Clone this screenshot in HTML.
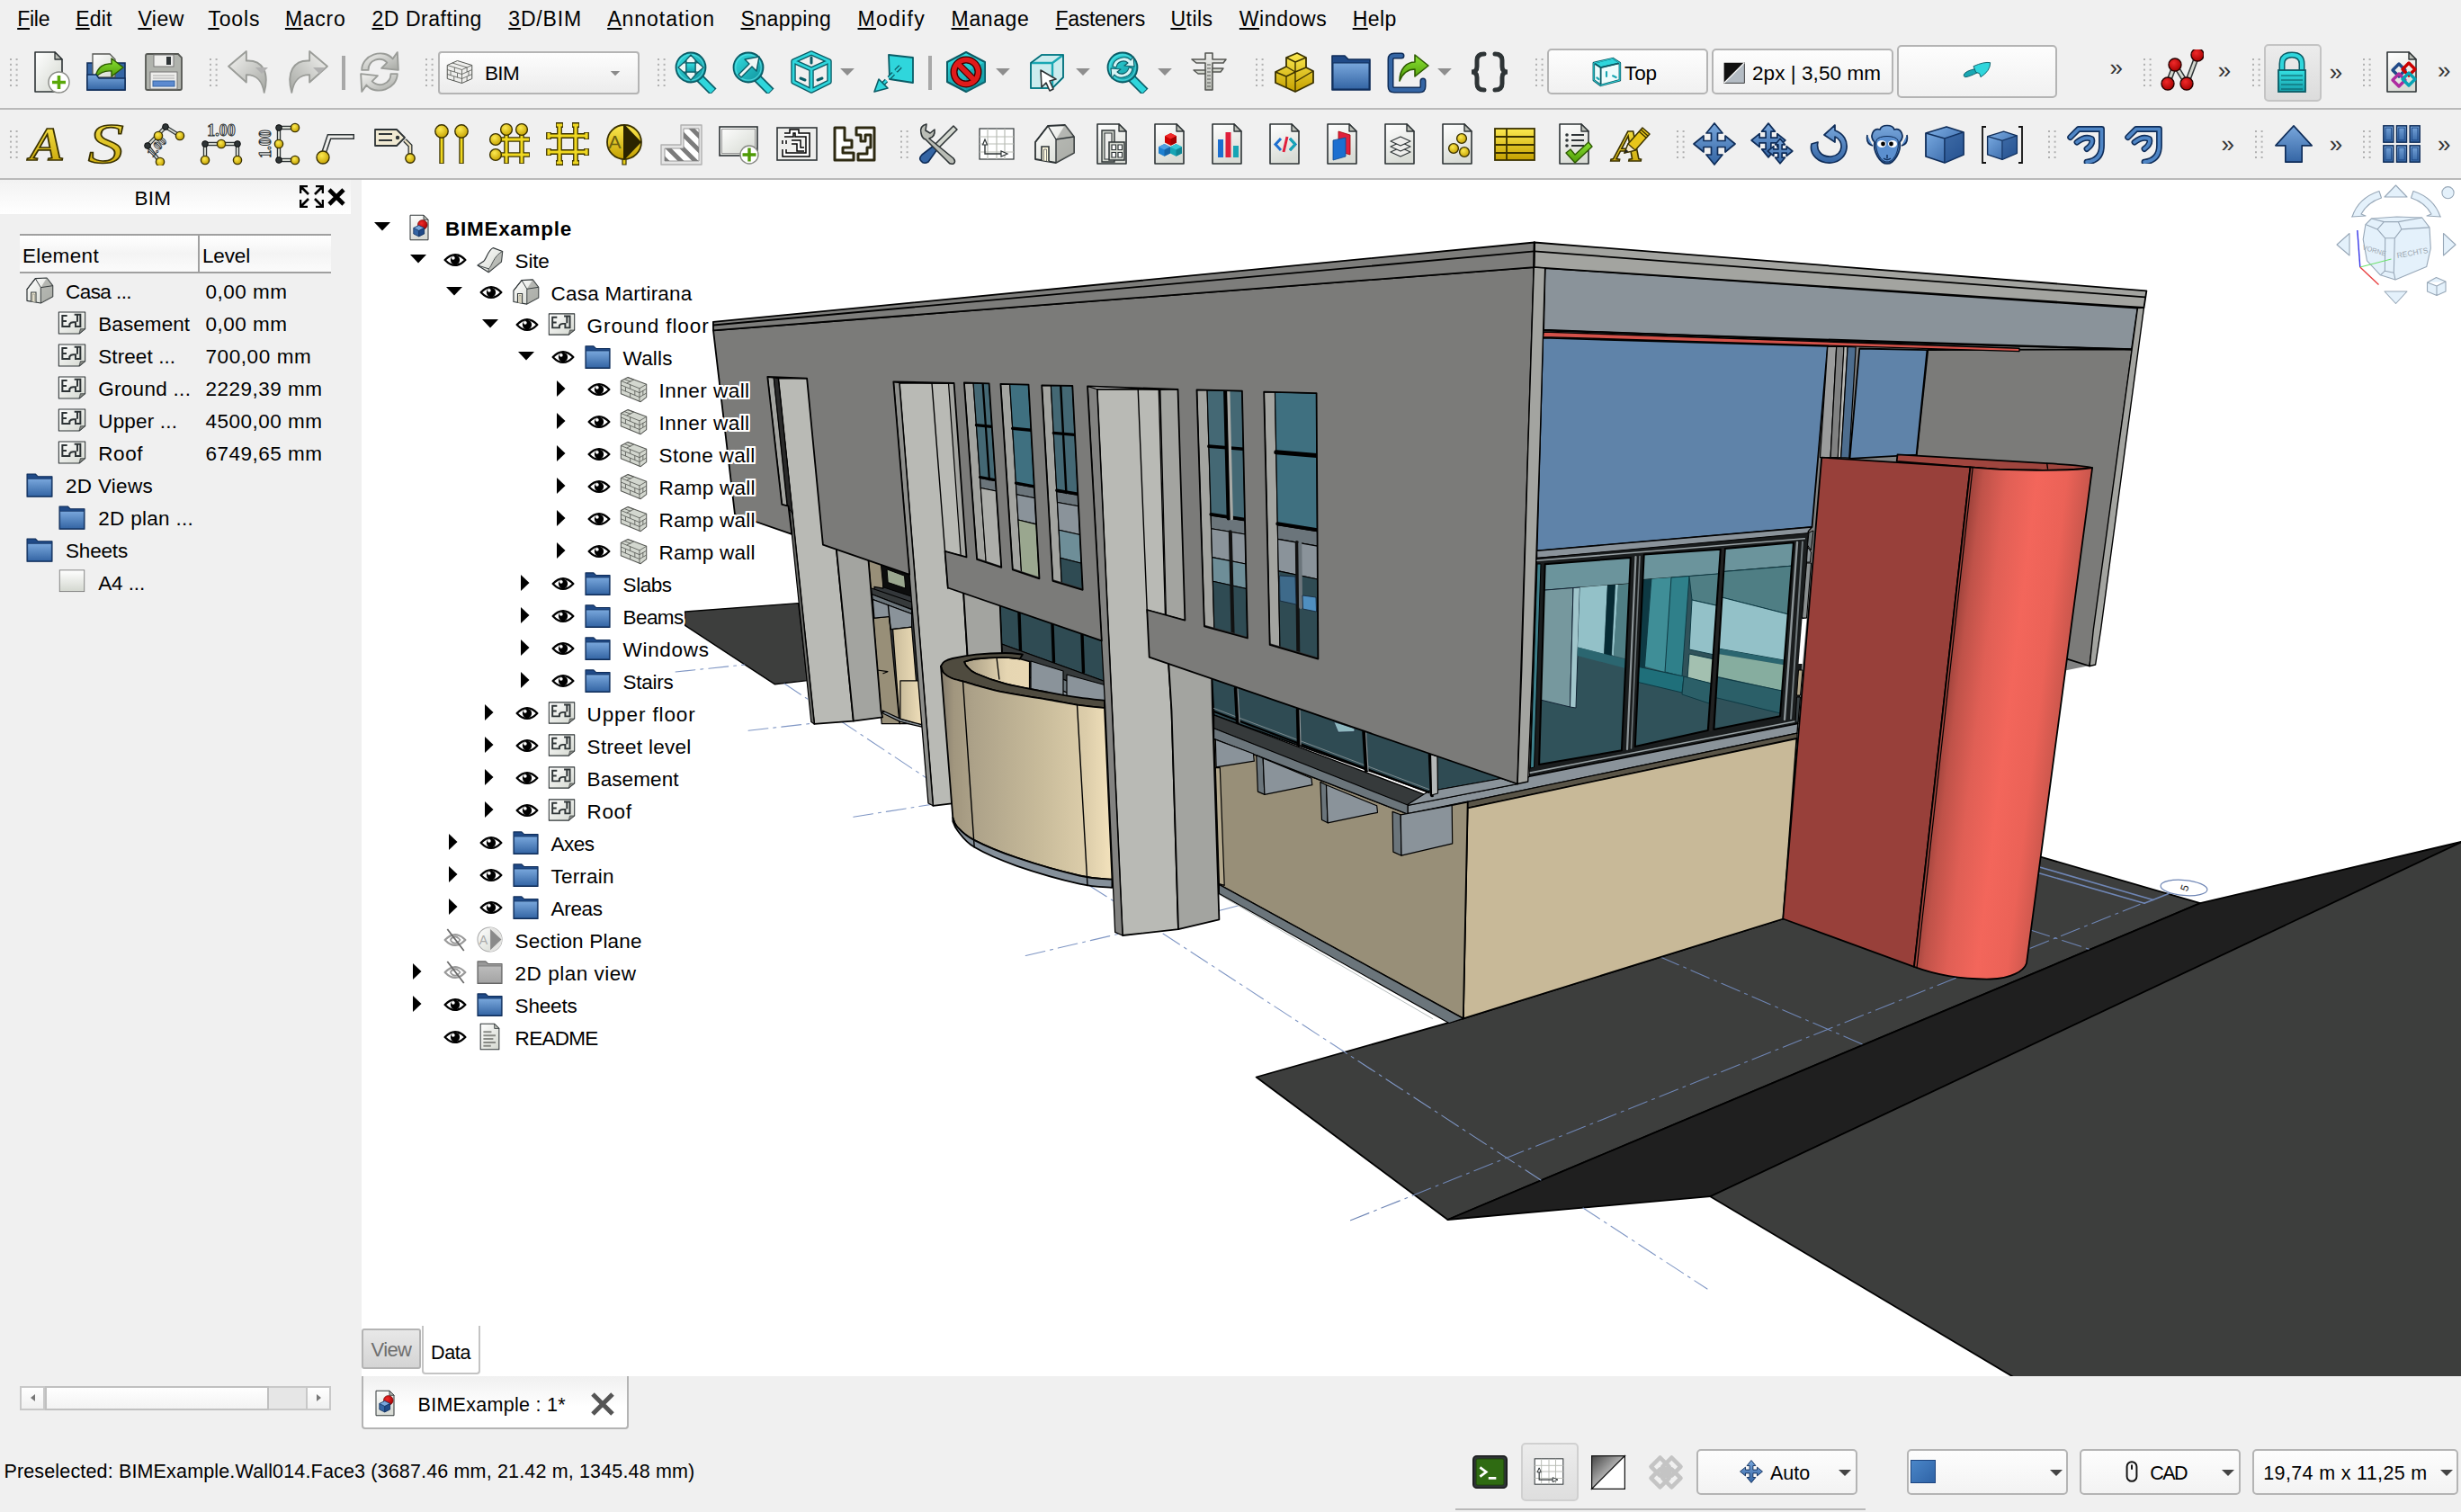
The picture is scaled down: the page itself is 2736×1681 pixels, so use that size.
<!DOCTYPE html><html><head><meta charset="utf-8"><title>FreeCAD BIM</title><style>
html,body{margin:0;padding:0}
body{width:2736px;height:1681px;position:relative;overflow:hidden;background:#f0f0f0;font-family:"Liberation Sans",sans-serif;color:#000}
.abs{position:absolute}
.t{position:absolute;white-space:nowrap;line-height:1}
</style></head><body>
<div class="abs" style="left:402px;top:200px;width:2334px;height:1330px;background:#fff"></div>
<svg width="2334" height="1330" viewBox="402 200 2334 1330" style="position:absolute;left:402px;top:200px;display:block"><defs>
<linearGradient id="gcyl" x1="0" y1="0" x2="1" y2="0"><stop offset="0" stop-color="#9c423b"/><stop offset="0.12" stop-color="#c4544b"/><stop offset="0.35" stop-color="#e56258"/><stop offset="0.55" stop-color="#f3665b"/><stop offset="0.8" stop-color="#e96156"/><stop offset="1" stop-color="#c4544b"/></linearGradient>
<linearGradient id="gcurve" x1="0" y1="0" x2="1" y2="0"><stop offset="0" stop-color="#857c69"/><stop offset="0.1" stop-color="#a69b82"/><stop offset="0.45" stop-color="#c0b496"/><stop offset="0.8" stop-color="#d9cba8"/><stop offset="1" stop-color="#f3e2bc"/></linearGradient>
<linearGradient id="gcurve2" x1="0" y1="0" x2="1" y2="0"><stop offset="0" stop-color="#a69b82"/><stop offset="0.5" stop-color="#e6d6b2"/><stop offset="1" stop-color="#ead9b5"/></linearGradient>
<linearGradient id="gcylu" gradientUnits="userSpaceOnUse" x1="2193" y1="520" x2="2326" y2="520" gradientTransform="matrix(1 0 -0.122 1 63.4 0)"><stop offset="0" stop-color="#9c423b"/><stop offset="0.1" stop-color="#bf5249"/><stop offset="0.3" stop-color="#e05f55"/><stop offset="0.55" stop-color="#f3665b"/><stop offset="0.8" stop-color="#eb6257"/><stop offset="1" stop-color="#c8564c"/></linearGradient>
<linearGradient id="gcurveu" gradientUnits="userSpaceOnUse" x1="1045" y1="0" x2="1236" y2="0"><stop offset="0" stop-color="#80786a"/><stop offset="0.08" stop-color="#a1967e"/><stop offset="0.2" stop-color="#ada289"/><stop offset="0.6" stop-color="#c9bc9b"/><stop offset="0.85" stop-color="#dccdaa"/><stop offset="1" stop-color="#f3e2bc"/></linearGradient>
<linearGradient id="gsmall" x1="0" y1="0" x2="1" y2="0"><stop offset="0" stop-color="#c9bc9b"/><stop offset="1" stop-color="#f0dfba"/></linearGradient>
</defs><polygon points="761.6,680.0 887.6,670.6 897.6,756.6 861.2,760.7 761.6,695.3" fill="#3d3e3d" stroke="#000" stroke-width="1.4" stroke-linejoin="round" />
<polygon points="1396.6,1197.5 1626.8,1132.4 1982.5,1021.5 2268.6,952.6 2446.0,1004.2 1609.5,1356.0" fill="#3d3e3d" stroke="#000" stroke-width="1.8" stroke-linejoin="round" />
<polygon points="1609.5,1356.0 2446.0,1004.2 2736.0,936.0 2740.0,936.0 1901.4,1330.2" fill="#1f1f1f" stroke="#000" stroke-width="1.8" stroke-linejoin="round" />
<polygon points="1901.4,1330.2 2740.0,934.5 2740.0,1534.0 2243.5,1534.0" fill="#3d3e3d" stroke="#000" stroke-width="1.8" stroke-linejoin="round" />
<polyline points="751.0,747.0 828.0,739.0" fill="none" stroke="#7f96c4" stroke-width="1.1" stroke-linecap="round" stroke-linejoin="round" stroke-dasharray="22 6 3 6"/>
<polyline points="872.0,760.0 1030.0,865.0" fill="none" stroke="#7f96c4" stroke-width="1.1" stroke-linecap="round" stroke-linejoin="round" stroke-dasharray="22 6 3 6"/>
<polyline points="832.0,812.3 905.0,804.0" fill="none" stroke="#7f96c4" stroke-width="1.1" stroke-linecap="round" stroke-linejoin="round" stroke-dasharray="22 6 3 6"/>
<polyline points="948.8,908.2 1034.8,894.5" fill="none" stroke="#7f96c4" stroke-width="1.1" stroke-linecap="round" stroke-linejoin="round" stroke-dasharray="22 6 3 6"/>
<polyline points="1140.3,1062.5 1244.4,1038.1" fill="none" stroke="#7f96c4" stroke-width="1.1" stroke-linecap="round" stroke-linejoin="round" stroke-dasharray="22 6 3 6"/>
<polyline points="1211.6,985.0 1238.0,1001.7" fill="none" stroke="#7f96c4" stroke-width="1.1" stroke-linecap="round" stroke-linejoin="round" stroke-dasharray="22 6 3 6"/>
<polyline points="1293.0,1038.0 1713.0,1312.0" fill="none" stroke="#7f96c4" stroke-width="1.1" stroke-linecap="round" stroke-linejoin="round" stroke-dasharray="22 6 3 6"/>
<polyline points="1760.0,1343.0 1898.0,1433.0" fill="none" stroke="#7f96c4" stroke-width="1.1" stroke-linecap="round" stroke-linejoin="round" stroke-dasharray="22 6 3 6"/>
<polyline points="1355.0,1012.5 1392.0,1002.8" fill="none" stroke="#7f96c4" stroke-width="1.1" stroke-linecap="round" stroke-linejoin="round" stroke-dasharray="22 6 3 6"/>
<polyline points="1501.5,1356.8 2379.0,1005.4" fill="none" stroke="#6f86b5" stroke-width="1.1" stroke-linecap="round" stroke-linejoin="round" stroke-dasharray="22 6 3 6"/>
<polyline points="1846.0,1064.0 2073.0,1162.0" fill="none" stroke="#6f86b5" stroke-width="1.1" stroke-linecap="round" stroke-linejoin="round" stroke-dasharray="22 6 3 6"/>
<polyline points="2257.5,1033.9 2325.7,1056.3" fill="none" stroke="#6f86b5" stroke-width="1.1" stroke-linecap="round" stroke-linejoin="round" stroke-dasharray="22 6 3 6"/>
<polyline points="2267.4,964.0 2393.9,1000.5" fill="none" stroke="#6f86b5" stroke-width="1.6" stroke-linecap="round" stroke-linejoin="round" />
<polyline points="2266.9,970.7 2384.0,1004.2" fill="none" stroke="#6f86b5" stroke-width="1.6" stroke-linecap="round" stroke-linejoin="round" />
<polyline points="2384.0,1004.2 2411.0,993.5" fill="none" stroke="#6f86b5" stroke-width="1.6" stroke-linecap="round" stroke-linejoin="round" />
<ellipse cx="2428" cy="987" rx="26" ry="8.5" fill="#fff" stroke="#6f86b5" stroke-width="1.2" transform="rotate(5 2428 987)"/>
<text x="2428" y="992" font-family="Liberation Sans, sans-serif" font-size="12" text-anchor="middle" fill="#222" transform="rotate(-70 2428 987)">5</text>
<polyline points="1354.9,994.2 1592.6,1132.5" fill="none" stroke="#b5bcbc" stroke-width="1" stroke-linecap="round" stroke-linejoin="round" />
<polygon points="1705.0,297.0 2376.0,342.0 2323.0,740.0 2000.0,805.0 1700.0,863.0" fill="#808181" stroke="none" stroke-width="1.8" stroke-linejoin="round" />
<polygon points="2143.3,389.0 2370.5,388.3 2323.1,740.5 2297.2,732.4 2250.0,715.0 2125.0,560.0" fill="#7b7b79" stroke="#000" stroke-width="1.8" stroke-linejoin="round" />
<polygon points="1717.7,298.0 2376.5,342.5 2369.9,388.3 2040.0,379.2 1716.1,366.6" fill="#8a939a" stroke="#000" stroke-width="1.8" stroke-linejoin="round" />
<polygon points="1715.2,375.7 2031.9,384.8 2014.5,586.0 1708.6,612.4" fill="#5f83a9" stroke="#000" stroke-width="1.8" stroke-linejoin="round" />
<polygon points="2031.8,385.4 2041.7,385.4 2035.1,508.6 2023.5,508.6" fill="#9b9c9c" stroke="#000" stroke-width="1.2" stroke-linejoin="round" />
<polygon points="2041.7,385.4 2050.0,385.4 2043.3,508.6 2035.1,508.6" fill="#808181" stroke="#000" stroke-width="1.2" stroke-linejoin="round" />
<polygon points="2050.0,385.4 2054.1,385.4 2046.7,508.6 2043.3,508.6" fill="#b4b5b2" stroke="#000" stroke-width="1" stroke-linejoin="round" />
<polygon points="2054.1,385.4 2063.2,385.8 2055.8,509.1 2046.7,508.6" fill="#4d6d8e" stroke="#000" stroke-width="1.2" stroke-linejoin="round" />
<polygon points="2067.3,387.5 2142.5,389.1 2130.6,505.7 2056.5,509.8" fill="#5f83a9" stroke="#000" stroke-width="1.8" stroke-linejoin="round" />
<polygon points="1716.1,369.1 2245.0,387.3 2245.0,390.6 1715.2,374.6" fill="#d4524a" stroke="#000" stroke-width="1.4" stroke-linejoin="round" />
<polyline points="1716.1,367.6 2369.9,388.3" fill="none" stroke="#000" stroke-width="2" stroke-linecap="round" stroke-linejoin="round" />
<polygon points="1705.8,269.5 2386.4,323.3 2383.5,342.0 1705.3,297.1" fill="#a3a4a0" stroke="#000" stroke-width="1.8" stroke-linejoin="round" />
<polyline points="1705.8,279.4 2385.0,330.4" fill="none" stroke="#000" stroke-width="1.8" stroke-linecap="round" stroke-linejoin="round" />
<polygon points="2383.5,342.0 2335.6,700.0 2329.6,739.0 2323.1,740.5 2327.3,700.0 2376.5,342.5" fill="#a3a4a0" stroke="#000" stroke-width="1.4" stroke-linejoin="round" />
<polygon points="1708.6,612.4 2014.5,586.0 2010.4,590.6 2009.6,595.9 1708.6,620.4" fill="#8a939a" stroke="#000" stroke-width="1.4" stroke-linejoin="round" />
<polygon points="1708.6,620.5 2010.4,592.6 1998.8,804.5 1700.4,863.2" fill="#1a1d1e" stroke="#000" stroke-width="1" stroke-linejoin="round" />
<polyline points="1708.6,623.2 2006.3,598.7" fill="none" stroke="#9aa3a6" stroke-width="1.6" stroke-linecap="round" stroke-linejoin="round" />
<polyline points="1701.2,859.1 1998.0,801.5" fill="none" stroke="#9aa3a6" stroke-width="1.6" stroke-linecap="round" stroke-linejoin="round" />
<clipPath id="p1"><polygon points="1717.7,627.3 1812.8,619.9 1802.9,834.3 1711.1,850.0"/></clipPath>
<clipPath id="p2"><polygon points="1827.7,616.6 1912.8,610.8 1898.8,811.9 1817.8,830.1"/></clipPath>
<clipPath id="p3"><polygon points="1917.8,610.0 1993.9,603.3 1979.0,796.2 1905.4,811.1"/></clipPath>
<polygon points="1717.7,627.3 1812.8,619.9 1802.9,834.3 1711.1,850.0" fill="#30525a" stroke="none" stroke-width="1" stroke-linejoin="round" clip-path="url(#p1)"/>
<polygon points="1700.0,600.0 1830.0,600.0 1830.0,647.5 1700.0,657.5" fill="#6b949c" stroke="#000" stroke-width="1" stroke-linejoin="round" clip-path="url(#p1)"/>
<polygon points="1700.0,657.5 1749.0,653.5 1745.5,786.0 1700.0,775.0" fill="#76989e" stroke="#123" stroke-width="1" stroke-linejoin="round" clip-path="url(#p1)"/>
<polygon points="1749.0,653.5 1756.5,653.0 1752.0,787.0 1745.5,786.0" fill="#a0c5cb" stroke="#123" stroke-width="1" stroke-linejoin="round" clip-path="url(#p1)"/>
<polygon points="1756.5,653.0 1787.0,650.5 1783.0,727.0 1754.0,719.5" fill="#93c1c8" stroke="none" stroke-width="1" stroke-linejoin="round" clip-path="url(#p1)"/>
<polygon points="1787.0,650.5 1796.0,650.0 1791.0,736.0 1783.0,734.0" fill="#062a33" stroke="none" stroke-width="1" stroke-linejoin="round" clip-path="url(#p1)"/>
<polygon points="1796.0,650.0 1799.0,650.0 1794.0,729.0 1792.0,728.0" fill="#93c1c8" stroke="none" stroke-width="1" stroke-linejoin="round" clip-path="url(#p1)"/>
<polygon points="1799.0,650.0 1815.0,648.5 1810.0,733.0 1794.0,729.0" fill="#4f7e84" stroke="none" stroke-width="1" stroke-linejoin="round" clip-path="url(#p1)"/>
<polygon points="1754.0,719.5 1815.0,735.0 1815.0,745.0 1753.5,729.0" fill="#2b6670" stroke="none" stroke-width="1" stroke-linejoin="round" clip-path="url(#p1)"/>
<polygon points="1827.7,616.6 1912.8,610.8 1898.8,811.9 1817.8,830.1" fill="#30525a" stroke="none" stroke-width="1" stroke-linejoin="round" clip-path="url(#p2)"/>
<polygon points="1820.0,600.0 1920.0,600.0 1920.0,637.5 1820.0,645.0" fill="#6b949c" stroke="#000" stroke-width="1" stroke-linejoin="round" clip-path="url(#p2)"/>
<polygon points="1820.0,645.0 1836.5,643.5 1828.0,760.0 1815.0,757.0" fill="#0e3a44" stroke="none" stroke-width="1" stroke-linejoin="round" clip-path="url(#p2)"/>
<polygon points="1836.5,643.5 1858.0,642.0 1851.0,747.0 1829.0,741.0" fill="#3f8e97" stroke="none" stroke-width="1" stroke-linejoin="round" clip-path="url(#p2)"/>
<polygon points="1858.0,642.0 1878.0,640.5 1870.0,752.0 1851.0,747.0" fill="#2f808a" stroke="#0e3a44" stroke-width="1" stroke-linejoin="round" clip-path="url(#p2)"/>
<polygon points="1878.0,640.5 1915.0,637.5 1912.0,674.0 1881.0,667.0" fill="#4f7e84" stroke="#0e3a44" stroke-width="1" stroke-linejoin="round" clip-path="url(#p2)"/>
<polygon points="1881.0,667.0 1912.0,674.0 1906.0,728.0 1878.0,722.0" fill="#93c1c8" stroke="#0e3a44" stroke-width="1" stroke-linejoin="round" clip-path="url(#p2)"/>
<polygon points="1878.0,727.0 1906.0,733.0 1903.0,760.0 1876.0,754.0" fill="#a3c0b0" stroke="#0e3a44" stroke-width="1" stroke-linejoin="round" clip-path="url(#p2)"/>
<polygon points="1815.0,740.0 1872.0,752.0 1870.0,770.0 1815.0,757.0" fill="#1f6f7a" stroke="#0e3a44" stroke-width="1" stroke-linejoin="round" clip-path="url(#p2)"/>
<polygon points="1872.0,752.0 1903.0,760.0 1900.0,782.0 1870.0,772.0" fill="#2b5f68" stroke="#0e3a44" stroke-width="1" stroke-linejoin="round" clip-path="url(#p2)"/>
<polygon points="1917.8,610.0 1993.9,603.3 1979.0,796.2 1905.4,811.1" fill="#30525a" stroke="none" stroke-width="1" stroke-linejoin="round" clip-path="url(#p3)"/>
<polygon points="1910.0,600.0 2000.0,600.0 2000.0,628.5 1910.0,636.0" fill="#6b949c" stroke="#000" stroke-width="1" stroke-linejoin="round" clip-path="url(#p3)"/>
<polygon points="1910.0,636.0 2000.0,628.5 2000.0,686.0 1910.0,663.0" fill="#4f7e84" stroke="#0e3a44" stroke-width="1" stroke-linejoin="round" clip-path="url(#p3)"/>
<polygon points="1910.0,663.0 2000.0,686.0 2000.0,737.0 1910.0,721.0" fill="#93c1c8" stroke="#0e3a44" stroke-width="1" stroke-linejoin="round" clip-path="url(#p3)"/>
<polygon points="1910.0,721.0 2000.0,737.0 2000.0,742.0 1910.0,727.0" fill="#2b6670" stroke="none" stroke-width="1" stroke-linejoin="round" clip-path="url(#p3)"/>
<polygon points="1910.0,727.0 2000.0,742.0 2000.0,772.0 1910.0,752.0" fill="#86ad9f" stroke="none" stroke-width="1" stroke-linejoin="round" clip-path="url(#p3)"/>
<polygon points="1905.0,752.0 2000.0,772.0 2000.0,798.0 1905.0,775.0" fill="#2b5f68" stroke="#0e3a44" stroke-width="1" stroke-linejoin="round" clip-path="url(#p3)"/>
<polygon points="1717.7,627.3 1812.8,619.9 1802.9,834.3 1711.1,850.0" fill="none" stroke="#000" stroke-width="2" stroke-linejoin="round" />
<polygon points="1827.7,616.6 1912.8,610.8 1898.8,811.9 1817.8,830.1" fill="none" stroke="#000" stroke-width="2" stroke-linejoin="round" />
<polygon points="1917.8,610.0 1993.9,603.3 1979.0,796.2 1905.4,811.1" fill="none" stroke="#000" stroke-width="2" stroke-linejoin="round" />
<polygon points="1709.0,627.0 1713.0,627.0 1705.5,853.0 1701.5,854.0" fill="#3d7f8a" stroke="#000" stroke-width="1" stroke-linejoin="round" />
<polyline points="1818.5,619.0 1809.0,833.0" fill="none" stroke="#8d9598" stroke-width="2.2" stroke-linecap="round" stroke-linejoin="round" />
<polyline points="1823.0,618.5 1813.5,832.0" fill="none" stroke="#70787b" stroke-width="1.6" stroke-linecap="round" stroke-linejoin="round" />
<polyline points="1915.5,610.5 1902.0,811.5" fill="none" stroke="#222" stroke-width="3" stroke-linecap="round" stroke-linejoin="round" />
<polyline points="1998.0,603.0 1984.0,800.0" fill="none" stroke="#8d9598" stroke-width="2.4" stroke-linecap="round" stroke-linejoin="round" />
<polyline points="2004.0,602.5 1991.0,799.0" fill="none" stroke="#70787b" stroke-width="2" stroke-linecap="round" stroke-linejoin="round" />
<polygon points="1600.0,885.0 1640.0,880.0 1640.0,905.0 1600.0,910.0" fill="#988f78" stroke="none" stroke-width="1.8" stroke-linejoin="round" />
<polygon points="1565.0,895.0 1687.1,871.5 1700.4,863.2 1998.8,804.5 1998.0,815.2 1640.0,889.6 1565.0,905.1" fill="#8a939a" stroke="#000" stroke-width="1.4" stroke-linejoin="round" />
<polygon points="1631.7,891.3 1998.0,815.2 1998.0,821.0 1631.7,898.3" fill="#5a5548" stroke="#000" stroke-width="1.2" stroke-linejoin="round" />
<polygon points="1631.7,898.3 1997.4,821.0 1982.5,1021.5 1626.8,1132.4" fill="#c8b998" stroke="#000" stroke-width="1.8" stroke-linejoin="round" />
<polygon points="2011.0,592.0 2016.0,590.0 2013.5,612.0 2009.5,606.0" fill="#6f7779" stroke="#000" stroke-width="1" stroke-linejoin="round" />
<polygon points="2009.5,608.0 2013.5,614.0 2012.5,625.0 2008.5,625.0" fill="#8d9599" stroke="#000" stroke-width="1" stroke-linejoin="round" />
<polygon points="2008.5,626.0 2013.5,626.0 2008.5,687.0 2003.5,687.0" fill="#8a8f90" stroke="#000" stroke-width="1" stroke-linejoin="round" />
<polygon points="2003.5,688.0 2008.5,688.0 2004.0,738.0 1999.5,738.0" fill="#ffffff" stroke="none" stroke-width="1.8" stroke-linejoin="round" />
<polygon points="1999.5,745.0 2004.0,745.0 2001.5,773.0 1997.5,773.0" fill="#b0a488" stroke="#000" stroke-width="1" stroke-linejoin="round" />
<polygon points="1997.5,775.0 2001.5,775.0 1999.0,803.0 1996.0,803.0" fill="#3a4245" stroke="#000" stroke-width="1" stroke-linejoin="round" />
<path d="M2109.5,505.3 L2275.7,515.2 C2300,516.5 2320,518 2326.1,520.2 C2300,524 2230,523.5 2190.5,519.4 L2108.7,512.8 Z" fill="#9f453e" stroke="#000" stroke-width="1.8" stroke-linejoin="round" />
<polyline points="2275.7,515.2 2276.5,521.0" fill="none" stroke="#000" stroke-width="1.4" stroke-linecap="round" stroke-linejoin="round" />
<polygon points="2025.2,508.6 2190.5,519.4 2128.0,1074.9 1982.2,1021.5" fill="#98403a" stroke="#000" stroke-width="1.8" stroke-linejoin="round" />
<path d="M2190.5,519.4 L2128,1074.9 C2150,1083 2180,1089 2213,1088.5 C2235,1088 2250,1080 2253,1071 L2326.1,520.2 C2300,524 2230,523.5 2190.5,519.4 Z" fill="url(#gcylu)" stroke="#000" stroke-width="1.8" stroke-linejoin="round" />
<polyline points="2193.2,519.8 2131.0,1076.0" fill="none" stroke="#000" stroke-width="1.2" stroke-linecap="round" stroke-linejoin="round" />
<polygon points="1349.6,821.4 1565.0,905.0 1631.7,891.5 1626.8,1132.4 1355.4,983.5" fill="#988f78" stroke="#000" stroke-width="1.8" stroke-linejoin="round" />
<polygon points="1351.3,853.7 1356.3,853.7 1361.2,984.3 1355.4,982.6" fill="#b3a88c" stroke="#000" stroke-width="1.2" stroke-linejoin="round" />
<polygon points="1355.4,983.5 1626.8,1132.4 1611.0,1137.5 1355.4,993.4" fill="#6b757b" stroke="#000" stroke-width="1.2" stroke-linejoin="round" />
<polygon points="1347.2,753.0 1687.1,869.5 1669.0,866.0 1587.8,880.4 1349.6,795.0" fill="#2f4b53" stroke="#000" stroke-width="1.8" stroke-linejoin="round" />
<polygon points="1349.6,795.0 1588.6,885.1 1563.0,895.8 1349.6,809.8" fill="#363a3b" stroke="#000" stroke-width="1.2" stroke-linejoin="round" />
<polygon points="1587.8,880.0 1669.0,865.5 1687.1,871.5 1563.0,895.8" fill="#8a939a" stroke="#000" stroke-width="1.2" stroke-linejoin="round" />
<polygon points="1349.6,809.8 1565.0,895.0 1565.0,905.0 1349.6,821.4" fill="#6b757b" stroke="#000" stroke-width="1.2" stroke-linejoin="round" />
<polyline points="1349.6,791.0 1588.6,881.0" fill="none" stroke="#000" stroke-width="2.4" stroke-linecap="round" stroke-linejoin="round" />
<polyline points="1349.6,787.5 1588.6,877.5" fill="none" stroke="#7d8a8e" stroke-width="1" stroke-linecap="round" stroke-linejoin="round" />
<polyline points="1374.0,765.5 1376.0,803.0" fill="none" stroke="#000" stroke-width="4.5" stroke-linecap="round" stroke-linejoin="round" />
<polyline points="1376.0,765.5 1378.0,803.0" fill="none" stroke="#8d9598" stroke-width="1.2" stroke-linecap="round" stroke-linejoin="round" />
<polyline points="1443.0,789.0 1444.0,828.0" fill="none" stroke="#000" stroke-width="4.5" stroke-linecap="round" stroke-linejoin="round" />
<polyline points="1445.0,789.0 1446.0,828.0" fill="none" stroke="#8d9598" stroke-width="1.2" stroke-linecap="round" stroke-linejoin="round" />
<polyline points="1516.5,813.5 1519.0,856.5" fill="none" stroke="#000" stroke-width="4.5" stroke-linecap="round" stroke-linejoin="round" />
<polyline points="1518.5,813.5 1521.0,856.5" fill="none" stroke="#8d9598" stroke-width="1.2" stroke-linecap="round" stroke-linejoin="round" />
<polyline points="1590.0,838.5 1592.0,884.0" fill="none" stroke="#000" stroke-width="4.5" stroke-linecap="round" stroke-linejoin="round" />
<polyline points="1592.0,838.5 1594.0,884.0" fill="none" stroke="#8d9598" stroke-width="1.2" stroke-linecap="round" stroke-linejoin="round" />
<polygon points="1590.5,838.5 1598.0,841.0 1598.5,882.0 1591.5,884.0" fill="#b4b8b8" stroke="#000" stroke-width="1.2" stroke-linejoin="round" />
<polygon points="1482.8,802.4 1505.9,809.8 1505.9,813.5 1487.7,814.1" fill="#8fb9c0" stroke="#234" stroke-width="0.8" stroke-linejoin="round" />
<polygon points="1351.3,822.2 1393.5,838.0 1394.3,846.2 1352.1,852.8" fill="#8a939a" stroke="#000" stroke-width="1.2" stroke-linejoin="round" />
<polygon points="1396.8,839.6 1404.2,842.9 1405.9,883.4 1398.4,880.1" fill="#6b757b" stroke="#000" stroke-width="1.2" stroke-linejoin="round" />
<polygon points="1404.2,842.9 1458.0,865.2 1458.8,872.7 1405.9,883.4" fill="#8a939a" stroke="#000" stroke-width="1.2" stroke-linejoin="round" />
<polygon points="1467.9,869.4 1474.5,872.7 1476.1,914.8 1469.5,911.5" fill="#6b757b" stroke="#000" stroke-width="1.2" stroke-linejoin="round" />
<polygon points="1474.5,872.7 1530.7,895.8 1531.5,903.3 1476.1,914.8" fill="#8a939a" stroke="#000" stroke-width="1.2" stroke-linejoin="round" />
<polygon points="1548.1,902.4 1557.2,905.8 1558.0,951.2 1548.9,947.1" fill="#6b757b" stroke="#000" stroke-width="1.2" stroke-linejoin="round" />
<polygon points="1557.2,905.8 1614.2,895.5 1614.7,937.8 1558.0,951.2" fill="#8a939a" stroke="#000" stroke-width="1.2" stroke-linejoin="round" />
<polygon points="965.4,621.0 1015.0,638.4 1024.9,804.6 980.2,804.6" fill="#33373a" stroke="none" stroke-width="1.8" stroke-linejoin="round" />
<polygon points="965.4,621.9 981.9,627.6 981.9,654.1 972.0,652.4 972.0,687.2 988.5,685.5 1000.1,804.6 980.2,804.6" fill="#988f78" stroke="#000" stroke-width="1.2" stroke-linejoin="round" />
<polygon points="979.4,627.6 1010.8,636.7 1013.6,663.2 981.9,652.8" fill="#0c0d0d" stroke="#000" stroke-width="1" stroke-linejoin="round" />
<polygon points="986.0,632.9 1005.5,640.2 1006.7,654.1 987.2,647.5" fill="#9aa78f" stroke="#000" stroke-width="1" stroke-linejoin="round" />
<polygon points="968.3,653.8 1013.6,669.3 1013.6,677.6 969.3,660.7" fill="#363a3b" stroke="#000" stroke-width="1.2" stroke-linejoin="round" />
<polygon points="969.3,660.7 1013.6,677.6 1013.6,682.5 970.3,666.5" fill="#6b757b" stroke="#000" stroke-width="1.2" stroke-linejoin="round" />
<polygon points="970.3,666.5 1013.6,682.5 1013.6,697.1 990.2,699.6 988.5,685.5 972.0,687.2" fill="#8a939a" stroke="#000" stroke-width="1.2" stroke-linejoin="round" />
<polyline points="987.4,673.1 990.2,699.6" fill="none" stroke="#000" stroke-width="1.4" stroke-linecap="round" stroke-linejoin="round" />
<polygon points="992.6,699.6 1013.6,697.1 1022.4,804.6 1000.4,804.6" fill="url(#gsmall)" stroke="#000" stroke-width="1.2" stroke-linejoin="round" />
<polyline points="975.3,745.0 986.9,746.7 981.9,748.7" fill="none" stroke="#000" stroke-width="1.2" stroke-linecap="round" stroke-linejoin="round" />
<polygon points="981.1,790.0 1000.9,799.1 1024.9,805.7 1024.9,808.2 1000.9,802.4 981.9,793.3" fill="#8a939a" stroke="#000" stroke-width="1.2" stroke-linejoin="round" />
<polygon points="1000.9,756.9 1024.9,756.9 1024.9,805.7 1000.9,799.1" fill="url(#gsmall)" stroke="#000" stroke-width="1.2" stroke-linejoin="round" />
<polygon points="1111.7,671.5 1235.0,713.5 1235.0,760.0 1113.5,716.0" fill="#2f4b53" stroke="#000" stroke-width="1.2" stroke-linejoin="round" />
<polyline points="1133.0,681.2 1134.5,723.2" fill="none" stroke="#000" stroke-width="3.4" stroke-linecap="round" stroke-linejoin="round" />
<polyline points="1170.0,694.0 1171.5,736.0" fill="none" stroke="#000" stroke-width="3.4" stroke-linecap="round" stroke-linejoin="round" />
<polyline points="1203.0,705.3 1204.5,747.3" fill="none" stroke="#000" stroke-width="3.4" stroke-linecap="round" stroke-linejoin="round" />
<polygon points="1113.5,716.0 1235.0,760.0 1235.0,776.0 1114.5,729.0" fill="#363a3b" stroke="#000" stroke-width="1.2" stroke-linejoin="round" />
<polygon points="1114.5,729.0 1235.0,776.0 1235.0,790.0 1115.0,741.0" fill="#6b757b" stroke="#000" stroke-width="1.2" stroke-linejoin="round" />
<polygon points="1115.0,741.0 1235.0,790.0 1235.0,900.0 1150.0,880.0 1116.0,800.0" fill="#8a939a" stroke="#000" stroke-width="1.2" stroke-linejoin="round" />
<polygon points="865.2,420.7 912.0,420.7 929.8,609.5 948.8,801.6 905.3,804.9" fill="#b9bab5" stroke="#000" stroke-width="1.8" stroke-linejoin="round" />
<polygon points="929.8,609.5 965.4,621.8 979.4,790.0 981.1,797.4 948.8,801.6" fill="#a3a4a0" stroke="#000" stroke-width="1.8" stroke-linejoin="round" />
<polygon points="862.5,420.5 865.2,420.7 905.3,804.9 901.8,802.5" fill="#6a6b68" stroke="#000" stroke-width="1.2" stroke-linejoin="round" />
<polygon points="999.9,425.7 1062.0,426.0 1071.2,660.5 1080.0,800.0 1058.0,893.3 1037.3,895.8" fill="#b9bab5" stroke="#000" stroke-width="1.8" stroke-linejoin="round" />
<polygon points="1071.2,658.5 1111.7,672.0 1117.0,800.0 1080.0,800.0" fill="#a3a4a0" stroke="#000" stroke-width="1.8" stroke-linejoin="round" />
<polygon points="993.3,424.3 999.9,425.7 1037.3,895.8 1032.0,893.0" fill="#8e8f8c" stroke="#000" stroke-width="1.3" stroke-linejoin="round" />
<polygon points="1146.0,735.0 1182.0,746.0 1182.0,775.0 1160.0,772.0 1146.0,768.0" fill="#8a939a" stroke="#000" stroke-width="1.2" stroke-linejoin="round" />
<polygon points="1186.0,750.0 1230.0,762.0 1230.0,785.0 1186.0,778.0" fill="#8a939a" stroke="#000" stroke-width="1.2" stroke-linejoin="round" />
<path d="M1072.0,735.8 C1074.2,735.2 1078.0,733.3 1085.0,732.5 C1092.0,731.7 1106.2,730.9 1114.3,730.9 C1122.4,730.9 1130.5,732.2 1133.8,732.5 L1144.8,735.5 L1144.8,767.0 L1166.3,769.9 C1158.2,768.3 1131.1,763.6 1117.6,760.1 C1104.0,756.6 1092.1,752.0 1085.0,748.8 C1077.9,745.6 1077.2,743.2 1075.0,741.0 C1072.8,738.8 1072.5,736.7 1072.0,735.8 Z" fill="url(#gcurve2)" stroke="#000" stroke-width="1.8" stroke-linejoin="round" />
<polyline points="1107.9,730.2 1110.9,755.0" fill="none" stroke="#000" stroke-width="1.3" stroke-linecap="round" stroke-linejoin="round" />
<path d="M1046.0,740.6 C1046.7,739.8 1047.8,736.9 1050.0,735.5 C1052.2,734.1 1053.2,733.3 1059.0,732.0 C1064.8,730.7 1075.2,728.6 1085.0,727.6 C1094.8,726.6 1108.9,726.0 1117.6,726.0 C1126.3,726.0 1133.8,727.3 1137.0,727.6 L1133.8,732.5 C1130.5,732.2 1122.4,730.9 1114.3,730.9 C1106.2,730.9 1092.0,731.7 1085.0,732.5 C1078.0,733.3 1074.2,735.2 1072.0,735.8 C1072.5,736.7 1072.8,738.8 1075.0,741.0 C1077.2,743.2 1077.9,745.6 1085.0,748.8 C1092.1,752.0 1104.0,756.6 1117.6,760.1 C1131.1,763.6 1152.8,767.4 1166.3,769.9 C1179.8,772.4 1188.6,773.9 1198.9,775.4 C1209.2,776.9 1223.2,778.2 1228.0,778.7 L1228.0,787.1 C1223.2,786.6 1209.2,785.4 1198.9,783.9 C1188.6,782.4 1179.8,780.3 1166.3,778.0 C1152.8,775.7 1131.1,772.6 1117.6,769.9 C1104.0,767.2 1092.6,763.8 1085.0,761.8 C1077.4,759.8 1076.5,759.2 1072.0,757.9 C1067.5,756.6 1061.8,755.6 1058.0,754.0 C1054.2,752.4 1051.0,750.2 1049.0,748.0 C1047.0,745.8 1046.5,741.8 1046.0,740.6 Z" fill="#4f4b3f" stroke="#000" stroke-width="1.8" stroke-linejoin="round" />
<path d="M1046.0,740.6 C1046.5,741.8 1047.0,745.8 1049.0,748.0 C1051.0,750.2 1054.2,752.4 1058.0,754.0 C1061.8,755.6 1067.5,756.6 1072.0,757.9 C1076.5,759.2 1077.4,759.8 1085.0,761.8 C1092.6,763.8 1104.0,767.2 1117.6,769.9 C1131.1,772.6 1152.8,775.7 1166.3,778.0 C1179.8,780.3 1188.6,782.4 1198.9,783.9 C1209.2,785.4 1223.2,786.6 1228.0,787.1 L1236.4,977.7 C1230.3,977.0 1217.6,977.5 1200.0,973.5 C1182.4,969.5 1150.2,960.3 1130.7,953.7 C1111.2,947.1 1093.9,939.7 1082.8,933.9 C1071.7,928.1 1067.9,923.1 1064.0,919.0 C1060.1,914.9 1060.1,910.7 1059.3,909.0 Z" fill="url(#gcurveu)" stroke="#000" stroke-width="1.8" stroke-linejoin="round" />
<path d="M1059.3,909.0 C1060.1,910.7 1060.1,914.9 1064.0,919.0 C1067.9,923.1 1071.7,928.1 1082.8,933.9 C1093.9,939.7 1111.2,947.1 1130.7,953.7 C1150.2,960.3 1182.4,969.5 1200.0,973.5 C1217.6,977.5 1230.3,977.0 1236.4,977.7 L1236.4,986.8 C1230.3,986.1 1217.6,986.6 1200.0,982.6 C1182.4,978.6 1150.1,969.5 1130.7,962.8 C1111.3,956.0 1094.6,948.6 1083.6,942.1 C1072.6,935.6 1068.6,928.4 1064.6,923.5 C1060.5,918.6 1060.2,914.8 1059.3,913.0 Z" fill="#85909a" stroke="#000" stroke-width="1.8" stroke-linejoin="round" />
<polyline points="1070.5,757.5 1083.2,942.0" fill="none" stroke="#000" stroke-width="1.4" stroke-linecap="round" stroke-linejoin="round" />
<polyline points="1197.5,783.6 1209.0,984.6" fill="none" stroke="#000" stroke-width="1.4" stroke-linecap="round" stroke-linejoin="round" />
<polygon points="1219.7,432.6 1290.0,433.0 1299.2,740.1 1302.5,790.0 1310.0,1033.1 1248.0,1040.0" fill="#b9bab5" stroke="#000" stroke-width="1.8" stroke-linejoin="round" />
<polygon points="1299.2,737.0 1347.2,753.5 1348.0,790.0 1355.4,1022.3 1310.0,1033.1 1302.5,790.0" fill="#a3a4a0" stroke="#000" stroke-width="1.8" stroke-linejoin="round" />
<polygon points="1209.0,429.5 1219.7,432.6 1248.0,1040.0 1239.7,1036.4 1228.9,790.0" fill="#828280" stroke="#000" stroke-width="1.3" stroke-linejoin="round" />
<polygon points="853.3,419.0 860.2,419.9 875.1,562.4 869.3,560.8" fill="#a3a4a0" stroke="#000" stroke-width="1.2" stroke-linejoin="round" />
<polygon points="860.2,419.9 865.2,420.7 881.2,571.5 875.6,562.9" fill="#2a2a2a" stroke="#000" stroke-width="1" stroke-linejoin="round" />
<polyline points="1036.0,426.0 1053.8,654.1" fill="none" stroke="#000" stroke-width="1.4" stroke-linecap="round" stroke-linejoin="round" />
<polygon points="1054.5,426.0 1062.0,426.0 1076.0,625.0 1068.3,620.0" fill="#a3a4a0" stroke="#000" stroke-width="1.2" stroke-linejoin="round" />
<polygon points="1050.5,612.8 1074.5,619.4 1074.5,623.0 1050.5,616.0" fill="#555" stroke="#000" stroke-width="1" stroke-linejoin="round" />
<polyline points="1265.2,432.9 1275.2,678.0" fill="none" stroke="#000" stroke-width="1.4" stroke-linecap="round" stroke-linejoin="round" />
<polyline points="1288.3,433.4 1295.5,684.0" fill="none" stroke="#000" stroke-width="1.4" stroke-linecap="round" stroke-linejoin="round" />
<polygon points="1289.9,433.4 1311.0,433.0 1319.0,695.0 1296.5,688.0" fill="#a3a4a0" stroke="#000" stroke-width="1.2" stroke-linejoin="round" />
<polygon points="1275.2,678.0 1317.4,689.6 1317.4,693.0 1275.2,681.5" fill="#555" stroke="#000" stroke-width="1" stroke-linejoin="round" />
<polygon points="1071.9,425.5 1082.1,425.8 1096.2,625.2 1086.1,621.9" fill="#a3a4a0" stroke="#000" stroke-width="1.3" stroke-linejoin="round" />
<polygon points="1082.1,425.8 1099.6,426.3 1106.9,534.7 1089.6,531.5" fill="#446874" stroke="#000" stroke-width="1.1" stroke-linejoin="round" />
<polygon points="1089.6,531.5 1106.9,534.7 1107.6,546.0 1090.3,542.5" fill="#6b757b" stroke="#000" stroke-width="1.1" stroke-linejoin="round" />
<polygon points="1090.3,542.5 1107.6,546.0 1113.3,630.9 1096.2,625.2" fill="#adaeaa" stroke="#000" stroke-width="1.1" stroke-linejoin="round" />
<polyline points="1085.4,472.7 1102.8,474.4" fill="none" stroke="#000" stroke-width="3.2" stroke-linecap="round" stroke-linejoin="round" />
<polyline points="1089.5,530.5 1106.8,533.7" fill="none" stroke="#000" stroke-width="3.2" stroke-linecap="round" stroke-linejoin="round" />
<polyline points="1092.6,426.1 1099.9,533.4" fill="none" stroke="#000" stroke-width="2.2" stroke-linecap="round" stroke-linejoin="round" />
<polyline points="1086.1,621.9 1113.3,630.9" fill="none" stroke="#333" stroke-width="3.2" stroke-linecap="round" stroke-linejoin="round" />
<polygon points="1112.4,426.8 1122.7,427.1 1135.6,636.7 1125.8,633.4" fill="#a3a4a0" stroke="#000" stroke-width="1.3" stroke-linejoin="round" />
<polygon points="1122.7,427.1 1143.5,427.6 1149.9,541.9 1129.5,538.2" fill="#3f7080" stroke="#000" stroke-width="1.1" stroke-linejoin="round" />
<polygon points="1129.5,538.2 1149.9,541.9 1150.5,553.8 1130.2,549.7" fill="#6b757b" stroke="#000" stroke-width="1.1" stroke-linejoin="round" />
<polygon points="1130.2,549.7 1150.5,553.8 1152.1,582.9 1132.0,578.0" fill="#8a939a" stroke="#000" stroke-width="1.1" stroke-linejoin="round" />
<polygon points="1132.0,578.0 1152.1,582.9 1155.5,643.3 1135.6,636.7" fill="#9aa78f" stroke="#000" stroke-width="1.1" stroke-linejoin="round" />
<polyline points="1125.7,476.3 1146.3,478.3" fill="none" stroke="#000" stroke-width="3.4" stroke-linecap="round" stroke-linejoin="round" />
<polyline points="1129.5,537.1 1149.8,540.8" fill="none" stroke="#000" stroke-width="3.4" stroke-linecap="round" stroke-linejoin="round" />
<polyline points="1125.8,633.4 1155.5,643.3" fill="none" stroke="#333" stroke-width="3.2" stroke-linecap="round" stroke-linejoin="round" />
<polygon points="1158.2,428.3 1168.4,428.5 1180.4,648.8 1170.4,645.8" fill="#a3a4a0" stroke="#000" stroke-width="1.3" stroke-linejoin="round" />
<polygon points="1168.4,428.5 1192.3,428.9 1198.4,550.3 1174.8,546.4" fill="#446874" stroke="#000" stroke-width="1.1" stroke-linejoin="round" />
<polygon points="1174.8,546.4 1198.4,550.3 1199.0,562.8 1175.5,558.5" fill="#6b757b" stroke="#000" stroke-width="1.1" stroke-linejoin="round" />
<polygon points="1175.5,558.5 1199.0,562.8 1200.6,594.5 1177.2,589.3" fill="#8a939a" stroke="#000" stroke-width="1.1" stroke-linejoin="round" />
<polygon points="1177.2,589.3 1200.6,594.5 1202.2,626.3 1178.8,620.2" fill="#6e8e98" stroke="#000" stroke-width="1.1" stroke-linejoin="round" />
<polygon points="1178.8,620.2 1202.2,626.3 1203.7,655.8 1180.4,648.8" fill="#2f4b53" stroke="#000" stroke-width="1.1" stroke-linejoin="round" />
<polyline points="1171.3,481.4 1195.0,483.4" fill="none" stroke="#000" stroke-width="3.4" stroke-linecap="round" stroke-linejoin="round" />
<polyline points="1174.8,545.2 1198.3,549.2" fill="none" stroke="#000" stroke-width="3.4" stroke-linecap="round" stroke-linejoin="round" />
<polyline points="1179.2,428.7 1185.4,548.1" fill="none" stroke="#000" stroke-width="2.4" stroke-linecap="round" stroke-linejoin="round" />
<polyline points="1170.4,645.8 1203.7,655.8" fill="none" stroke="#333" stroke-width="3.2" stroke-linecap="round" stroke-linejoin="round" />
<polygon points="1330.5,433.4 1342.1,433.7 1349.9,699.3 1338.9,696.3" fill="#a3a4a0" stroke="#000" stroke-width="1.3" stroke-linejoin="round" />
<polygon points="1342.1,433.7 1380.9,434.6 1384.1,578.9 1346.2,573.1" fill="#446874" stroke="#000" stroke-width="1.1" stroke-linejoin="round" />
<polygon points="1346.2,573.1 1384.1,578.9 1384.4,594.0 1346.6,587.8" fill="#6b757b" stroke="#000" stroke-width="1.1" stroke-linejoin="round" />
<polygon points="1346.6,587.8 1384.4,594.0 1385.1,627.0 1347.6,619.6" fill="#8a939a" stroke="#000" stroke-width="1.1" stroke-linejoin="round" />
<polygon points="1347.6,619.6 1385.1,627.0 1385.7,654.5 1348.4,646.2" fill="#6e8e98" stroke="#000" stroke-width="1.1" stroke-linejoin="round" />
<polygon points="1348.4,646.2 1385.7,654.5 1386.9,709.5 1349.9,699.3" fill="#2f4b53" stroke="#000" stroke-width="1.1" stroke-linejoin="round" />
<polyline points="1343.9,496.1 1382.3,499.2" fill="none" stroke="#000" stroke-width="3.6" stroke-linecap="round" stroke-linejoin="round" />
<polyline points="1346.2,571.8 1384.0,577.5" fill="none" stroke="#000" stroke-width="3.6" stroke-linecap="round" stroke-linejoin="round" />
<polyline points="1362.3,434.2 1365.9,576.2" fill="none" stroke="#000" stroke-width="4.5" stroke-linecap="round" stroke-linejoin="round" />
<polyline points="1365.8,434.2 1369.3,576.7" fill="none" stroke="#a9aaa6" stroke-width="3.2" stroke-linecap="round" stroke-linejoin="round" />
<polyline points="1367.8,591.3 1370.6,705.0" fill="none" stroke="#111" stroke-width="4" stroke-linecap="round" stroke-linejoin="round" />
<polyline points="1338.9,696.3 1386.9,709.5" fill="none" stroke="#333" stroke-width="3.2" stroke-linecap="round" stroke-linejoin="round" />
<polygon points="1405.2,435.6 1417.5,435.9 1423.0,720.2 1411.7,716.9" fill="#a3a4a0" stroke="#000" stroke-width="1.3" stroke-linejoin="round" />
<polygon points="1417.5,435.9 1463.6,437.2 1464.5,590.8 1420.3,583.8" fill="#3f7080" stroke="#000" stroke-width="1.1" stroke-linejoin="round" />
<polygon points="1420.3,583.8 1464.5,590.8 1464.6,607.1 1420.6,599.4" fill="#6b757b" stroke="#000" stroke-width="1.1" stroke-linejoin="round" />
<polygon points="1420.6,599.4 1464.6,607.1 1464.9,644.0 1421.3,634.9" fill="#8a939a" stroke="#000" stroke-width="1.1" stroke-linejoin="round" />
<polygon points="1421.3,634.9 1464.9,644.0 1465.4,732.6 1423.0,720.2" fill="#2f4b53" stroke="#000" stroke-width="1.1" stroke-linejoin="round" />
<polyline points="1418.8,502.7 1464.0,506.6" fill="none" stroke="#000" stroke-width="5" stroke-linecap="round" stroke-linejoin="round" />
<polyline points="1420.3,582.3 1464.5,589.3" fill="none" stroke="#000" stroke-width="4" stroke-linecap="round" stroke-linejoin="round" />
<polyline points="1441.8,603.1 1443.3,726.2" fill="none" stroke="#111" stroke-width="4" stroke-linecap="round" stroke-linejoin="round" />
<polyline points="1445.3,603.7 1446.1,674.9" fill="none" stroke="#6b757b" stroke-width="4" stroke-linecap="round" stroke-linejoin="round" />
<polyline points="1411.7,716.9 1465.4,732.6" fill="none" stroke="#333" stroke-width="3.2" stroke-linecap="round" stroke-linejoin="round" />
<polygon points="1422.5,640.0 1440.0,641.0 1441.0,672.0 1423.0,668.0" fill="#3e6a8a" stroke="#123" stroke-width="0.8" stroke-linejoin="round" />
<polygon points="1448.0,662.0 1463.0,664.0 1463.5,680.0 1448.5,677.0" fill="#4f8fc0" stroke="#123" stroke-width="0.8" stroke-linejoin="round" />
<path d="M793.0,367.3 L1705.3,297.1 L1687.1,871.5 L1277.7,730.6 L1275.2,678.0 L1317.4,689.6 L1309.5,432.9 L1209.0,429.3 L1224.8,712.4 L1053.8,653.5 L1050.5,612.8 L1074.5,619.4 L1060.6,426.0 L993.3,424.3 L1011.2,638.9 L914.9,605.7 L897.1,420.7 L853.3,419.0 L869.3,560.8 L876.5,562.6 L880.3,593.8 L817.0,572.0 Z M1071.9,425.5 L1099.6,426.3 L1113.3,630.9 L1086.1,621.9 Z M1112.4,426.8 L1143.5,427.6 L1155.5,643.3 L1125.8,633.4 Z M1158.2,428.3 L1192.3,428.9 L1203.7,655.8 L1170.4,645.8 Z M1330.5,433.4 L1380.9,434.6 L1386.9,709.5 L1338.9,696.3 Z M1405.2,435.6 L1463.6,437.2 L1465.4,732.6 L1411.7,716.9 Z " fill="#7b7b79" stroke="#000" stroke-width="1.8" stroke-linejoin="round" fill-rule="evenodd"/>
<polygon points="1705.3,297.1 1717.7,298.0 1711.9,500.0 1703.7,745.0 1698.7,869.0 1687.1,871.5 1691.7,745.0 1698.7,500.0" fill="#a3a4a0" stroke="#000" stroke-width="1.4" stroke-linejoin="round" />
<polygon points="792.9,357.9 1705.8,269.5 1705.3,297.1 793.0,367.3" fill="#7d7d7b" stroke="#000" stroke-width="1.8" stroke-linejoin="round" />
<polyline points="793.0,361.5 1705.8,279.4" fill="none" stroke="#000" stroke-width="1.8" stroke-linecap="round" stroke-linejoin="round" />
<polyline points="1705.8,269.5 1705.3,297.1" fill="none" stroke="#000" stroke-width="2" stroke-linecap="round" stroke-linejoin="round" /></svg>
<svg width="0" height="0" style="position:absolute"><defs>
<linearGradient id="gdoc" x1="0" y1="0" x2="1" y2="1"><stop offset="0" stop-color="#ffffff"/><stop offset="1" stop-color="#d3d7cf"/></linearGradient>
<linearGradient id="gblue" x1="0" y1="0" x2="0" y2="1"><stop offset="0" stop-color="#79a7dc"/><stop offset="1" stop-color="#3465a4"/></linearGradient>
<linearGradient id="gblue2" x1="0" y1="0" x2="1" y2="1"><stop offset="0" stop-color="#7fb0e6"/><stop offset="1" stop-color="#2a5a9c"/></linearGradient>
<linearGradient id="gyel" x1="0" y1="0" x2="0" y2="1"><stop offset="0" stop-color="#fce94f"/><stop offset="1" stop-color="#c4a000"/></linearGradient>
<radialGradient id="gyelr" cx="0.4" cy="0.35" r="0.7"><stop offset="0" stop-color="#fce94f"/><stop offset="1" stop-color="#c4a000"/></radialGradient>
<radialGradient id="gredr" cx="0.4" cy="0.35" r="0.7"><stop offset="0" stop-color="#ef2929"/><stop offset="1" stop-color="#a40000"/></radialGradient>
<linearGradient id="gcy" x1="0" y1="0" x2="0" y2="1"><stop offset="0" stop-color="#34e0e2"/><stop offset="1" stop-color="#16a0ab"/></linearGradient>
<linearGradient id="gmag" x1="0" y1="0" x2="1" y2="1"><stop offset="0" stop-color="#34e0e2"/><stop offset="1" stop-color="#0e8f9a"/></linearGradient>
<linearGradient id="gdocv" x1="0" y1="0" x2="0.3" y2="1"><stop offset="0" stop-color="#ffffff"/><stop offset="1" stop-color="#d9dcd6"/></linearGradient>
<linearGradient id="gund" x1="0" y1="0" x2="1" y2="1"><stop offset="0" stop-color="#f4f4f2"/><stop offset="1" stop-color="#a6a8a3"/></linearGradient>
<linearGradient id="ggray" x1="0" y1="0" x2="0" y2="1"><stop offset="0" stop-color="#eeeeec"/><stop offset="1" stop-color="#babdb6"/></linearGradient>
<linearGradient id="ggrn" x1="0" y1="0" x2="0" y2="1"><stop offset="0" stop-color="#8ae234"/><stop offset="1" stop-color="#4e9a06"/></linearGradient>
<linearGradient id="gbtn" x1="0" y1="0" x2="0" y2="1"><stop offset="0" stop-color="#fdfdfd"/><stop offset="1" stop-color="#ececec"/></linearGradient>
</defs></svg>
<svg width="0" height="0" style="position:absolute"><defs>
<linearGradient id="ggf" x1="0" y1="0" x2="0" y2="1"><stop offset="0" stop-color="#bcbcbc"/><stop offset="1" stop-color="#a4a4a4"/></linearGradient>
<linearGradient id="gsheet" x1="0" y1="0" x2="0" y2="1"><stop offset="0" stop-color="#ffffff"/><stop offset="1" stop-color="#d3d7cf"/></linearGradient>
<linearGradient id="gdiag" x1="0" y1="0" x2="1" y2="1"><stop offset="0" stop-color="#444"/><stop offset="0.5" stop-color="#b0b0b0"/></linearGradient>
</defs></svg>
<div class="t " style="left:19.2px;top:10.2px;font-size:23.00px;letter-spacing:-0.241px;"><span style="text-decoration:underline;text-decoration-thickness:2px;text-underline-offset:2px">F</span>ile</div>
<div class="t " style="left:84.2px;top:10.2px;font-size:23.00px;letter-spacing:0.167px;"><span style="text-decoration:underline;text-decoration-thickness:2px;text-underline-offset:2px">E</span>dit</div>
<div class="t " style="left:153.4px;top:10.2px;font-size:23.00px;letter-spacing:0.490px;"><span style="text-decoration:underline;text-decoration-thickness:2px;text-underline-offset:2px">V</span>iew</div>
<div class="t " style="left:231.4px;top:10.2px;font-size:23.00px;letter-spacing:0.841px;"><span style="text-decoration:underline;text-decoration-thickness:2px;text-underline-offset:2px">T</span>ools</div>
<div class="t " style="left:316.9px;top:10.2px;font-size:23.00px;letter-spacing:0.759px;"><span style="text-decoration:underline;text-decoration-thickness:2px;text-underline-offset:2px">M</span>acro</div>
<div class="t " style="left:413.5px;top:10.2px;font-size:23.00px;letter-spacing:0.543px;"><span style="text-decoration:underline;text-decoration-thickness:2px;text-underline-offset:2px">2</span>D Drafting</div>
<div class="t " style="left:565.3px;top:10.2px;font-size:23.00px;letter-spacing:0.819px;"><span style="text-decoration:underline;text-decoration-thickness:2px;text-underline-offset:2px">3</span>D/BIM</div>
<div class="t " style="left:675.2px;top:10.2px;font-size:23.00px;letter-spacing:0.972px;"><span style="text-decoration:underline;text-decoration-thickness:2px;text-underline-offset:2px">A</span>nnotation</div>
<div class="t " style="left:823.5px;top:10.2px;font-size:23.00px;letter-spacing:0.450px;"><span style="text-decoration:underline;text-decoration-thickness:2px;text-underline-offset:2px">S</span>napping</div>
<div class="t " style="left:953.5px;top:10.2px;font-size:23.00px;letter-spacing:1.293px;"><span style="text-decoration:underline;text-decoration-thickness:2px;text-underline-offset:2px">M</span>odify</div>
<div class="t " style="left:1057.6px;top:10.2px;font-size:23.00px;letter-spacing:0.613px;"><span style="text-decoration:underline;text-decoration-thickness:2px;text-underline-offset:2px">M</span>anage</div>
<div class="t " style="left:1173.6px;top:10.2px;font-size:23.00px;letter-spacing:-0.341px;"><span style="text-decoration:underline;text-decoration-thickness:2px;text-underline-offset:2px">F</span>asteners</div>
<div class="t " style="left:1301.4px;top:10.2px;font-size:23.00px;letter-spacing:0.496px;"><span style="text-decoration:underline;text-decoration-thickness:2px;text-underline-offset:2px">U</span>tils</div>
<div class="t " style="left:1377.8px;top:10.2px;font-size:23.00px;letter-spacing:0.599px;"><span style="text-decoration:underline;text-decoration-thickness:2px;text-underline-offset:2px">W</span>indows</div>
<div class="t " style="left:1503.7px;top:10.2px;font-size:23.00px;letter-spacing:0.449px;"><span style="text-decoration:underline;text-decoration-thickness:2px;text-underline-offset:2px">H</span>elp</div>
<div class="abs" style="left:0.0px;top:120.0px;width:2736.0px;height:2.0px;background:#b9b9b9"></div>
<div class="abs" style="left:0.0px;top:198.0px;width:2736.0px;height:2.0px;background:#b9b9b9"></div>
<svg class="abs" style="left:11.3px;top:64.5px" width="9" height="32" viewBox="0 0 9 32"><rect x="0.0" y="0.0" width="2" height="2" fill="#b0b0b0"/><rect x="6.6" y="0.0" width="2" height="2" fill="#b0b0b0"/><rect x="0.0" y="5.8" width="2" height="2" fill="#b0b0b0"/><rect x="6.6" y="5.8" width="2" height="2" fill="#b0b0b0"/><rect x="0.0" y="11.6" width="2" height="2" fill="#b0b0b0"/><rect x="6.6" y="11.6" width="2" height="2" fill="#b0b0b0"/><rect x="0.0" y="17.4" width="2" height="2" fill="#b0b0b0"/><rect x="6.6" y="17.4" width="2" height="2" fill="#b0b0b0"/><rect x="0.0" y="23.2" width="2" height="2" fill="#b0b0b0"/><rect x="6.6" y="23.2" width="2" height="2" fill="#b0b0b0"/><rect x="0.0" y="29.0" width="2" height="2" fill="#b0b0b0"/><rect x="6.6" y="29.0" width="2" height="2" fill="#b0b0b0"/></svg>
<svg class="abs" style="left:32.0px;top:56.0px" width="48" height="48" viewBox="0 0 48 48"><path d="M7,2 H29 L37,10 V46 H7 Z" fill="url(#gdoc)" stroke="#2e3436" stroke-width="1.6" stroke-linejoin="round"/><path d="M29,2 V10 H37 Z" fill="#babdb6" stroke="#2e3436" stroke-width="1.3" stroke-linejoin="round"/><circle cx="33.5" cy="35.5" r="11.5" fill="#fff" stroke="#888a85" stroke-width="1.4"/><path d="M26,35.5 h15 M33.5,28 v15" stroke="#5aa80a" stroke-width="3.6"/></svg>
<svg class="abs" style="left:94.0px;top:56.0px" width="48" height="48" viewBox="0 0 48 48"><path d="M3,14 H45 V44 H3 Z" fill="#3465a4" stroke="#0f2d59" stroke-width="1.6"/><path d="M9,4 H28 L34,10 V30 H9 Z" fill="url(#gdoc)" stroke="#555753" stroke-width="1.3"/><path d="M12,30 C14,18 22,14 30,15 V9 L43,19 L30,29 V23 C22,22 17,25 12,30 Z" fill="url(#ggrn)" stroke="#2d5a00" stroke-width="1.4" stroke-linejoin="round"/><path d="M3,27 H13 L16,31 H45 V44 H3 Z" fill="url(#gblue)" stroke="#0f2d59" stroke-width="1.4"/></svg>
<svg class="abs" style="left:157.7px;top:56.0px" width="48" height="48" viewBox="0 0 48 48"><path d="M4,6 Q4,4 6,4 H40 L44,8 V42 Q44,44 42,44 H6 Q4,44 4,42 Z" fill="#b0b3ad" stroke="#555753" stroke-width="1.8"/><rect x="13" y="5" width="22" height="13" fill="#eeeeec" stroke="#777" stroke-width="1"/><rect x="27" y="7" width="5" height="9" fill="#2e3436"/><rect x="9" y="24" width="30" height="19" fill="#eeeeec" stroke="#777" stroke-width="1"/><rect x="12" y="34" width="24" height="6" fill="#5c8ad0" stroke="#3465a4" stroke-width="1"/><path d="M12,28 H36 M12,31 H36" stroke="#aaa" stroke-width="1"/></svg>
<svg class="abs" style="left:232.7px;top:64.5px" width="9" height="32" viewBox="0 0 9 32"><rect x="0.0" y="0.0" width="2" height="2" fill="#b0b0b0"/><rect x="6.6" y="0.0" width="2" height="2" fill="#b0b0b0"/><rect x="0.0" y="5.8" width="2" height="2" fill="#b0b0b0"/><rect x="6.6" y="5.8" width="2" height="2" fill="#b0b0b0"/><rect x="0.0" y="11.6" width="2" height="2" fill="#b0b0b0"/><rect x="6.6" y="11.6" width="2" height="2" fill="#b0b0b0"/><rect x="0.0" y="17.4" width="2" height="2" fill="#b0b0b0"/><rect x="6.6" y="17.4" width="2" height="2" fill="#b0b0b0"/><rect x="0.0" y="23.2" width="2" height="2" fill="#b0b0b0"/><rect x="6.6" y="23.2" width="2" height="2" fill="#b0b0b0"/><rect x="0.0" y="29.0" width="2" height="2" fill="#b0b0b0"/><rect x="6.6" y="29.0" width="2" height="2" fill="#b0b0b0"/></svg>
<svg class="abs" style="left:252.0px;top:55.0px" width="50" height="50" viewBox="0 0 48 48"><path d="M2,18 L21,2 V12 C38,11 46,24 40,46 C38,34 33,27 21,27 V35 Z" fill="url(#gund)" stroke="#9a9c98" stroke-width="1.8" stroke-linejoin="round"/></svg>
<svg class="abs" style="left:284.0px;top:75.0px" width="14" height="8" viewBox="0 0 14 8"><path d="M0,0 H14 L7,7 Z" fill="#b0b0b0"/></svg>
<svg class="abs" style="left:315.5px;top:55.0px" width="50" height="50" viewBox="0 0 48 48"><g transform="translate(48,0) scale(-1,1)"><path d="M2,18 L21,2 V12 C38,11 46,24 40,46 C38,34 33,27 21,27 V35 Z" fill="url(#gund)" stroke="#9a9c98" stroke-width="1.8" stroke-linejoin="round"/></g></svg>
<svg class="abs" style="left:348.0px;top:75.0px" width="14" height="8" viewBox="0 0 14 8"><path d="M0,0 H14 L7,7 Z" fill="#b0b0b0"/></svg>
<div class="abs" style="left:380.0px;top:62.0px;width:3.5px;height:38.0px;background:#a8a8a8"></div>
<svg class="abs" style="left:396.8px;top:55.0px" width="50" height="50" viewBox="0 0 48 48"><path d="M5,22 C5,6 28,-2 38,10 L43,3 L44,22 L26,20 L32,14 C25,7 12,11 12,22 Z" fill="url(#gund)" stroke="#9a9c98" stroke-width="1.8" stroke-linejoin="round"/><path d="M43,26 C43,42 20,50 10,38 L5,45 L4,26 L22,28 L16,34 C23,41 36,37 36,26 Z" fill="url(#gund)" stroke="#9a9c98" stroke-width="1.8" stroke-linejoin="round"/></svg>
<svg class="abs" style="left:472.7px;top:64.5px" width="9" height="32" viewBox="0 0 9 32"><rect x="0.0" y="0.0" width="2" height="2" fill="#b0b0b0"/><rect x="6.6" y="0.0" width="2" height="2" fill="#b0b0b0"/><rect x="0.0" y="5.8" width="2" height="2" fill="#b0b0b0"/><rect x="6.6" y="5.8" width="2" height="2" fill="#b0b0b0"/><rect x="0.0" y="11.6" width="2" height="2" fill="#b0b0b0"/><rect x="6.6" y="11.6" width="2" height="2" fill="#b0b0b0"/><rect x="0.0" y="17.4" width="2" height="2" fill="#b0b0b0"/><rect x="6.6" y="17.4" width="2" height="2" fill="#b0b0b0"/><rect x="0.0" y="23.2" width="2" height="2" fill="#b0b0b0"/><rect x="6.6" y="23.2" width="2" height="2" fill="#b0b0b0"/><rect x="0.0" y="29.0" width="2" height="2" fill="#b0b0b0"/><rect x="6.6" y="29.0" width="2" height="2" fill="#b0b0b0"/></svg>
<div class="abs" style="left:486.7px;top:56.9px;width:224.6px;height:47.8px;box-sizing:border-box;border:2px solid #b4b4b4;border-radius:4px;background:linear-gradient(#fdfdfd,#ececec)"></div>
<svg class="abs" style="left:496.0px;top:65.0px" width="30" height="30" viewBox="0 0 48 48"><path d="M2,12 L20,4 L46,12 V36 L28,44 L2,36 Z" fill="#eeeeec" stroke="#555753" stroke-width="1.6" stroke-linejoin="round"/><path d="M2,12 L28,20 L46,12 M28,20 V44 M2,20 L28,28 L46,20 M2,28 L28,36 L46,28 M11,8 L37,16 M15,16 V24 M8,22 V30 M20,26 V34 M14,32 V40 M37,16 V24 M37,32 V40 M40,22.5 V30.5" fill="none" stroke="#555753" stroke-width="1.3"/></svg>
<div class="t " style="left:539.0px;top:70.5px;font-size:22.50px;letter-spacing:-0.668px;">BIM</div>
<svg class="abs" style="left:678.0px;top:78.6px" width="12" height="6" viewBox="0 0 14 8"><path d="M0,0 H14 L7,7 Z" fill="#8a8a8a"/></svg>
<svg class="abs" style="left:730.7px;top:64.5px" width="9" height="32" viewBox="0 0 9 32"><rect x="0.0" y="0.0" width="2" height="2" fill="#b0b0b0"/><rect x="6.6" y="0.0" width="2" height="2" fill="#b0b0b0"/><rect x="0.0" y="5.8" width="2" height="2" fill="#b0b0b0"/><rect x="6.6" y="5.8" width="2" height="2" fill="#b0b0b0"/><rect x="0.0" y="11.6" width="2" height="2" fill="#b0b0b0"/><rect x="6.6" y="11.6" width="2" height="2" fill="#b0b0b0"/><rect x="0.0" y="17.4" width="2" height="2" fill="#b0b0b0"/><rect x="6.6" y="17.4" width="2" height="2" fill="#b0b0b0"/><rect x="0.0" y="23.2" width="2" height="2" fill="#b0b0b0"/><rect x="6.6" y="23.2" width="2" height="2" fill="#b0b0b0"/><rect x="0.0" y="29.0" width="2" height="2" fill="#b0b0b0"/><rect x="6.6" y="29.0" width="2" height="2" fill="#b0b0b0"/></svg>
<svg class="abs" style="left:750.0px;top:56.0px" width="48" height="48" viewBox="0 0 48 48"><path d="M28,31 L43,46" stroke="#0b5c66" stroke-width="10" stroke-linecap="butt"/><path d="M28,31 L42.3,45.3" stroke="#2fd6dc" stroke-width="6.6" stroke-linecap="butt"/><circle cx="18" cy="19" r="16.5" fill="url(#gmag)" stroke="#0b5c66" stroke-width="1.8"/><circle cx="18" cy="19" r="14.2" fill="none" stroke="#5fe3e8" stroke-width="1.2" opacity="0.7"/><path d="M18,5 L26,14 H10 Z M18,33 L26,24 H10 Z M4,19 L13,11 V27 Z M32,19 L23,11 V27 Z" fill="#eef6f5" stroke="#0b5c66" stroke-width="1.2" stroke-linejoin="round"/><rect x="13" y="14" width="10" height="10" fill="url(#gcy)" stroke="#0b5c66" stroke-width="1.2"/></svg>
<svg class="abs" style="left:813.7px;top:56.0px" width="48" height="48" viewBox="0 0 48 48"><path d="M28,31 L43,46" stroke="#0b5c66" stroke-width="10" stroke-linecap="butt"/><path d="M28,31 L42.3,45.3" stroke="#2fd6dc" stroke-width="6.6" stroke-linecap="butt"/><circle cx="18" cy="19" r="16.5" fill="url(#gmag)" stroke="#0b5c66" stroke-width="1.8"/><circle cx="18" cy="19" r="14.2" fill="none" stroke="#5fe3e8" stroke-width="1.2" opacity="0.7"/><path d="M7,27 L19,15 L14,10 L30,7 L27,23 L22,18 L10,30 Z" fill="#eef6f5" stroke="#0b5c66" stroke-width="1.4" stroke-linejoin="round"/></svg>
<svg class="abs" style="left:877.9px;top:56.0px" width="48" height="48" viewBox="0 0 48 48"><path d="M24,3 L44,12 V35 L24,45 L4,35 V12 Z" fill="#f0f0f0" stroke="#0b5c66" stroke-width="5.5" stroke-linejoin="round"/><path d="M4,12 L24,21 L44,12 M24,21 V45" fill="none" stroke="#0b5c66" stroke-width="5.5" stroke-linejoin="round"/><path d="M24,3 L44,12 V35 L24,45 L4,35 V12 Z M4,12 L24,21 L44,12 M24,21 V45" fill="none" stroke="#2fd6dc" stroke-width="2.8" stroke-linejoin="round"/><path d="M24,8 V14 M12,31 L17,33 M36,31 L31,33" stroke="#0b5c66" stroke-width="3" stroke-linecap="round"/></svg>
<svg class="abs" style="left:934.0px;top:76.4px" width="16" height="9" viewBox="0 0 14 8"><path d="M0,0 H14 L7,7 Z" fill="#8e8e8e"/></svg>
<svg class="abs" style="left:968.8px;top:56.0px" width="48" height="48" viewBox="0 0 48 48"><path d="M19,5 L46,8 L46,36 L20,32 Z" fill="#2fd6dc" stroke="#0b5c66" stroke-width="1.8" stroke-linejoin="round"/><path d="M32,18 L10,40" stroke="#0b5c66" stroke-width="5" stroke-dasharray="7 4"/><path d="M32,18 L10,40" stroke="#2fd6dc" stroke-width="2.4" stroke-dasharray="7 4"/><path d="M3,46 L8,32 L18,42 Z" fill="#2fd6dc" stroke="#0b5c66" stroke-width="1.6" stroke-linejoin="round"/></svg>
<div class="abs" style="left:1032.2px;top:62.0px;width:3.5px;height:38.0px;background:#a8a8a8"></div>
<svg class="abs" style="left:1049.9px;top:56.0px" width="48" height="48" viewBox="0 0 48 48"><path d="M24,2 L45,13 V35 L24,46 L3,35 V13 Z" fill="url(#gcy)" stroke="#0b5c66" stroke-width="2" stroke-linejoin="round"/><path d="M24,24 L45,13 V35 L24,46 Z" fill="#0e8f9a" opacity="0.45"/><circle cx="24" cy="24" r="13.5" fill="none" stroke="#3a0000" stroke-width="8"/><path d="M14.5,14.5 L33.5,33.5" stroke="#3a0000" stroke-width="8"/><circle cx="24" cy="24" r="13.5" fill="none" stroke="#e01b1b" stroke-width="5.4"/><path d="M14.5,14.5 L33.5,33.5" stroke="#e01b1b" stroke-width="5.4"/></svg>
<svg class="abs" style="left:1106.5px;top:76.4px" width="16" height="9" viewBox="0 0 14 8"><path d="M0,0 H14 L7,7 Z" fill="#8e8e8e"/></svg>
<svg class="abs" style="left:1140.1px;top:56.0px" width="48" height="48" viewBox="0 0 48 48"><path d="M6,14 L18,5 H42 V30 L30,42 H6 Z" fill="#9fe6ea" fill-opacity="0.45" stroke="#19a7b3" stroke-width="2" stroke-linejoin="round"/><path d="M6,14 H30 V42 M30,14 L42,5" fill="none" stroke="#19a7b3" stroke-width="2.4"/><path d="M6,14 L18,5 H42 V30 L30,42 H6 Z" fill="none" stroke="#0b5c66" stroke-width="1.2"/><path d="M17,22 L34,32 L27,34 L31,43 L27,45 L23,36 L18,41 Z" fill="#fff" stroke="#2e3436" stroke-width="1.6" stroke-linejoin="round"/></svg>
<svg class="abs" style="left:1195.9px;top:76.4px" width="16" height="9" viewBox="0 0 14 8"><path d="M0,0 H14 L7,7 Z" fill="#8e8e8e"/></svg>
<svg class="abs" style="left:1229.6px;top:56.0px" width="48" height="48" viewBox="0 0 48 48"><path d="M28,31 L43,46" stroke="#0b5c66" stroke-width="10" stroke-linecap="butt"/><path d="M28,31 L42.3,45.3" stroke="#2fd6dc" stroke-width="6.6" stroke-linecap="butt"/><circle cx="18" cy="19" r="16.5" fill="url(#gmag)" stroke="#0b5c66" stroke-width="1.8"/><circle cx="18" cy="19" r="14.2" fill="none" stroke="#5fe3e8" stroke-width="1.2" opacity="0.7"/><path d="M7,18 C8,8 22,5 27,11 L30,7 L31,18 L20,17 L24,14 C20,10 12,12 11,19 Z M29,20 C28,30 14,33 9,27 L6,31 L5,20 L16,21 L12,24 C16,28 24,26 25,19 Z" fill="#d6f4f5" stroke="#0b5c66" stroke-width="1.1" stroke-linejoin="round"/></svg>
<svg class="abs" style="left:1287.0px;top:76.4px" width="16" height="9" viewBox="0 0 14 8"><path d="M0,0 H14 L7,7 Z" fill="#8e8e8e"/></svg>
<svg class="abs" style="left:1319.7px;top:56.0px" width="48" height="48" viewBox="0 0 48 48"><path d="M5,10 H20 V3 H28 V10 H43 L40,14 H28 V44 H20 V14 H10 Z" fill="url(#ggray)" stroke="#555753" stroke-width="1.6" stroke-linejoin="round"/><path d="M7,22 H20 V26 H12 Z M28,20 H40 L37,24 H28 Z" fill="#d3d7cf" stroke="#555753" stroke-width="1.4" stroke-linejoin="round"/><path d="M22,16 h4 M22,20 h4 M22,24 h4 M22,28 h4 M22,32 h4 M22,36 h4 M22,40 h4" stroke="#555753" stroke-width="1"/></svg>
<svg class="abs" style="left:1395.7px;top:64.5px" width="9" height="32" viewBox="0 0 9 32"><rect x="0.0" y="0.0" width="2" height="2" fill="#b0b0b0"/><rect x="6.6" y="0.0" width="2" height="2" fill="#b0b0b0"/><rect x="0.0" y="5.8" width="2" height="2" fill="#b0b0b0"/><rect x="6.6" y="5.8" width="2" height="2" fill="#b0b0b0"/><rect x="0.0" y="11.6" width="2" height="2" fill="#b0b0b0"/><rect x="6.6" y="11.6" width="2" height="2" fill="#b0b0b0"/><rect x="0.0" y="17.4" width="2" height="2" fill="#b0b0b0"/><rect x="6.6" y="17.4" width="2" height="2" fill="#b0b0b0"/><rect x="0.0" y="23.2" width="2" height="2" fill="#b0b0b0"/><rect x="6.6" y="23.2" width="2" height="2" fill="#b0b0b0"/><rect x="0.0" y="29.0" width="2" height="2" fill="#b0b0b0"/><rect x="6.6" y="29.0" width="2" height="2" fill="#b0b0b0"/></svg>
<svg class="abs" style="left:1414.0px;top:56.0px" width="48" height="48" viewBox="0 0 48 48"><path d="M4,24 L16,18 V8 L28,3 L38,8 V19 L46,23 V36 L26,46 L4,36 Z" fill="url(#gyel)" stroke="#3b3200" stroke-width="1.8" stroke-linejoin="round"/><path d="M4,24 L16,29 L26,24 L38,19 M16,29 V41 M26,24 V13 L16,8 M26,13 L38,8 M26,24 L26,46 M26,35 L46,23 M26,24 L16,18" fill="none" stroke="#3b3200" stroke-width="1.4" stroke-linejoin="round"/></svg>
<svg class="abs" style="left:1477.9px;top:56.0px" width="48" height="48" viewBox="0 0 48 48"><path d="M3,6 H17 L21,10 H45 V44 H3 Z" fill="#204a87" stroke="#0f2d59" stroke-width="1.6" stroke-linejoin="round"/><path d="M4,14 H44 V43 H4 Z" fill="url(#gblue)" stroke="#0f2d59" stroke-width="1"/></svg>
<svg class="abs" style="left:1542.1px;top:56.0px" width="48" height="48" viewBox="0 0 48 48"><path d="M16,6 H8 Q4,6 4,10 V40 Q4,44 8,44 H36 Q40,44 40,40 V34" fill="none" stroke="#0f2d59" stroke-width="7" stroke-linecap="round"/><path d="M16,6 H8 Q4,6 4,10 V40 Q4,44 8,44 H36 Q40,44 40,40 V34" fill="none" stroke="#3465a4" stroke-width="4" stroke-linecap="round"/><path d="M14,34 C14,20 22,13 31,13 V5 L46,17 L31,29 V21 C24,21 18,24 14,34 Z" fill="url(#ggrn)" stroke="#2d5a00" stroke-width="1.6" stroke-linejoin="round"/></svg>
<svg class="abs" style="left:1598.4px;top:76.4px" width="16" height="9" viewBox="0 0 14 8"><path d="M0,0 H14 L7,7 Z" fill="#8e8e8e"/></svg>
<svg class="abs" style="left:1631.9px;top:56.0px" width="48" height="48" viewBox="0 0 48 48"><path d="M18,4 Q10,4 10,11 V18 Q10,24 4,24 Q10,24 10,30 V37 Q10,44 18,44 M30,4 Q38,4 38,11 V18 Q38,24 44,24 Q38,24 38,30 V37 Q38,44 30,44" fill="none" stroke="#2e3436" stroke-width="5" stroke-linecap="round"/></svg>
<svg class="abs" style="left:1707.1px;top:64.5px" width="9" height="32" viewBox="0 0 9 32"><rect x="0.0" y="0.0" width="2" height="2" fill="#b0b0b0"/><rect x="6.6" y="0.0" width="2" height="2" fill="#b0b0b0"/><rect x="0.0" y="5.8" width="2" height="2" fill="#b0b0b0"/><rect x="6.6" y="5.8" width="2" height="2" fill="#b0b0b0"/><rect x="0.0" y="11.6" width="2" height="2" fill="#b0b0b0"/><rect x="6.6" y="11.6" width="2" height="2" fill="#b0b0b0"/><rect x="0.0" y="17.4" width="2" height="2" fill="#b0b0b0"/><rect x="6.6" y="17.4" width="2" height="2" fill="#b0b0b0"/><rect x="0.0" y="23.2" width="2" height="2" fill="#b0b0b0"/><rect x="6.6" y="23.2" width="2" height="2" fill="#b0b0b0"/><rect x="0.0" y="29.0" width="2" height="2" fill="#b0b0b0"/><rect x="6.6" y="29.0" width="2" height="2" fill="#b0b0b0"/></svg>
<div class="abs" style="left:1720.2px;top:54.2px;width:178.8px;height:51.3px;box-sizing:border-box;border:2px solid #b4b4b4;border-radius:5px;background:linear-gradient(#fdfdfd,#f1f1f1)"></div>
<svg class="abs" style="left:1769.0px;top:63.0px" width="34" height="34" viewBox="0 0 48 48"><path d="M4,10 L34,3 L45,10 V37 L15,45 L4,37 Z" fill="#eefcfc" stroke="#0b5c66" stroke-width="3.6" stroke-linejoin="round"/><path d="M4,10 L34,3 L45,10 L15,17 Z" fill="#2fd6dc" stroke="#0b5c66" stroke-width="2" stroke-linejoin="round"/><path d="M15,17 V45 M15,17 L4,10 M15,17 L45,10" stroke="#0b5c66" stroke-width="2.6"/><path d="M4,10 L34,3 L45,10 V37 L15,45 L4,37 Z" fill="none" stroke="#2fd6dc" stroke-width="1.4" stroke-linejoin="round"/><path d="M24,24 V31 M9,33 L12,35.5 M34,30 L39,32.5" stroke="#19a7b3" stroke-width="3" stroke-linecap="round"/></svg>
<div class="t " style="left:1806.0px;top:71.3px;font-size:22.50px;letter-spacing:-0.093px;">Top</div>
<div class="abs" style="left:1902.9px;top:54.2px;width:201.9px;height:51.3px;box-sizing:border-box;border:2px solid #b4b4b4;border-radius:5px;background:linear-gradient(#fdfdfd,#f1f1f1)"></div>
<svg class="abs" style="left:1915.0px;top:68.0px" width="26" height="26" viewBox="0 0 48 48"><path d="M3,3 H45 L3,45 Z" fill="#111"/><path d="M45,3 V45 H3 Z" fill="#b4bcc4" stroke="#111" stroke-width="1.4"/><path d="M45,3 L3,45" stroke="#fff" stroke-width="2.5"/></svg>
<div class="t " style="left:1948.0px;top:71.3px;font-size:22.50px;letter-spacing:0.065px;">2px | 3,50 mm</div>
<div class="abs" style="left:2109.0px;top:50.4px;width:178.4px;height:58.2px;box-sizing:border-box;border:2px solid #b4b4b4;border-radius:5px;background:linear-gradient(#fdfdfd,#f1f1f1)"></div>
<svg class="abs" style="left:2182.0px;top:63.0px" width="32" height="32" viewBox="0 0 48 48"><path d="M2,30 Q4,24 22,20 L26,26 Q10,34 4,34 Q1,33 2,30 Z" fill="#19a7b3" stroke="#0b5c66" stroke-width="1.4"/><path d="M18,16 Q36,8 46,10 Q46,24 30,34 L28,28 L22,26 Z" fill="#2fd6dc" stroke="#0b5c66" stroke-width="1.4" stroke-linejoin="round"/></svg>
<div class="t " style="left:2345.6px;top:62.2px;font-size:26.00px;color:#333;">»</div>
<svg class="abs" style="left:2383.4px;top:64.5px" width="9" height="32" viewBox="0 0 9 32"><rect x="0.0" y="0.0" width="2" height="2" fill="#b0b0b0"/><rect x="6.6" y="0.0" width="2" height="2" fill="#b0b0b0"/><rect x="0.0" y="5.8" width="2" height="2" fill="#b0b0b0"/><rect x="6.6" y="5.8" width="2" height="2" fill="#b0b0b0"/><rect x="0.0" y="11.6" width="2" height="2" fill="#b0b0b0"/><rect x="6.6" y="11.6" width="2" height="2" fill="#b0b0b0"/><rect x="0.0" y="17.4" width="2" height="2" fill="#b0b0b0"/><rect x="6.6" y="17.4" width="2" height="2" fill="#b0b0b0"/><rect x="0.0" y="23.2" width="2" height="2" fill="#b0b0b0"/><rect x="6.6" y="23.2" width="2" height="2" fill="#b0b0b0"/><rect x="0.0" y="29.0" width="2" height="2" fill="#b0b0b0"/><rect x="6.6" y="29.0" width="2" height="2" fill="#b0b0b0"/></svg>
<svg class="abs" style="left:2402.0px;top:55.0px" width="48" height="48" viewBox="0 0 48 48"><path d="M8,38 L16,17 L29,38 L41,6" fill="none" stroke="#2e3436" stroke-width="6" stroke-linejoin="round"/><path d="M8,38 L16,17 L29,38 L41,6" fill="none" stroke="#d3d7cf" stroke-width="3" stroke-linejoin="round"/><circle cx="8" cy="38" r="7" fill="url(#gredr)" stroke="#280000" stroke-width="1.4"/><circle cx="16" cy="17" r="7" fill="url(#gredr)" stroke="#280000" stroke-width="1.4"/><circle cx="29" cy="38" r="7" fill="url(#gredr)" stroke="#280000" stroke-width="1.4"/><circle cx="41" cy="6" r="7" fill="url(#gredr)" stroke="#280000" stroke-width="1.4"/></svg>
<div class="t " style="left:2465.8px;top:65.2px;font-size:26.00px;color:#333;">»</div>
<svg class="abs" style="left:2503.6px;top:64.5px" width="9" height="32" viewBox="0 0 9 32"><rect x="0.0" y="0.0" width="2" height="2" fill="#b0b0b0"/><rect x="6.6" y="0.0" width="2" height="2" fill="#b0b0b0"/><rect x="0.0" y="5.8" width="2" height="2" fill="#b0b0b0"/><rect x="6.6" y="5.8" width="2" height="2" fill="#b0b0b0"/><rect x="0.0" y="11.6" width="2" height="2" fill="#b0b0b0"/><rect x="6.6" y="11.6" width="2" height="2" fill="#b0b0b0"/><rect x="0.0" y="17.4" width="2" height="2" fill="#b0b0b0"/><rect x="6.6" y="17.4" width="2" height="2" fill="#b0b0b0"/><rect x="0.0" y="23.2" width="2" height="2" fill="#b0b0b0"/><rect x="6.6" y="23.2" width="2" height="2" fill="#b0b0b0"/><rect x="0.0" y="29.0" width="2" height="2" fill="#b0b0b0"/><rect x="6.6" y="29.0" width="2" height="2" fill="#b0b0b0"/></svg>
<div class="abs" style="left:2516.7px;top:48.6px;width:64.0px;height:64.4px;box-sizing:border-box;border:2px solid #c4c4c4;border-radius:5px;background:linear-gradient(#ececec,#dcdcdc)"></div>
<svg class="abs" style="left:2524.4px;top:57.0px" width="48" height="48" viewBox="0 0 48 48"><path d="M13,24 V14 Q13,4 24,4 Q35,4 35,14 V24" fill="none" stroke="#0b5c66" stroke-width="7"/><path d="M13,24 V14 Q13,4 24,4 Q35,4 35,14 V24" fill="none" stroke="#2fd6dc" stroke-width="4"/><rect x="9" y="21" width="30" height="24" fill="url(#gcy)" stroke="#0b5c66" stroke-width="1.8"/><path d="M12,27 H36 M12,32 H36 M12,37 H36 M12,42 H36" stroke="#0b5c66" stroke-width="1.6" opacity="0.7"/></svg>
<div class="t " style="left:2589.8px;top:67.2px;font-size:26.00px;color:#333;">»</div>
<svg class="abs" style="left:2627.4px;top:64.5px" width="9" height="32" viewBox="0 0 9 32"><rect x="0.0" y="0.0" width="2" height="2" fill="#b0b0b0"/><rect x="6.6" y="0.0" width="2" height="2" fill="#b0b0b0"/><rect x="0.0" y="5.8" width="2" height="2" fill="#b0b0b0"/><rect x="6.6" y="5.8" width="2" height="2" fill="#b0b0b0"/><rect x="0.0" y="11.6" width="2" height="2" fill="#b0b0b0"/><rect x="6.6" y="11.6" width="2" height="2" fill="#b0b0b0"/><rect x="0.0" y="17.4" width="2" height="2" fill="#b0b0b0"/><rect x="6.6" y="17.4" width="2" height="2" fill="#b0b0b0"/><rect x="0.0" y="23.2" width="2" height="2" fill="#b0b0b0"/><rect x="6.6" y="23.2" width="2" height="2" fill="#b0b0b0"/><rect x="0.0" y="29.0" width="2" height="2" fill="#b0b0b0"/><rect x="6.6" y="29.0" width="2" height="2" fill="#b0b0b0"/></svg>
<svg class="abs" style="left:2646.0px;top:56.0px" width="48" height="48" viewBox="0 0 48 48"><path d="M8,2 H32 L40,10 V46 H8 Z" fill="url(#gdocv)" stroke="#2e3436" stroke-width="1.6" stroke-linejoin="round"/><path d="M32,2 V10 H40 Z" fill="#babdb6" stroke="#2e3436" stroke-width="1.4" stroke-linejoin="round"/><g fill="none" stroke-width="3.4" stroke-linejoin="round"><path d="M14,22 L21,15 L28,22 L21,29 Z" stroke="#204a87"/><path d="M25,21 L32,14 L39,21 L32,28 Z" stroke="#cc0000"/><path d="M14,33 L21,26 L28,33 L21,40 Z" stroke="#ad2ba0"/><path d="M25,32 L32,25 L39,32 L32,39 Z" stroke="#06a3b4"/></g></svg>
<div class="t " style="left:2710.0px;top:65.2px;font-size:26.00px;color:#333;">»</div>
<svg class="abs" style="left:11.3px;top:144.5px" width="9" height="32" viewBox="0 0 9 32"><rect x="0.0" y="0.0" width="2" height="2" fill="#b0b0b0"/><rect x="6.6" y="0.0" width="2" height="2" fill="#b0b0b0"/><rect x="0.0" y="5.8" width="2" height="2" fill="#b0b0b0"/><rect x="6.6" y="5.8" width="2" height="2" fill="#b0b0b0"/><rect x="0.0" y="11.6" width="2" height="2" fill="#b0b0b0"/><rect x="6.6" y="11.6" width="2" height="2" fill="#b0b0b0"/><rect x="0.0" y="17.4" width="2" height="2" fill="#b0b0b0"/><rect x="6.6" y="17.4" width="2" height="2" fill="#b0b0b0"/><rect x="0.0" y="23.2" width="2" height="2" fill="#b0b0b0"/><rect x="6.6" y="23.2" width="2" height="2" fill="#b0b0b0"/><rect x="0.0" y="29.0" width="2" height="2" fill="#b0b0b0"/><rect x="6.6" y="29.0" width="2" height="2" fill="#b0b0b0"/></svg>
<svg class="abs" style="left:28.8px;top:136.0px" width="48" height="48" viewBox="0 0 48 48"><text x="21" y="42" font-family="Liberation Serif,serif" font-style="italic" font-weight="bold" font-size="52" text-anchor="middle" transform="scale(1.12,1)" fill="url(#gyel)" stroke="#3b3200" stroke-width="1.6">A</text></svg>
<svg class="abs" style="left:93.8px;top:136.0px" width="48" height="48" viewBox="0 0 48 48"><text x="19" y="45" font-family="Liberation Serif,serif" font-style="italic" font-size="64" text-anchor="middle" transform="scale(1.25,1)" fill="url(#gyel)" stroke="#3b3200" stroke-width="1.5">S</text></svg>
<svg class="abs" style="left:158.0px;top:136.0px" width="48" height="48" viewBox="0 0 48 48"><path d="M6,26 L26,5 L42,15 M6,26 L20,44 M15,16 L19,20" fill="none" stroke="#2e3436" stroke-width="4.4"/><path d="M6,26 L26,5 L42,15 M6,26 L20,44" fill="none" stroke="#d3d7cf" stroke-width="2"/><text x="6" y="33" font-size="14" font-weight="bold" font-family="Liberation Serif,serif" fill="#eeeeec" stroke="#2e3436" stroke-width="0.9" transform="rotate(-48 16 30)">1.00</text><circle cx="26" cy="5" r="3.4" fill="#2e3436" stroke="#000" stroke-width="0.8"/><circle cx="6" cy="26" r="3.4" fill="#2e3436" stroke="#000" stroke-width="0.8"/><circle cx="18" cy="15" r="4.6" fill="url(#gyelr)" stroke="#3b3200" stroke-width="1.4"/><circle cx="42" cy="15" r="4.6" fill="url(#gyelr)" stroke="#3b3200" stroke-width="1.4"/><circle cx="20" cy="44" r="4.6" fill="url(#gyelr)" stroke="#3b3200" stroke-width="1.4"/></svg>
<svg class="abs" style="left:222.3px;top:136.0px" width="48" height="48" viewBox="0 0 48 48"><text x="24" y="15" font-size="18" font-weight="bold" font-family="Liberation Serif,serif" text-anchor="middle" fill="#eeeeec" stroke="#2e3436" stroke-width="1">1.00</text><path d="M6,24 H42 M6,24 V42 M42,24 V42" fill="none" stroke="#2e3436" stroke-width="4.4"/><path d="M6,24 H42 M6,24 V42 M42,24 V42" fill="none" stroke="#d3d7cf" stroke-width="2"/><circle cx="6" cy="24" r="3.4" fill="#2e3436" stroke="#000" stroke-width="0.8"/><circle cx="42" cy="24" r="3.4" fill="#2e3436" stroke="#000" stroke-width="0.8"/><circle cx="24" cy="24" r="4.6" fill="url(#gyelr)" stroke="#3b3200" stroke-width="1.4"/><circle cx="6" cy="42" r="4.6" fill="url(#gyelr)" stroke="#3b3200" stroke-width="1.4"/><circle cx="42" cy="42" r="4.6" fill="url(#gyelr)" stroke="#3b3200" stroke-width="1.4"/></svg>
<svg class="abs" style="left:285.7px;top:136.0px" width="48" height="48" viewBox="0 0 48 48"><text x="0" y="0" font-size="18" font-weight="bold" font-family="Liberation Serif,serif" text-anchor="middle" fill="#eeeeec" stroke="#2e3436" stroke-width="1" transform="translate(15,24) rotate(-90)">1.00</text><path d="M24,6 V42 M24,6 H42 M24,42 H42" fill="none" stroke="#2e3436" stroke-width="4.4"/><path d="M24,6 V42 M24,6 H42 M24,42 H42" fill="none" stroke="#d3d7cf" stroke-width="2"/><circle cx="24" cy="6" r="3.4" fill="#2e3436" stroke="#000" stroke-width="0.8"/><circle cx="24" cy="42" r="3.4" fill="#2e3436" stroke="#000" stroke-width="0.8"/><circle cx="24" cy="24" r="4.6" fill="url(#gyelr)" stroke="#3b3200" stroke-width="1.4"/><circle cx="42" cy="6" r="4.6" fill="url(#gyelr)" stroke="#3b3200" stroke-width="1.4"/><circle cx="42" cy="42" r="4.6" fill="url(#gyelr)" stroke="#3b3200" stroke-width="1.4"/></svg>
<svg class="abs" style="left:349.9px;top:136.0px" width="48" height="48" viewBox="0 0 48 48"><path d="M8,40 L16,16 H44" fill="none" stroke="#2e3436" stroke-width="6" stroke-linejoin="miter"/><path d="M8,40 L16,16 H42.6" fill="none" stroke="#eeeeec" stroke-width="3"/><circle cx="9" cy="39" r="7" fill="url(#gyelr)" stroke="#3b3200" stroke-width="1.4"/></svg>
<svg class="abs" style="left:413.7px;top:136.0px" width="48" height="48" viewBox="0 0 48 48"><path d="M36,20 L42,26 V38" fill="none" stroke="#2e3436" stroke-width="5"/><path d="M36,20 L42,26 V38" fill="none" stroke="#e9dfc0" stroke-width="2.4"/><path d="M3,8 H27 L36,17 L27,26 H3 Z" fill="#f1ead3" stroke="#2e3436" stroke-width="1.8" stroke-linejoin="round"/><path d="M7,13 H22 M7,20 H22" stroke="#2e3436" stroke-width="2.2"/><circle cx="28" cy="17" r="2.2" fill="#2e3436"/><circle cx="42" cy="40" r="5.2" fill="url(#gyelr)" stroke="#3b3200" stroke-width="1.4"/></svg>
<svg class="abs" style="left:478.3px;top:136.0px" width="48" height="48" viewBox="0 0 48 48"><path d="M13,14 V46 M35,14 V46" stroke="#3b3200" stroke-width="5.4"/><path d="M13,14 V45.2 M35,14 V45.2" stroke="#f0d820" stroke-width="2.8"/><circle cx="13" cy="10" r="7.2" fill="url(#gyelr)" stroke="#3b3200" stroke-width="1.4"/><circle cx="35" cy="10" r="7.2" fill="url(#gyelr)" stroke="#3b3200" stroke-width="1.4"/></svg>
<svg class="abs" style="left:542.5px;top:136.0px" width="48" height="48" viewBox="0 0 48 48"><path d="M20,8 V46 M37,8 V46 M8,19 H46 M8,36 H46" stroke="#3b3200" stroke-width="5.6"/><path d="M20,8 V45.2 M37,8 V45.2 M8,19 H45.2 M8,36 H45.2" stroke="#f0d820" stroke-width="3"/><circle cx="20" cy="8" r="6.4" fill="url(#gyelr)" stroke="#3b3200" stroke-width="1.4"/><circle cx="37" cy="8" r="6.4" fill="url(#gyelr)" stroke="#3b3200" stroke-width="1.4"/><circle cx="8" cy="19" r="6.4" fill="url(#gyelr)" stroke="#3b3200" stroke-width="1.4"/><circle cx="8" cy="36" r="6.4" fill="url(#gyelr)" stroke="#3b3200" stroke-width="1.4"/></svg>
<svg class="abs" style="left:606.7px;top:136.0px" width="48" height="48" viewBox="0 0 48 48"><path d="M15,2 V46 M33,2 V46 M2,15 H46 M2,33 H46 M11,3 H19 M29,3 H37 M11,45 H19 M29,45 H37 M3,11 V19 M3,29 V37 M45,11 V19 M45,29 V37" stroke="#3b3200" stroke-width="5.8"/><path d="M15,3 V45 M33,3 V45 M3,15 H45 M3,33 H45 M11.8,3 H18.2 M29.8,3 H36.2 M11.8,45 H18.2 M29.8,45 H36.2 M3,11.8 V18.2 M3,29.8 V36.2 M45,11.8 V18.2 M45,29.8 V36.2" stroke="#f0d820" stroke-width="3.2"/></svg>
<svg class="abs" style="left:670.0px;top:136.0px" width="48" height="48" viewBox="0 0 48 48"><path d="M22,40 h4 v7 h-4 Z" fill="#e8cf1a" stroke="#3b3200" stroke-width="1.2"/><circle cx="24" cy="22" r="19" fill="url(#gyel)" stroke="#3b3200" stroke-width="1.8"/><path d="M23,3.2 L25,3.2 L43,22 L25,40.8 L23,40.8 Z" fill="#2b2400"/><text x="13.5" y="29" font-size="21" font-family="Liberation Sans,sans-serif" text-anchor="middle" fill="#6b5f10">A</text></svg>
<svg class="abs" style="left:734.0px;top:136.0px" width="48" height="48" viewBox="0 0 48 48"><clipPath id="hc"><path d="M26,7 H43 V43 H5 V29 H26 Z"/></clipPath><path d="M23,3 H46 V47 H1 V25 H23 Z" fill="#e4e4e4" stroke="#b0b0b0" stroke-width="1.4" stroke-linejoin="round"/><path d="M26,7 H43 V43 H5 V29 H26 Z" fill="#fff" stroke="#999" stroke-width="1"/><g clip-path="url(#hc)" stroke="#7c7c7c" stroke-width="5"><path d="M-6,30 L20,56 M4,24 L34,54 M16,20 L46,50 M22,10 L52,40 M30,2 L60,32"/></g></svg>
<svg class="abs" style="left:797.9px;top:136.0px" width="48" height="48" viewBox="0 0 48 48"><rect x="2" y="5" width="42" height="32" fill="url(#gdoc)" stroke="#2e3436" stroke-width="1.6"/><rect x="4.5" y="7.5" width="37" height="27" fill="none" stroke="#999" stroke-width="1"/><circle cx="35" cy="36" r="10" fill="#fff" stroke="#888a85" stroke-width="1.4"/><path d="M27.5,36 h15 M35,28.5 v15" stroke="#4e9a06" stroke-width="3.4"/></svg>
<svg class="abs" style="left:861.8px;top:136.0px" width="48" height="48" viewBox="0 0 48 48"><rect x="2" y="6" width="44" height="36" fill="#eeeeec" stroke="#2e3436" stroke-width="1.6"/><path d="M10,14 H18 V10 H24 V14 H36 V36 H10 V30 M10,24 V20 M18,22 H26 V30 H32" fill="none" stroke="#000" stroke-width="5.5"/><path d="M10,14 H18 V10 H24 V14 H36 V36 H10 V30 M10,24 V20 M18,22 H26 V30 H32" fill="none" stroke="#fff" stroke-width="2.5"/></svg>
<svg class="abs" style="left:925.8px;top:136.0px" width="48" height="48" viewBox="0 0 48 48"><path d="M2,6 H13 V20 H21 V28 H11 V34 H23 V42 H2 Z M26,6 H46 V42 H28 V35 H38 V28 H42 V14 H36 V21 H31 V14 H26 Z" fill="#fff" stroke="#2e2a12" stroke-width="3" stroke-linejoin="round"/></svg>
<svg class="abs" style="left:1001.3px;top:144.5px" width="9" height="32" viewBox="0 0 9 32"><rect x="0.0" y="0.0" width="2" height="2" fill="#b0b0b0"/><rect x="6.6" y="0.0" width="2" height="2" fill="#b0b0b0"/><rect x="0.0" y="5.8" width="2" height="2" fill="#b0b0b0"/><rect x="6.6" y="5.8" width="2" height="2" fill="#b0b0b0"/><rect x="0.0" y="11.6" width="2" height="2" fill="#b0b0b0"/><rect x="6.6" y="11.6" width="2" height="2" fill="#b0b0b0"/><rect x="0.0" y="17.4" width="2" height="2" fill="#b0b0b0"/><rect x="6.6" y="17.4" width="2" height="2" fill="#b0b0b0"/><rect x="0.0" y="23.2" width="2" height="2" fill="#b0b0b0"/><rect x="6.6" y="23.2" width="2" height="2" fill="#b0b0b0"/><rect x="0.0" y="29.0" width="2" height="2" fill="#b0b0b0"/><rect x="6.6" y="29.0" width="2" height="2" fill="#b0b0b0"/></svg>
<svg class="abs" style="left:1019.8px;top:136.0px" width="48" height="48" viewBox="0 0 48 48"><path d="M40,4 L44,8 L22,30 L18,26 Z" fill="#d3d7cf" stroke="#2e3436" stroke-width="1.6" stroke-linejoin="round"/><path d="M18,26 L22,30 L12,44 Q7,47 4,43 Q1,40 5,36 Z" fill="#3465a4" stroke="#0f2d59" stroke-width="1.6" stroke-linejoin="round"/><path d="M4,12 Q2,4 10,2 L9,9 L14,12 L19,8 Q20,16 13,18 L40,40 Q43,44 40,46 Q36,47 34,44 L9,19 Q5,18 4,12 Z" fill="#babdb6" stroke="#2e3436" stroke-width="1.6" stroke-linejoin="round"/></svg>
<svg class="abs" style="left:1083.6px;top:136.0px" width="48" height="48" viewBox="0 0 48 48"><rect x="5" y="7" width="38" height="34" fill="#fff" stroke="#2e3436" stroke-width="1.2"/><path d="M5,16 H43 M5,24 H43 M5,33 H43 M14,7 V41 M24,7 V41 M33,7 V41" stroke="#babdb6" stroke-width="1.2"/><path d="M11,20 V35 H30" fill="none" stroke="#2e3436" stroke-width="1.4"/><path d="M11,19 L8.5,25 H13.5 Z M36,35 L29,32 V38 Z" fill="#fff" stroke="#2e3436" stroke-width="1.2"/></svg>
<svg class="abs" style="left:1147.8px;top:136.0px" width="48" height="48" viewBox="0 0 48 48"><path d="M3,22 L17,4 L36,3 L46,16 V34 L26,45 L3,41 Z" fill="url(#gdoc)" stroke="#2e3436" stroke-width="1.8" stroke-linejoin="round"/><path d="M26,19 L36,3 L46,16 V34 L26,45 Z" fill="#888a85" opacity="0.55"/><path d="M3,22 L17,4 L26,19 L46,16 M26,19 V45" fill="none" stroke="#2e3436" stroke-width="1.4" stroke-linejoin="round"/><path d="M10,42 V27 H18 V43.5" fill="#fffbe0" stroke="#2e3436" stroke-width="1.6"/><path d="M12.5,42 V30 H15.5 V43" fill="none" stroke="#777" stroke-width="1"/></svg>
<svg class="abs" style="left:1211.8px;top:136.0px" width="48" height="48" viewBox="0 0 48 48"><path d="M8,2 H32 L40,10 V46 H8 Z" fill="url(#gdocv)" stroke="#2e3436" stroke-width="1.6" stroke-linejoin="round"/><path d="M32,2 V10 H40 Z" fill="#babdb6" stroke="#2e3436" stroke-width="1.4" stroke-linejoin="round"/><path d="M13,9 H27 V44 H13 Z" fill="#d3d7cf" stroke="#2e3436" stroke-width="1.4"/><path d="M16,12 H24 V41 H16 Z" fill="#eeeeec" stroke="#2e3436" stroke-width="1.1"/><rect x="21" y="22" width="17" height="20" fill="#d3d7cf" stroke="#2e3436" stroke-width="1.5"/><path d="M24,25 h4.5 v5.5 h-4.5 Z M31,25 h4.5 v5.5 h-4.5 Z M24,33.5 h4.5 v5.5 h-4.5 Z M31,33.5 h4.5 v5.5 h-4.5 Z" fill="#fff" stroke="#2e3436" stroke-width="1.2"/></svg>
<svg class="abs" style="left:1275.8px;top:136.0px" width="48" height="48" viewBox="0 0 48 48"><path d="M8,2 H32 L40,10 V46 H8 Z" fill="url(#gdocv)" stroke="#2e3436" stroke-width="1.6" stroke-linejoin="round"/><path d="M32,2 V10 H40 Z" fill="#babdb6" stroke="#2e3436" stroke-width="1.4" stroke-linejoin="round"/><path d="M19,15.25 l6.5,-3.25 l6.5,3.25 v7.15 l-6.5,3.25 l-6.5,-3.25 Z" fill="#cc0000"/><path d="M19,15.25 l6.5,-3.25 l6.5,3.25 l-6.5,3.25 Z" fill="#ef2929"/><path d="M25.5,18.5 l6.5,-3.25 v7.15 l-6.5,3.25 Z" fill="#a40000"/><path d="M12,27.25 l6.5,-3.25 l6.5,3.25 v7.15 l-6.5,3.25 l-6.5,-3.25 Z" fill="#1c7fd0"/><path d="M12,27.25 l6.5,-3.25 l6.5,3.25 l-6.5,3.25 Z" fill="#4f9fe0"/><path d="M18.5,30.5 l6.5,-3.25 v7.15 l-6.5,3.25 Z" fill="#1565a8"/><path d="M25,27.25 l6.5,-3.25 l6.5,3.25 v7.15 l-6.5,3.25 l-6.5,-3.25 Z" fill="#16a5b5"/><path d="M25,27.25 l6.5,-3.25 l6.5,3.25 l-6.5,3.25 Z" fill="#37c6d4"/><path d="M31.5,30.5 l6.5,-3.25 v7.15 l-6.5,3.25 Z" fill="#0e8694"/></svg>
<svg class="abs" style="left:1339.8px;top:136.0px" width="48" height="48" viewBox="0 0 48 48"><path d="M8,2 H32 L40,10 V46 H8 Z" fill="url(#gdocv)" stroke="#2e3436" stroke-width="1.6" stroke-linejoin="round"/><path d="M32,2 V10 H40 Z" fill="#babdb6" stroke="#2e3436" stroke-width="1.4" stroke-linejoin="round"/><rect x="14" y="19" width="6" height="20" fill="#1c6fd0"/><rect x="22.5" y="11" width="6" height="28" fill="#e0203c"/><rect x="31" y="26" width="6" height="13" fill="#16a5b5"/></svg>
<svg class="abs" style="left:1404.2px;top:136.0px" width="48" height="48" viewBox="0 0 48 48"><path d="M8,2 H32 L40,10 V46 H8 Z" fill="url(#gdocv)" stroke="#2e3436" stroke-width="1.6" stroke-linejoin="round"/><path d="M32,2 V10 H40 Z" fill="#babdb6" stroke="#2e3436" stroke-width="1.4" stroke-linejoin="round"/><path d="M20,18 L14,24.5 L20,31 M30,18 L36,24.5 L30,31" fill="none" stroke="#1c6fd0" stroke-width="3"/><path d="M36,24.5 L30,18 M36,24.5 L30,31" stroke="#16a5b5" stroke-width="3" fill="none"/><path d="M27,16 L23,33" stroke="#e0203c" stroke-width="3"/></svg>
<svg class="abs" style="left:1467.8px;top:136.0px" width="48" height="48" viewBox="0 0 48 48"><path d="M8,2 H32 L40,10 V46 H8 Z" fill="url(#gdocv)" stroke="#2e3436" stroke-width="1.6" stroke-linejoin="round"/><path d="M32,2 V10 H40 Z" fill="#babdb6" stroke="#2e3436" stroke-width="1.4" stroke-linejoin="round"/><path d="M20,10 L33,14 V36 L20,32 Z" fill="#e0203c" stroke="#a40000" stroke-width="0.8"/><path d="M14,20 L28,17 V38 L14,42 Z" fill="#1c6fd0" stroke="#0f4a90" stroke-width="0.8"/></svg>
<svg class="abs" style="left:1532.0px;top:136.0px" width="48" height="48" viewBox="0 0 48 48"><path d="M8,2 H32 L40,10 V46 H8 Z" fill="url(#gdocv)" stroke="#2e3436" stroke-width="1.6" stroke-linejoin="round"/><path d="M32,2 V10 H40 Z" fill="#babdb6" stroke="#2e3436" stroke-width="1.4" stroke-linejoin="round"/><g fill="#eeeeec" stroke="#2e3436" stroke-width="1.2" stroke-linejoin="round"><path d="M14,33 L25,28 L36,33 L25,38 Z"/><path d="M14,27 L25,22 L36,27 L25,32 Z"/><path d="M14,21 L25,16 L36,21 L25,26 Z"/></g></svg>
<svg class="abs" style="left:1596.0px;top:136.0px" width="48" height="48" viewBox="0 0 48 48"><path d="M8,2 H32 L40,10 V46 H8 Z" fill="url(#gdocv)" stroke="#2e3436" stroke-width="1.6" stroke-linejoin="round"/><path d="M32,2 V10 H40 Z" fill="#babdb6" stroke="#2e3436" stroke-width="1.4" stroke-linejoin="round"/><circle cx="29" cy="18" r="5.4" fill="url(#gyelr)" stroke="#3b3200" stroke-width="1.4"/><circle cx="20" cy="29" r="5.4" fill="url(#gyelr)" stroke="#3b3200" stroke-width="1.4"/><circle cx="32" cy="33" r="5.4" fill="url(#gyelr)" stroke="#3b3200" stroke-width="1.4"/></svg>
<svg class="abs" style="left:1659.9px;top:136.0px" width="48" height="48" viewBox="0 0 48 48"><rect x="2" y="7" width="44" height="35" fill="url(#gyel)" stroke="#3b3200" stroke-width="1.8"/><path d="M2,16 H46 M2,25 H46 M2,34 H46 M15,7 V42" stroke="#3b3200" stroke-width="1.8"/></svg>
<svg class="abs" style="left:1726.3px;top:136.0px" width="48" height="48" viewBox="0 0 48 48"><path d="M8,2 H32 L40,10 V46 H8 Z" fill="url(#gdocv)" stroke="#2e3436" stroke-width="1.6" stroke-linejoin="round"/><path d="M32,2 V10 H40 Z" fill="#babdb6" stroke="#2e3436" stroke-width="1.4" stroke-linejoin="round"/><path d="M21,14 H35 M21,20 H35 M21,26 H35" stroke="#2e3436" stroke-width="2.2"/><circle cx="16" cy="14" r="1.8" fill="#2e3436"/><circle cx="16" cy="20" r="1.8" fill="#2e3436"/><circle cx="16" cy="26" r="1.8" fill="#2e3436"/><path d="M15,34 L20,30 L25,36 L40,22 L44,27 L25,45 Z" fill="url(#ggrn)" stroke="#2d5a00" stroke-width="1.4" stroke-linejoin="round"/></svg>
<svg class="abs" style="left:1788.0px;top:136.0px" width="48" height="48" viewBox="0 0 48 48"><text x="22" y="43" font-family="Liberation Serif,serif" font-style="italic" font-weight="bold" font-size="50" text-anchor="middle" fill="url(#gyel)" stroke="#3b3200" stroke-width="1.6">A</text><path d="M18,34 L22,24 L38,6 L46,13 L30,31 Z" fill="#e8c61a" stroke="#3b3200" stroke-width="1.5" stroke-linejoin="round"/><path d="M18,34 L22,24 L30,31 Z" fill="#f5e9c9" stroke="#3b3200" stroke-width="1.2"/><path d="M18,34 L19.6,29.8 L22.6,32.4 Z" fill="#222"/><path d="M34,10 L42,17 M36,8 L44,15" stroke="#3b3200" stroke-width="1.4"/></svg>
<svg class="abs" style="left:1863.7px;top:144.5px" width="9" height="32" viewBox="0 0 9 32"><rect x="0.0" y="0.0" width="2" height="2" fill="#b0b0b0"/><rect x="6.6" y="0.0" width="2" height="2" fill="#b0b0b0"/><rect x="0.0" y="5.8" width="2" height="2" fill="#b0b0b0"/><rect x="6.6" y="5.8" width="2" height="2" fill="#b0b0b0"/><rect x="0.0" y="11.6" width="2" height="2" fill="#b0b0b0"/><rect x="6.6" y="11.6" width="2" height="2" fill="#b0b0b0"/><rect x="0.0" y="17.4" width="2" height="2" fill="#b0b0b0"/><rect x="6.6" y="17.4" width="2" height="2" fill="#b0b0b0"/><rect x="0.0" y="23.2" width="2" height="2" fill="#b0b0b0"/><rect x="6.6" y="23.2" width="2" height="2" fill="#b0b0b0"/><rect x="0.0" y="29.0" width="2" height="2" fill="#b0b0b0"/><rect x="6.6" y="29.0" width="2" height="2" fill="#b0b0b0"/></svg>
<svg class="abs" style="left:1882.3px;top:136.0px" width="48" height="48" viewBox="0 0 48 48"><g transform="translate(24,24) scale(1.0) translate(-24,-24)"><path d="M24,1 L33,12 H27.5 V20.5 H36 V15 L47,24 L36,33 V27.5 H27.5 V36 H33 L24,47 L15,36 H20.5 V27.5 H12 V33 L1,24 L12,15 V20.5 H20.5 V12 H15 Z" fill="url(#gblue)" stroke="#0f2d59" stroke-width="1.7" stroke-linejoin="round"/></g></svg>
<svg class="abs" style="left:1946.2px;top:136.0px" width="48" height="48" viewBox="0 0 48 48"><g transform="translate(20,20) scale(0.82) translate(-24,-24)"><path d="M24,1 L33,12 H27.5 V20.5 H36 V15 L47,24 L36,33 V27.5 H27.5 V36 H33 L24,47 L15,36 H20.5 V27.5 H12 V33 L1,24 L12,15 V20.5 H20.5 V12 H15 Z" fill="url(#gblue)" stroke="#0f2d59" stroke-width="2.073170731707317" stroke-linejoin="round"/></g><g transform="translate(33,32) scale(0.6) translate(-24,-24)"><path d="M24,1 L33,12 H27.5 V20.5 H36 V15 L47,24 L36,33 V27.5 H27.5 V36 H33 L24,47 L15,36 H20.5 V27.5 H12 V33 L1,24 L12,15 V20.5 H20.5 V12 H15 Z" fill="url(#gblue)" stroke="#0f2d59" stroke-width="2.8333333333333335" stroke-linejoin="round"/></g></svg>
<svg class="abs" style="left:2010.2px;top:136.0px" width="48" height="48" viewBox="0 0 48 48"><path d="M30,3 L18,14 L30,22 V16 C40,20 40,36 26,38 C14,39 9,30 11,22 L4,24 C1,36 12,46 26,45 C46,43 50,16 30,9 Z" fill="url(#gblue)" stroke="#0f2d59" stroke-width="1.7" stroke-linejoin="round"/></svg>
<svg class="abs" style="left:2074.2px;top:136.0px" width="48" height="48" viewBox="0 0 48 48"><path d="M2,14 Q0,24 8,26 M46,14 Q48,24 40,26" fill="#5b8fcf" stroke="#0f2d59" stroke-width="1.6"/><path d="M10,22 C4,16 8,6 16,8 C18,2 30,2 32,8 C40,6 44,16 38,22 C40,32 32,46 24,46 C16,46 8,32 10,22 Z" fill="url(#gblue)" stroke="#0f2d59" stroke-width="1.7"/><path d="M12,20 C14,14 34,14 36,20 C38,30 32,44 24,44 C16,44 10,30 12,20 Z" fill="#5b8fcf" stroke="#0f2d59" stroke-width="1"/><ellipse cx="18" cy="24" rx="5" ry="4" fill="#fff"/><ellipse cx="30" cy="24" rx="5" ry="4" fill="#fff"/><circle cx="19.5" cy="24" r="2.4" fill="#000"/><circle cx="28.5" cy="24" r="2.4" fill="#000"/><path d="M20,40 Q24,43 28,40 M24,36 V40" stroke="#0f2d59" stroke-width="1.4" fill="none"/></svg>
<svg class="abs" style="left:2137.9px;top:136.0px" width="48" height="48" viewBox="0 0 48 48"><path d="M3,12 L26,5 L45,11 L45,36 L24,45 L3,38 Z" fill="url(#gblue2)" stroke="#0f2d59" stroke-width="1.8" stroke-linejoin="round"/><path d="M3,12 L24,18 L45,11 M24,18 V45" fill="none" stroke="#0f2d59" stroke-width="1.6"/><path d="M24,18 L45,11 V36 L24,45 Z" fill="#204a87" opacity="0.55"/></svg>
<svg class="abs" style="left:2202.1px;top:136.0px" width="48" height="48" viewBox="0 0 48 48"><g transform="translate(24,25) scale(0.78) translate(-24,-24)"><path d="M3,12 L26,5 L45,11 L45,36 L24,45 L3,38 Z" fill="url(#gblue2)" stroke="#0f2d59" stroke-width="1.8" stroke-linejoin="round"/><path d="M3,12 L24,18 L45,11 M24,18 V45" fill="none" stroke="#0f2d59" stroke-width="1.6"/><path d="M24,18 L45,11 V36 L24,45 Z" fill="#204a87" opacity="0.55"/></g><path d="M6,5 H2 V45 H6 M42,5 H46 V45 H42" fill="none" stroke="#111" stroke-width="1.8"/></svg>
<svg class="abs" style="left:2277.4px;top:144.5px" width="9" height="32" viewBox="0 0 9 32"><rect x="0.0" y="0.0" width="2" height="2" fill="#b0b0b0"/><rect x="6.6" y="0.0" width="2" height="2" fill="#b0b0b0"/><rect x="0.0" y="5.8" width="2" height="2" fill="#b0b0b0"/><rect x="6.6" y="5.8" width="2" height="2" fill="#b0b0b0"/><rect x="0.0" y="11.6" width="2" height="2" fill="#b0b0b0"/><rect x="6.6" y="11.6" width="2" height="2" fill="#b0b0b0"/><rect x="0.0" y="17.4" width="2" height="2" fill="#b0b0b0"/><rect x="6.6" y="17.4" width="2" height="2" fill="#b0b0b0"/><rect x="0.0" y="23.2" width="2" height="2" fill="#b0b0b0"/><rect x="6.6" y="23.2" width="2" height="2" fill="#b0b0b0"/><rect x="0.0" y="29.0" width="2" height="2" fill="#b0b0b0"/><rect x="6.6" y="29.0" width="2" height="2" fill="#b0b0b0"/></svg>
<svg class="abs" style="left:2297.7px;top:138.0px" width="44" height="44" viewBox="0 0 48 48"><path d="M4,16 L14,6 H42 V26 Q42,44 24,46 M12,22 Q22,14 30,18 Q32,24 24,30" fill="none" stroke="#0f2d59" stroke-width="7.5" stroke-linecap="round" stroke-linejoin="round"/><path d="M4,16 L14,6 H42 V26 Q42,44 24,46 M12,22 Q22,14 30,18 Q32,24 24,30" fill="none" stroke="#4f86c6" stroke-width="4" stroke-linecap="round" stroke-linejoin="round"/></svg>
<svg class="abs" style="left:2361.6px;top:138.0px" width="44" height="44" viewBox="0 0 48 48"><path d="M4,16 L14,6 H42 V26 Q42,44 24,46 M12,22 Q22,14 30,18 Q32,24 24,30" fill="none" stroke="#0f2d59" stroke-width="7.5" stroke-linecap="round" stroke-linejoin="round"/><path d="M4,16 L14,6 H42 V26 Q42,44 24,46 M12,22 Q22,14 30,18 Q32,24 24,30" fill="none" stroke="#4f86c6" stroke-width="4" stroke-linecap="round" stroke-linejoin="round"/></svg>
<div class="t " style="left:2469.6px;top:147.2px;font-size:26.00px;color:#333;">»</div>
<svg class="abs" style="left:2507.4px;top:144.5px" width="9" height="32" viewBox="0 0 9 32"><rect x="0.0" y="0.0" width="2" height="2" fill="#b0b0b0"/><rect x="6.6" y="0.0" width="2" height="2" fill="#b0b0b0"/><rect x="0.0" y="5.8" width="2" height="2" fill="#b0b0b0"/><rect x="6.6" y="5.8" width="2" height="2" fill="#b0b0b0"/><rect x="0.0" y="11.6" width="2" height="2" fill="#b0b0b0"/><rect x="6.6" y="11.6" width="2" height="2" fill="#b0b0b0"/><rect x="0.0" y="17.4" width="2" height="2" fill="#b0b0b0"/><rect x="6.6" y="17.4" width="2" height="2" fill="#b0b0b0"/><rect x="0.0" y="23.2" width="2" height="2" fill="#b0b0b0"/><rect x="6.6" y="23.2" width="2" height="2" fill="#b0b0b0"/><rect x="0.0" y="29.0" width="2" height="2" fill="#b0b0b0"/><rect x="6.6" y="29.0" width="2" height="2" fill="#b0b0b0"/></svg>
<svg class="abs" style="left:2527.7px;top:138.0px" width="44" height="44" viewBox="0 0 48 48"><path d="M24,2 L46,26 H34 V46 H14 V26 H2 Z" fill="url(#gblue)" stroke="#0f2d59" stroke-width="1.8" stroke-linejoin="round"/></svg>
<div class="t " style="left:2589.8px;top:147.2px;font-size:26.00px;color:#333;">»</div>
<svg class="abs" style="left:2627.4px;top:144.5px" width="9" height="32" viewBox="0 0 9 32"><rect x="0.0" y="0.0" width="2" height="2" fill="#b0b0b0"/><rect x="6.6" y="0.0" width="2" height="2" fill="#b0b0b0"/><rect x="0.0" y="5.8" width="2" height="2" fill="#b0b0b0"/><rect x="6.6" y="5.8" width="2" height="2" fill="#b0b0b0"/><rect x="0.0" y="11.6" width="2" height="2" fill="#b0b0b0"/><rect x="6.6" y="11.6" width="2" height="2" fill="#b0b0b0"/><rect x="0.0" y="17.4" width="2" height="2" fill="#b0b0b0"/><rect x="6.6" y="17.4" width="2" height="2" fill="#b0b0b0"/><rect x="0.0" y="23.2" width="2" height="2" fill="#b0b0b0"/><rect x="6.6" y="23.2" width="2" height="2" fill="#b0b0b0"/><rect x="0.0" y="29.0" width="2" height="2" fill="#b0b0b0"/><rect x="6.6" y="29.0" width="2" height="2" fill="#b0b0b0"/></svg>
<svg class="abs" style="left:2648.2px;top:138.0px" width="44" height="44" viewBox="0 0 48 48"><rect x="2" y="2" width="12" height="20" fill="url(#gblue)" stroke="#0f2d59" stroke-width="1.6"/><rect x="4.5" y="4.5" width="7" height="15" fill="none" stroke="#204a87" stroke-width="1"/><rect x="18" y="2" width="12" height="20" fill="url(#gblue)" stroke="#0f2d59" stroke-width="1.6"/><rect x="20.5" y="4.5" width="7" height="15" fill="none" stroke="#204a87" stroke-width="1"/><rect x="34" y="2" width="12" height="20" fill="url(#gblue)" stroke="#0f2d59" stroke-width="1.6"/><rect x="36.5" y="4.5" width="7" height="15" fill="none" stroke="#204a87" stroke-width="1"/><rect x="2" y="26" width="12" height="20" fill="url(#gblue)" stroke="#0f2d59" stroke-width="1.6"/><rect x="4.5" y="28.5" width="7" height="15" fill="none" stroke="#204a87" stroke-width="1"/><rect x="18" y="26" width="12" height="20" fill="url(#gblue)" stroke="#0f2d59" stroke-width="1.6"/><rect x="20.5" y="28.5" width="7" height="15" fill="none" stroke="#204a87" stroke-width="1"/><rect x="34" y="26" width="12" height="20" fill="url(#gblue)" stroke="#0f2d59" stroke-width="1.6"/><rect x="36.5" y="28.5" width="7" height="15" fill="none" stroke="#204a87" stroke-width="1"/></svg>
<div class="t " style="left:2710.0px;top:147.2px;font-size:26.00px;color:#333;">»</div>
<div class="abs" style="left:0.0px;top:200.0px;width:390.0px;height:38.0px;background:linear-gradient(#f2f2f2,#ffffff)"></div>
<div class="t " style="left:149.5px;top:210.0px;font-size:22.50px;letter-spacing:0.232px;">BIM</div>
<svg class="abs" style="left:333px;top:206px" width="27" height="25" viewBox="0 0 27 25"><path d="M1,9 V1 H9 M26,9 V1 H18 M1,16 V24 H9 M26,16 V24 H18 M2,2 L10,10 M25,2 L17,10 M2,23 L10,15 M25,23 L17,15" fill="none" stroke="#000" stroke-width="2.6"/></svg>
<svg class="abs" style="left:363px;top:208px" width="22" height="22" viewBox="0 0 22 22"><path d="M3,3 L19,19 M19,3 L3,19" fill="none" stroke="#000" stroke-width="4.6"/></svg>
<div class="abs" style="left:22.0px;top:260.0px;width:346.0px;height:44.0px;box-sizing:border-box;border-top:2px solid #a0a0a0;border-bottom:2px solid #a0a0a0;background:linear-gradient(#ffffff,#f4f4f4 50%,#fbfbfb)"></div>
<div class="abs" style="left:220.0px;top:262.0px;width:2.0px;height:40.0px;background:#a0a0a0"></div>
<div class="t " style="left:25.0px;top:274.0px;font-size:22.50px;letter-spacing:0.351px;">Element</div>
<div class="t " style="left:225.0px;top:274.0px;font-size:22.50px;letter-spacing:-0.158px;">Level</div>
<svg class="abs" style="left:28.0px;top:307.2px" width="32" height="32" viewBox="0 0 48 48"><path d="M3,22 L17,4 L36,3 L46,16 V34 L26,45 L3,41 Z" fill="url(#gdoc)" stroke="#2e3436" stroke-width="1.8" stroke-linejoin="round"/><path d="M26,19 L36,3 L46,16 V34 L26,45 Z" fill="#888a85" opacity="0.55"/><path d="M3,22 L17,4 L26,19 L46,16 M26,19 V45" fill="none" stroke="#2e3436" stroke-width="1.4" stroke-linejoin="round"/><path d="M10,42 V27 H18 V43.5" fill="#fffbe0" stroke="#2e3436" stroke-width="1.6"/><path d="M12.5,42 V30 H15.5 V43" fill="none" stroke="#777" stroke-width="1"/></svg>
<div class="t " style="left:73.0px;top:313.7px;font-size:22.50px;letter-spacing:-0.566px;">Casa ...</div>
<div class="t " style="left:228.4px;top:313.7px;font-size:22.50px;letter-spacing:0.496px;">0,00 mm</div>
<svg class="abs" style="left:64.0px;top:343.2px" width="32" height="32" viewBox="0 0 48 48"><path d="M2,6 H46 V34 L36,42 H2 Z" fill="url(#gdoc)" stroke="#2e3436" stroke-width="1.6" stroke-linejoin="round"/><path d="M36,42 L38,34 H46 Z" fill="#888a85" stroke="#2e3436" stroke-width="1"/><path d="M16,12 H8 V30 H20 V26 Q22,23 26,23 H30 V30 H38 V10 H28 M8,21 H15 M33,10 V22" fill="none" stroke="#2e3436" stroke-width="3"/></svg>
<div class="t " style="left:109.2px;top:349.7px;font-size:22.50px;letter-spacing:0.086px;">Basement</div>
<div class="t " style="left:228.4px;top:349.7px;font-size:22.50px;letter-spacing:0.496px;">0,00 mm</div>
<svg class="abs" style="left:64.0px;top:379.2px" width="32" height="32" viewBox="0 0 48 48"><path d="M2,6 H46 V34 L36,42 H2 Z" fill="url(#gdoc)" stroke="#2e3436" stroke-width="1.6" stroke-linejoin="round"/><path d="M36,42 L38,34 H46 Z" fill="#888a85" stroke="#2e3436" stroke-width="1"/><path d="M16,12 H8 V30 H20 V26 Q22,23 26,23 H30 V30 H38 V10 H28 M8,21 H15 M33,10 V22" fill="none" stroke="#2e3436" stroke-width="3"/></svg>
<div class="t " style="left:109.2px;top:385.7px;font-size:22.50px;letter-spacing:0.097px;">Street ...</div>
<div class="t " style="left:228.4px;top:385.7px;font-size:22.50px;letter-spacing:0.605px;">700,00 mm</div>
<svg class="abs" style="left:64.0px;top:415.2px" width="32" height="32" viewBox="0 0 48 48"><path d="M2,6 H46 V34 L36,42 H2 Z" fill="url(#gdoc)" stroke="#2e3436" stroke-width="1.6" stroke-linejoin="round"/><path d="M36,42 L38,34 H46 Z" fill="#888a85" stroke="#2e3436" stroke-width="1"/><path d="M16,12 H8 V30 H20 V26 Q22,23 26,23 H30 V30 H38 V10 H28 M8,21 H15 M33,10 V22" fill="none" stroke="#2e3436" stroke-width="3"/></svg>
<div class="t " style="left:109.2px;top:421.7px;font-size:22.50px;letter-spacing:0.295px;">Ground ...</div>
<div class="t " style="left:228.4px;top:421.7px;font-size:22.50px;letter-spacing:0.493px;">2229,39 mm</div>
<svg class="abs" style="left:64.0px;top:451.2px" width="32" height="32" viewBox="0 0 48 48"><path d="M2,6 H46 V34 L36,42 H2 Z" fill="url(#gdoc)" stroke="#2e3436" stroke-width="1.6" stroke-linejoin="round"/><path d="M36,42 L38,34 H46 Z" fill="#888a85" stroke="#2e3436" stroke-width="1"/><path d="M16,12 H8 V30 H20 V26 Q22,23 26,23 H30 V30 H38 V10 H28 M8,21 H15 M33,10 V22" fill="none" stroke="#2e3436" stroke-width="3"/></svg>
<div class="t " style="left:109.2px;top:457.7px;font-size:22.50px;letter-spacing:0.190px;">Upper ...</div>
<div class="t " style="left:228.4px;top:457.7px;font-size:22.50px;letter-spacing:0.493px;">4500,00 mm</div>
<svg class="abs" style="left:64.0px;top:487.2px" width="32" height="32" viewBox="0 0 48 48"><path d="M2,6 H46 V34 L36,42 H2 Z" fill="url(#gdoc)" stroke="#2e3436" stroke-width="1.6" stroke-linejoin="round"/><path d="M36,42 L38,34 H46 Z" fill="#888a85" stroke="#2e3436" stroke-width="1"/><path d="M16,12 H8 V30 H20 V26 Q22,23 26,23 H30 V30 H38 V10 H28 M8,21 H15 M33,10 V22" fill="none" stroke="#2e3436" stroke-width="3"/></svg>
<div class="t " style="left:109.2px;top:493.7px;font-size:22.50px;letter-spacing:0.618px;">Roof</div>
<div class="t " style="left:228.4px;top:493.7px;font-size:22.50px;letter-spacing:0.493px;">6749,65 mm</div>
<svg class="abs" style="left:28.0px;top:523.2px" width="32" height="32" viewBox="0 0 48 48"><path d="M3,6 H17 L21,10 H45 V44 H3 Z" fill="#204a87" stroke="#0f2d59" stroke-width="1.6" stroke-linejoin="round"/><path d="M4,14 H44 V43 H4 Z" fill="url(#gblue)" stroke="#0f2d59" stroke-width="1"/></svg>
<div class="t " style="left:73.0px;top:529.7px;font-size:22.50px;letter-spacing:0.296px;">2D Views</div>
<svg class="abs" style="left:64.0px;top:559.2px" width="32" height="32" viewBox="0 0 48 48"><path d="M3,6 H17 L21,10 H45 V44 H3 Z" fill="#204a87" stroke="#0f2d59" stroke-width="1.6" stroke-linejoin="round"/><path d="M4,14 H44 V43 H4 Z" fill="url(#gblue)" stroke="#0f2d59" stroke-width="1"/></svg>
<div class="t " style="left:109.2px;top:565.7px;font-size:22.50px;letter-spacing:0.313px;">2D plan ...</div>
<svg class="abs" style="left:28.0px;top:595.2px" width="32" height="32" viewBox="0 0 48 48"><path d="M3,6 H17 L21,10 H45 V44 H3 Z" fill="#204a87" stroke="#0f2d59" stroke-width="1.6" stroke-linejoin="round"/><path d="M4,14 H44 V43 H4 Z" fill="url(#gblue)" stroke="#0f2d59" stroke-width="1"/></svg>
<div class="t " style="left:73.0px;top:601.7px;font-size:22.50px;letter-spacing:-0.175px;">Sheets</div>
<svg class="abs" style="left:65.0px;top:632.2px" width="30" height="30" viewBox="0 0 48 48"><rect x="2" y="3" width="44" height="38" fill="url(#gsheet)" stroke="#777" stroke-width="1.4"/></svg>
<div class="t " style="left:109.2px;top:637.7px;font-size:22.50px;letter-spacing:-0.088px;">A4 ...</div>
<div class="abs" style="left:22.0px;top:1540.5px;width:345.6px;height:27.0px;box-sizing:border-box;border:2px solid #c8c8c8;background:#e6e6e6"></div>
<div class="abs" style="left:22.0px;top:1540.5px;width:28.0px;height:27.0px;box-sizing:border-box;border:2px solid #c8c8c8;background:linear-gradient(#ffffff,#f0f0f0)"></div>
<div class="abs" style="left:340.0px;top:1540.5px;width:27.6px;height:27.0px;box-sizing:border-box;border:2px solid #c8c8c8;background:linear-gradient(#ffffff,#f0f0f0)"></div>
<div class="abs" style="left:50.0px;top:1540.5px;width:249.0px;height:27.0px;box-sizing:border-box;border:2px solid #c0c0c0;background:linear-gradient(#ffffff,#f3f3f3)"></div>
<svg class="abs" style="left:33px;top:1550px" width="8" height="8" viewBox="0 0 8 8"><path d="M6,0 V8 L1,4 Z" fill="#777"/></svg>
<svg class="abs" style="left:350px;top:1550px" width="8" height="8" viewBox="0 0 8 8"><path d="M2,0 V8 L7,4 Z" fill="#777"/></svg>
<svg class="abs" style="left:415.8px;top:247.0px" width="18" height="10" viewBox="0 0 18 10"><path d="M0,0 H18 L9,9.5 Z" fill="#000"/></svg>
<svg class="abs" style="left:451.0px;top:237.5px" width="30" height="30" viewBox="0 0 48 48"><path d="M8,2 H32 L40,10 V46 H8 Z" fill="url(#gdocv)" stroke="#2e3436" stroke-width="1.6" stroke-linejoin="round"/><path d="M32,2 V10 H40 Z" fill="#babdb6" stroke="#2e3436" stroke-width="1.4" stroke-linejoin="round"/><circle cx="30" cy="19" r="8.5" fill="url(#gredr)" stroke="#600" stroke-width="1"/><path d="M14,24.75 l9.5,-4.75 l9.5,4.75 v10.450000000000001 l-9.5,4.75 l-9.5,-4.75 Z" fill="#3465a4"/><path d="M14,24.75 l9.5,-4.75 l9.5,4.75 l-9.5,4.75 Z" fill="#79a7dc"/><path d="M23.5,29.5 l9.5,-4.75 v10.450000000000001 l-9.5,4.75 Z" fill="#204a87"/><path d="M14,24.7 l9.5,-4.7 l9.5,4.7 v10.5 l-9.5,4.7 l-9.5,-4.7 Z M14,24.7 l9.5,4.7 l9.5,-4.7 M23.5,29.4 v10.5" fill="none" stroke="#0f2d59" stroke-width="1.2" stroke-linejoin="round"/></svg>
<div class="t " style="left:495.0px;top:244.0px;font-size:22.50px;letter-spacing:0.721px;font-weight:bold;text-shadow:-2px -2px 0.5px #fff,-2px -1px 0.5px #fff,-2px 0px 0.5px #fff,-2px 1px 0.5px #fff,-2px 2px 0.5px #fff,-1px -2px 0.5px #fff,-1px -1px 0.5px #fff,-1px 0px 0.5px #fff,-1px 1px 0.5px #fff,-1px 2px 0.5px #fff,0px -2px 0.5px #fff,0px -1px 0.5px #fff,0px 1px 0.5px #fff,0px 2px 0.5px #fff,1px -2px 0.5px #fff,1px -1px 0.5px #fff,1px 0px 0.5px #fff,1px 1px 0.5px #fff,1px 2px 0.5px #fff,2px -2px 0.5px #fff,2px -1px 0.5px #fff,2px 0px 0.5px #fff,2px 1px 0.5px #fff,2px 2px 0.5px #fff;">BIMExample</div>
<svg class="abs" style="left:455.8px;top:283.0px" width="18" height="10" viewBox="0 0 18 10"><path d="M0,0 H18 L9,9.5 Z" fill="#000"/></svg>
<svg class="abs" style="left:493.3px;top:275.5px" width="26" height="26" viewBox="0 0 48 48"><path d="M3,24 Q24,2 45,24 Q24,46 3,24 Z" fill="#fff" stroke="#000" stroke-width="4.2" stroke-linejoin="round"/><circle cx="24" cy="24" r="9.5" fill="#000"/><circle cx="20" cy="20" r="3.4" fill="#fff"/></svg>
<svg class="abs" style="left:528.5px;top:273.0px" width="31" height="31" viewBox="0 0 48 48"><path d="M3,34 L12,28 C18,26 20,8 30,4 L46,10 L44,28 L22,46 Z" fill="url(#gdoc)" stroke="#2e3436" stroke-width="1.8" stroke-linejoin="round"/><path d="M3,34 L22,40 V46 M22,40 C28,36 30,18 46,10" fill="none" stroke="#2e3436" stroke-width="1.4"/><path d="M22,40 C28,36 30,18 46,10 L44,28 L22,46 Z" fill="#888a85" opacity="0.45"/></svg>
<div class="t " style="left:572.6px;top:280.0px;font-size:22.50px;letter-spacing:-0.193px;text-shadow:-2px -2px 0.5px #fff,-2px -1px 0.5px #fff,-2px 0px 0.5px #fff,-2px 1px 0.5px #fff,-2px 2px 0.5px #fff,-1px -2px 0.5px #fff,-1px -1px 0.5px #fff,-1px 0px 0.5px #fff,-1px 1px 0.5px #fff,-1px 2px 0.5px #fff,0px -2px 0.5px #fff,0px -1px 0.5px #fff,0px 1px 0.5px #fff,0px 2px 0.5px #fff,1px -2px 0.5px #fff,1px -1px 0.5px #fff,1px 0px 0.5px #fff,1px 1px 0.5px #fff,1px 2px 0.5px #fff,2px -2px 0.5px #fff,2px -1px 0.5px #fff,2px 0px 0.5px #fff,2px 1px 0.5px #fff,2px 2px 0.5px #fff;">Site</div>
<svg class="abs" style="left:495.8px;top:319.0px" width="18" height="10" viewBox="0 0 18 10"><path d="M0,0 H18 L9,9.5 Z" fill="#000"/></svg>
<svg class="abs" style="left:533.3px;top:311.5px" width="26" height="26" viewBox="0 0 48 48"><path d="M3,24 Q24,2 45,24 Q24,46 3,24 Z" fill="#fff" stroke="#000" stroke-width="4.2" stroke-linejoin="round"/><circle cx="24" cy="24" r="9.5" fill="#000"/><circle cx="20" cy="20" r="3.4" fill="#fff"/></svg>
<svg class="abs" style="left:568.5px;top:309.0px" width="31" height="31" viewBox="0 0 48 48"><path d="M3,22 L17,4 L36,3 L46,16 V34 L26,45 L3,41 Z" fill="url(#gdoc)" stroke="#2e3436" stroke-width="1.8" stroke-linejoin="round"/><path d="M26,19 L36,3 L46,16 V34 L26,45 Z" fill="#888a85" opacity="0.55"/><path d="M3,22 L17,4 L26,19 L46,16 M26,19 V45" fill="none" stroke="#2e3436" stroke-width="1.4" stroke-linejoin="round"/><path d="M10,42 V27 H18 V43.5" fill="#fffbe0" stroke="#2e3436" stroke-width="1.6"/><path d="M12.5,42 V30 H15.5 V43" fill="none" stroke="#777" stroke-width="1"/></svg>
<div class="t " style="left:612.6px;top:316.0px;font-size:22.50px;letter-spacing:0.228px;text-shadow:-2px -2px 0.5px #fff,-2px -1px 0.5px #fff,-2px 0px 0.5px #fff,-2px 1px 0.5px #fff,-2px 2px 0.5px #fff,-1px -2px 0.5px #fff,-1px -1px 0.5px #fff,-1px 0px 0.5px #fff,-1px 1px 0.5px #fff,-1px 2px 0.5px #fff,0px -2px 0.5px #fff,0px -1px 0.5px #fff,0px 1px 0.5px #fff,0px 2px 0.5px #fff,1px -2px 0.5px #fff,1px -1px 0.5px #fff,1px 0px 0.5px #fff,1px 1px 0.5px #fff,1px 2px 0.5px #fff,2px -2px 0.5px #fff,2px -1px 0.5px #fff,2px 0px 0.5px #fff,2px 1px 0.5px #fff,2px 2px 0.5px #fff;">Casa Martirana</div>
<svg class="abs" style="left:535.8px;top:355.0px" width="18" height="10" viewBox="0 0 18 10"><path d="M0,0 H18 L9,9.5 Z" fill="#000"/></svg>
<svg class="abs" style="left:573.3px;top:347.5px" width="26" height="26" viewBox="0 0 48 48"><path d="M3,24 Q24,2 45,24 Q24,46 3,24 Z" fill="#fff" stroke="#000" stroke-width="4.2" stroke-linejoin="round"/><circle cx="24" cy="24" r="9.5" fill="#000"/><circle cx="20" cy="20" r="3.4" fill="#fff"/></svg>
<svg class="abs" style="left:608.5px;top:345.0px" width="31" height="31" viewBox="0 0 48 48"><path d="M2,6 H46 V34 L36,42 H2 Z" fill="url(#gdoc)" stroke="#2e3436" stroke-width="1.6" stroke-linejoin="round"/><path d="M36,42 L38,34 H46 Z" fill="#888a85" stroke="#2e3436" stroke-width="1"/><path d="M16,12 H8 V30 H20 V26 Q22,23 26,23 H30 V30 H38 V10 H28 M8,21 H15 M33,10 V22" fill="none" stroke="#2e3436" stroke-width="3"/></svg>
<div class="t " style="left:652.6px;top:352.0px;font-size:22.50px;letter-spacing:0.911px;text-shadow:-2px -2px 0.5px #fff,-2px -1px 0.5px #fff,-2px 0px 0.5px #fff,-2px 1px 0.5px #fff,-2px 2px 0.5px #fff,-1px -2px 0.5px #fff,-1px -1px 0.5px #fff,-1px 0px 0.5px #fff,-1px 1px 0.5px #fff,-1px 2px 0.5px #fff,0px -2px 0.5px #fff,0px -1px 0.5px #fff,0px 1px 0.5px #fff,0px 2px 0.5px #fff,1px -2px 0.5px #fff,1px -1px 0.5px #fff,1px 0px 0.5px #fff,1px 1px 0.5px #fff,1px 2px 0.5px #fff,2px -2px 0.5px #fff,2px -1px 0.5px #fff,2px 0px 0.5px #fff,2px 1px 0.5px #fff,2px 2px 0.5px #fff;">Ground floor</div>
<svg class="abs" style="left:575.8px;top:391.0px" width="18" height="10" viewBox="0 0 18 10"><path d="M0,0 H18 L9,9.5 Z" fill="#000"/></svg>
<svg class="abs" style="left:613.3px;top:383.5px" width="26" height="26" viewBox="0 0 48 48"><path d="M3,24 Q24,2 45,24 Q24,46 3,24 Z" fill="#fff" stroke="#000" stroke-width="4.2" stroke-linejoin="round"/><circle cx="24" cy="24" r="9.5" fill="#000"/><circle cx="20" cy="20" r="3.4" fill="#fff"/></svg>
<svg class="abs" style="left:648.5px;top:381.0px" width="31" height="31" viewBox="0 0 48 48"><path d="M3,6 H17 L21,10 H45 V44 H3 Z" fill="#204a87" stroke="#0f2d59" stroke-width="1.6" stroke-linejoin="round"/><path d="M4,14 H44 V43 H4 Z" fill="url(#gblue)" stroke="#0f2d59" stroke-width="1"/></svg>
<div class="t " style="left:692.6px;top:388.0px;font-size:22.50px;letter-spacing:0.167px;text-shadow:-2px -2px 0.5px #fff,-2px -1px 0.5px #fff,-2px 0px 0.5px #fff,-2px 1px 0.5px #fff,-2px 2px 0.5px #fff,-1px -2px 0.5px #fff,-1px -1px 0.5px #fff,-1px 0px 0.5px #fff,-1px 1px 0.5px #fff,-1px 2px 0.5px #fff,0px -2px 0.5px #fff,0px -1px 0.5px #fff,0px 1px 0.5px #fff,0px 2px 0.5px #fff,1px -2px 0.5px #fff,1px -1px 0.5px #fff,1px 0px 0.5px #fff,1px 1px 0.5px #fff,1px 2px 0.5px #fff,2px -2px 0.5px #fff,2px -1px 0.5px #fff,2px 0px 0.5px #fff,2px 1px 0.5px #fff,2px 2px 0.5px #fff;">Walls</div>
<svg class="abs" style="left:618.8px;top:423.0px" width="10" height="18" viewBox="0 0 10 18"><path d="M0,0 V18 L9.5,9 Z" fill="#000"/></svg>
<svg class="abs" style="left:653.3px;top:419.5px" width="26" height="26" viewBox="0 0 48 48"><path d="M3,24 Q24,2 45,24 Q24,46 3,24 Z" fill="#fff" stroke="#000" stroke-width="4.2" stroke-linejoin="round"/><circle cx="24" cy="24" r="9.5" fill="#000"/><circle cx="20" cy="20" r="3.4" fill="#fff"/></svg>
<svg class="abs" style="left:688.5px;top:417.0px" width="31" height="31" viewBox="0 0 48 48"><path d="M2,10 L14,4 L46,16 V38 L36,46 L2,32 Z" fill="#d3d7cf" stroke="#555753" stroke-width="1.6" stroke-linejoin="round"/><path d="M2,10 L34,23 L46,16 M34,23 V46 M2,17 L34,30.5 L46,23.5 M2,24.5 L34,38 L46,31 M14,4 L24,8 M18,16.5 V23.5 M10,20.5 V28 M26,27 V34.5 M18,31 V38.5 M8,7 L19,11.5 M24,8 L12,14 M40,26.5 V34" fill="none" stroke="#555753" stroke-width="1.3"/></svg>
<div class="t " style="left:732.6px;top:424.0px;font-size:22.50px;letter-spacing:0.470px;text-shadow:-2px -2px 0.5px #fff,-2px -1px 0.5px #fff,-2px 0px 0.5px #fff,-2px 1px 0.5px #fff,-2px 2px 0.5px #fff,-1px -2px 0.5px #fff,-1px -1px 0.5px #fff,-1px 0px 0.5px #fff,-1px 1px 0.5px #fff,-1px 2px 0.5px #fff,0px -2px 0.5px #fff,0px -1px 0.5px #fff,0px 1px 0.5px #fff,0px 2px 0.5px #fff,1px -2px 0.5px #fff,1px -1px 0.5px #fff,1px 0px 0.5px #fff,1px 1px 0.5px #fff,1px 2px 0.5px #fff,2px -2px 0.5px #fff,2px -1px 0.5px #fff,2px 0px 0.5px #fff,2px 1px 0.5px #fff,2px 2px 0.5px #fff;">Inner wall</div>
<svg class="abs" style="left:618.8px;top:459.0px" width="10" height="18" viewBox="0 0 10 18"><path d="M0,0 V18 L9.5,9 Z" fill="#000"/></svg>
<svg class="abs" style="left:653.3px;top:455.5px" width="26" height="26" viewBox="0 0 48 48"><path d="M3,24 Q24,2 45,24 Q24,46 3,24 Z" fill="#fff" stroke="#000" stroke-width="4.2" stroke-linejoin="round"/><circle cx="24" cy="24" r="9.5" fill="#000"/><circle cx="20" cy="20" r="3.4" fill="#fff"/></svg>
<svg class="abs" style="left:688.5px;top:453.0px" width="31" height="31" viewBox="0 0 48 48"><path d="M2,10 L14,4 L46,16 V38 L36,46 L2,32 Z" fill="#d3d7cf" stroke="#555753" stroke-width="1.6" stroke-linejoin="round"/><path d="M2,10 L34,23 L46,16 M34,23 V46 M2,17 L34,30.5 L46,23.5 M2,24.5 L34,38 L46,31 M14,4 L24,8 M18,16.5 V23.5 M10,20.5 V28 M26,27 V34.5 M18,31 V38.5 M8,7 L19,11.5 M24,8 L12,14 M40,26.5 V34" fill="none" stroke="#555753" stroke-width="1.3"/></svg>
<div class="t " style="left:732.6px;top:460.0px;font-size:22.50px;letter-spacing:0.470px;text-shadow:-2px -2px 0.5px #fff,-2px -1px 0.5px #fff,-2px 0px 0.5px #fff,-2px 1px 0.5px #fff,-2px 2px 0.5px #fff,-1px -2px 0.5px #fff,-1px -1px 0.5px #fff,-1px 0px 0.5px #fff,-1px 1px 0.5px #fff,-1px 2px 0.5px #fff,0px -2px 0.5px #fff,0px -1px 0.5px #fff,0px 1px 0.5px #fff,0px 2px 0.5px #fff,1px -2px 0.5px #fff,1px -1px 0.5px #fff,1px 0px 0.5px #fff,1px 1px 0.5px #fff,1px 2px 0.5px #fff,2px -2px 0.5px #fff,2px -1px 0.5px #fff,2px 0px 0.5px #fff,2px 1px 0.5px #fff,2px 2px 0.5px #fff;">Inner wall</div>
<svg class="abs" style="left:618.8px;top:495.0px" width="10" height="18" viewBox="0 0 10 18"><path d="M0,0 V18 L9.5,9 Z" fill="#000"/></svg>
<svg class="abs" style="left:653.3px;top:491.5px" width="26" height="26" viewBox="0 0 48 48"><path d="M3,24 Q24,2 45,24 Q24,46 3,24 Z" fill="#fff" stroke="#000" stroke-width="4.2" stroke-linejoin="round"/><circle cx="24" cy="24" r="9.5" fill="#000"/><circle cx="20" cy="20" r="3.4" fill="#fff"/></svg>
<svg class="abs" style="left:688.5px;top:489.0px" width="31" height="31" viewBox="0 0 48 48"><path d="M2,10 L14,4 L46,16 V38 L36,46 L2,32 Z" fill="#d3d7cf" stroke="#555753" stroke-width="1.6" stroke-linejoin="round"/><path d="M2,10 L34,23 L46,16 M34,23 V46 M2,17 L34,30.5 L46,23.5 M2,24.5 L34,38 L46,31 M14,4 L24,8 M18,16.5 V23.5 M10,20.5 V28 M26,27 V34.5 M18,31 V38.5 M8,7 L19,11.5 M24,8 L12,14 M40,26.5 V34" fill="none" stroke="#555753" stroke-width="1.3"/></svg>
<div class="t " style="left:732.6px;top:496.0px;font-size:22.50px;letter-spacing:0.319px;text-shadow:-2px -2px 0.5px #fff,-2px -1px 0.5px #fff,-2px 0px 0.5px #fff,-2px 1px 0.5px #fff,-2px 2px 0.5px #fff,-1px -2px 0.5px #fff,-1px -1px 0.5px #fff,-1px 0px 0.5px #fff,-1px 1px 0.5px #fff,-1px 2px 0.5px #fff,0px -2px 0.5px #fff,0px -1px 0.5px #fff,0px 1px 0.5px #fff,0px 2px 0.5px #fff,1px -2px 0.5px #fff,1px -1px 0.5px #fff,1px 0px 0.5px #fff,1px 1px 0.5px #fff,1px 2px 0.5px #fff,2px -2px 0.5px #fff,2px -1px 0.5px #fff,2px 0px 0.5px #fff,2px 1px 0.5px #fff,2px 2px 0.5px #fff;">Stone wall</div>
<svg class="abs" style="left:618.8px;top:531.0px" width="10" height="18" viewBox="0 0 10 18"><path d="M0,0 V18 L9.5,9 Z" fill="#000"/></svg>
<svg class="abs" style="left:653.3px;top:527.5px" width="26" height="26" viewBox="0 0 48 48"><path d="M3,24 Q24,2 45,24 Q24,46 3,24 Z" fill="#fff" stroke="#000" stroke-width="4.2" stroke-linejoin="round"/><circle cx="24" cy="24" r="9.5" fill="#000"/><circle cx="20" cy="20" r="3.4" fill="#fff"/></svg>
<svg class="abs" style="left:688.5px;top:525.0px" width="31" height="31" viewBox="0 0 48 48"><path d="M2,10 L14,4 L46,16 V38 L36,46 L2,32 Z" fill="#d3d7cf" stroke="#555753" stroke-width="1.6" stroke-linejoin="round"/><path d="M2,10 L34,23 L46,16 M34,23 V46 M2,17 L34,30.5 L46,23.5 M2,24.5 L34,38 L46,31 M14,4 L24,8 M18,16.5 V23.5 M10,20.5 V28 M26,27 V34.5 M18,31 V38.5 M8,7 L19,11.5 M24,8 L12,14 M40,26.5 V34" fill="none" stroke="#555753" stroke-width="1.3"/></svg>
<div class="t " style="left:732.6px;top:532.0px;font-size:22.50px;letter-spacing:0.219px;text-shadow:-2px -2px 0.5px #fff,-2px -1px 0.5px #fff,-2px 0px 0.5px #fff,-2px 1px 0.5px #fff,-2px 2px 0.5px #fff,-1px -2px 0.5px #fff,-1px -1px 0.5px #fff,-1px 0px 0.5px #fff,-1px 1px 0.5px #fff,-1px 2px 0.5px #fff,0px -2px 0.5px #fff,0px -1px 0.5px #fff,0px 1px 0.5px #fff,0px 2px 0.5px #fff,1px -2px 0.5px #fff,1px -1px 0.5px #fff,1px 0px 0.5px #fff,1px 1px 0.5px #fff,1px 2px 0.5px #fff,2px -2px 0.5px #fff,2px -1px 0.5px #fff,2px 0px 0.5px #fff,2px 1px 0.5px #fff,2px 2px 0.5px #fff;">Ramp wall</div>
<svg class="abs" style="left:618.8px;top:567.0px" width="10" height="18" viewBox="0 0 10 18"><path d="M0,0 V18 L9.5,9 Z" fill="#000"/></svg>
<svg class="abs" style="left:653.3px;top:563.5px" width="26" height="26" viewBox="0 0 48 48"><path d="M3,24 Q24,2 45,24 Q24,46 3,24 Z" fill="#fff" stroke="#000" stroke-width="4.2" stroke-linejoin="round"/><circle cx="24" cy="24" r="9.5" fill="#000"/><circle cx="20" cy="20" r="3.4" fill="#fff"/></svg>
<svg class="abs" style="left:688.5px;top:561.0px" width="31" height="31" viewBox="0 0 48 48"><path d="M2,10 L14,4 L46,16 V38 L36,46 L2,32 Z" fill="#d3d7cf" stroke="#555753" stroke-width="1.6" stroke-linejoin="round"/><path d="M2,10 L34,23 L46,16 M34,23 V46 M2,17 L34,30.5 L46,23.5 M2,24.5 L34,38 L46,31 M14,4 L24,8 M18,16.5 V23.5 M10,20.5 V28 M26,27 V34.5 M18,31 V38.5 M8,7 L19,11.5 M24,8 L12,14 M40,26.5 V34" fill="none" stroke="#555753" stroke-width="1.3"/></svg>
<div class="t " style="left:732.6px;top:568.0px;font-size:22.50px;letter-spacing:0.219px;text-shadow:-2px -2px 0.5px #fff,-2px -1px 0.5px #fff,-2px 0px 0.5px #fff,-2px 1px 0.5px #fff,-2px 2px 0.5px #fff,-1px -2px 0.5px #fff,-1px -1px 0.5px #fff,-1px 0px 0.5px #fff,-1px 1px 0.5px #fff,-1px 2px 0.5px #fff,0px -2px 0.5px #fff,0px -1px 0.5px #fff,0px 1px 0.5px #fff,0px 2px 0.5px #fff,1px -2px 0.5px #fff,1px -1px 0.5px #fff,1px 0px 0.5px #fff,1px 1px 0.5px #fff,1px 2px 0.5px #fff,2px -2px 0.5px #fff,2px -1px 0.5px #fff,2px 0px 0.5px #fff,2px 1px 0.5px #fff,2px 2px 0.5px #fff;">Ramp wall</div>
<svg class="abs" style="left:618.8px;top:603.0px" width="10" height="18" viewBox="0 0 10 18"><path d="M0,0 V18 L9.5,9 Z" fill="#000"/></svg>
<svg class="abs" style="left:653.3px;top:599.5px" width="26" height="26" viewBox="0 0 48 48"><path d="M3,24 Q24,2 45,24 Q24,46 3,24 Z" fill="#fff" stroke="#000" stroke-width="4.2" stroke-linejoin="round"/><circle cx="24" cy="24" r="9.5" fill="#000"/><circle cx="20" cy="20" r="3.4" fill="#fff"/></svg>
<svg class="abs" style="left:688.5px;top:597.0px" width="31" height="31" viewBox="0 0 48 48"><path d="M2,10 L14,4 L46,16 V38 L36,46 L2,32 Z" fill="#d3d7cf" stroke="#555753" stroke-width="1.6" stroke-linejoin="round"/><path d="M2,10 L34,23 L46,16 M34,23 V46 M2,17 L34,30.5 L46,23.5 M2,24.5 L34,38 L46,31 M14,4 L24,8 M18,16.5 V23.5 M10,20.5 V28 M26,27 V34.5 M18,31 V38.5 M8,7 L19,11.5 M24,8 L12,14 M40,26.5 V34" fill="none" stroke="#555753" stroke-width="1.3"/></svg>
<div class="t " style="left:732.6px;top:604.0px;font-size:22.50px;letter-spacing:0.219px;text-shadow:-2px -2px 0.5px #fff,-2px -1px 0.5px #fff,-2px 0px 0.5px #fff,-2px 1px 0.5px #fff,-2px 2px 0.5px #fff,-1px -2px 0.5px #fff,-1px -1px 0.5px #fff,-1px 0px 0.5px #fff,-1px 1px 0.5px #fff,-1px 2px 0.5px #fff,0px -2px 0.5px #fff,0px -1px 0.5px #fff,0px 1px 0.5px #fff,0px 2px 0.5px #fff,1px -2px 0.5px #fff,1px -1px 0.5px #fff,1px 0px 0.5px #fff,1px 1px 0.5px #fff,1px 2px 0.5px #fff,2px -2px 0.5px #fff,2px -1px 0.5px #fff,2px 0px 0.5px #fff,2px 1px 0.5px #fff,2px 2px 0.5px #fff;">Ramp wall</div>
<svg class="abs" style="left:578.8px;top:639.0px" width="10" height="18" viewBox="0 0 10 18"><path d="M0,0 V18 L9.5,9 Z" fill="#000"/></svg>
<svg class="abs" style="left:613.3px;top:635.5px" width="26" height="26" viewBox="0 0 48 48"><path d="M3,24 Q24,2 45,24 Q24,46 3,24 Z" fill="#fff" stroke="#000" stroke-width="4.2" stroke-linejoin="round"/><circle cx="24" cy="24" r="9.5" fill="#000"/><circle cx="20" cy="20" r="3.4" fill="#fff"/></svg>
<svg class="abs" style="left:648.5px;top:633.0px" width="31" height="31" viewBox="0 0 48 48"><path d="M3,6 H17 L21,10 H45 V44 H3 Z" fill="#204a87" stroke="#0f2d59" stroke-width="1.6" stroke-linejoin="round"/><path d="M4,14 H44 V43 H4 Z" fill="url(#gblue)" stroke="#0f2d59" stroke-width="1"/></svg>
<div class="t " style="left:692.6px;top:640.0px;font-size:22.50px;letter-spacing:-0.457px;text-shadow:-2px -2px 0.5px #fff,-2px -1px 0.5px #fff,-2px 0px 0.5px #fff,-2px 1px 0.5px #fff,-2px 2px 0.5px #fff,-1px -2px 0.5px #fff,-1px -1px 0.5px #fff,-1px 0px 0.5px #fff,-1px 1px 0.5px #fff,-1px 2px 0.5px #fff,0px -2px 0.5px #fff,0px -1px 0.5px #fff,0px 1px 0.5px #fff,0px 2px 0.5px #fff,1px -2px 0.5px #fff,1px -1px 0.5px #fff,1px 0px 0.5px #fff,1px 1px 0.5px #fff,1px 2px 0.5px #fff,2px -2px 0.5px #fff,2px -1px 0.5px #fff,2px 0px 0.5px #fff,2px 1px 0.5px #fff,2px 2px 0.5px #fff;">Slabs</div>
<svg class="abs" style="left:578.8px;top:675.0px" width="10" height="18" viewBox="0 0 10 18"><path d="M0,0 V18 L9.5,9 Z" fill="#000"/></svg>
<svg class="abs" style="left:613.3px;top:671.5px" width="26" height="26" viewBox="0 0 48 48"><path d="M3,24 Q24,2 45,24 Q24,46 3,24 Z" fill="#fff" stroke="#000" stroke-width="4.2" stroke-linejoin="round"/><circle cx="24" cy="24" r="9.5" fill="#000"/><circle cx="20" cy="20" r="3.4" fill="#fff"/></svg>
<svg class="abs" style="left:648.5px;top:669.0px" width="31" height="31" viewBox="0 0 48 48"><path d="M3,6 H17 L21,10 H45 V44 H3 Z" fill="#204a87" stroke="#0f2d59" stroke-width="1.6" stroke-linejoin="round"/><path d="M4,14 H44 V43 H4 Z" fill="url(#gblue)" stroke="#0f2d59" stroke-width="1"/></svg>
<div class="t " style="left:692.6px;top:676.0px;font-size:22.50px;letter-spacing:-0.606px;text-shadow:-2px -2px 0.5px #fff,-2px -1px 0.5px #fff,-2px 0px 0.5px #fff,-2px 1px 0.5px #fff,-2px 2px 0.5px #fff,-1px -2px 0.5px #fff,-1px -1px 0.5px #fff,-1px 0px 0.5px #fff,-1px 1px 0.5px #fff,-1px 2px 0.5px #fff,0px -2px 0.5px #fff,0px -1px 0.5px #fff,0px 1px 0.5px #fff,0px 2px 0.5px #fff,1px -2px 0.5px #fff,1px -1px 0.5px #fff,1px 0px 0.5px #fff,1px 1px 0.5px #fff,1px 2px 0.5px #fff,2px -2px 0.5px #fff,2px -1px 0.5px #fff,2px 0px 0.5px #fff,2px 1px 0.5px #fff,2px 2px 0.5px #fff;">Beams</div>
<svg class="abs" style="left:578.8px;top:711.0px" width="10" height="18" viewBox="0 0 10 18"><path d="M0,0 V18 L9.5,9 Z" fill="#000"/></svg>
<svg class="abs" style="left:613.3px;top:707.5px" width="26" height="26" viewBox="0 0 48 48"><path d="M3,24 Q24,2 45,24 Q24,46 3,24 Z" fill="#fff" stroke="#000" stroke-width="4.2" stroke-linejoin="round"/><circle cx="24" cy="24" r="9.5" fill="#000"/><circle cx="20" cy="20" r="3.4" fill="#fff"/></svg>
<svg class="abs" style="left:648.5px;top:705.0px" width="31" height="31" viewBox="0 0 48 48"><path d="M3,6 H17 L21,10 H45 V44 H3 Z" fill="#204a87" stroke="#0f2d59" stroke-width="1.6" stroke-linejoin="round"/><path d="M4,14 H44 V43 H4 Z" fill="url(#gblue)" stroke="#0f2d59" stroke-width="1"/></svg>
<div class="t " style="left:692.6px;top:712.0px;font-size:22.50px;letter-spacing:0.675px;text-shadow:-2px -2px 0.5px #fff,-2px -1px 0.5px #fff,-2px 0px 0.5px #fff,-2px 1px 0.5px #fff,-2px 2px 0.5px #fff,-1px -2px 0.5px #fff,-1px -1px 0.5px #fff,-1px 0px 0.5px #fff,-1px 1px 0.5px #fff,-1px 2px 0.5px #fff,0px -2px 0.5px #fff,0px -1px 0.5px #fff,0px 1px 0.5px #fff,0px 2px 0.5px #fff,1px -2px 0.5px #fff,1px -1px 0.5px #fff,1px 0px 0.5px #fff,1px 1px 0.5px #fff,1px 2px 0.5px #fff,2px -2px 0.5px #fff,2px -1px 0.5px #fff,2px 0px 0.5px #fff,2px 1px 0.5px #fff,2px 2px 0.5px #fff;">Windows</div>
<svg class="abs" style="left:578.8px;top:747.0px" width="10" height="18" viewBox="0 0 10 18"><path d="M0,0 V18 L9.5,9 Z" fill="#000"/></svg>
<svg class="abs" style="left:613.3px;top:743.5px" width="26" height="26" viewBox="0 0 48 48"><path d="M3,24 Q24,2 45,24 Q24,46 3,24 Z" fill="#fff" stroke="#000" stroke-width="4.2" stroke-linejoin="round"/><circle cx="24" cy="24" r="9.5" fill="#000"/><circle cx="20" cy="20" r="3.4" fill="#fff"/></svg>
<svg class="abs" style="left:648.5px;top:741.0px" width="31" height="31" viewBox="0 0 48 48"><path d="M3,6 H17 L21,10 H45 V44 H3 Z" fill="#204a87" stroke="#0f2d59" stroke-width="1.6" stroke-linejoin="round"/><path d="M4,14 H44 V43 H4 Z" fill="url(#gblue)" stroke="#0f2d59" stroke-width="1"/></svg>
<div class="t " style="left:692.6px;top:748.0px;font-size:22.50px;letter-spacing:-0.253px;text-shadow:-2px -2px 0.5px #fff,-2px -1px 0.5px #fff,-2px 0px 0.5px #fff,-2px 1px 0.5px #fff,-2px 2px 0.5px #fff,-1px -2px 0.5px #fff,-1px -1px 0.5px #fff,-1px 0px 0.5px #fff,-1px 1px 0.5px #fff,-1px 2px 0.5px #fff,0px -2px 0.5px #fff,0px -1px 0.5px #fff,0px 1px 0.5px #fff,0px 2px 0.5px #fff,1px -2px 0.5px #fff,1px -1px 0.5px #fff,1px 0px 0.5px #fff,1px 1px 0.5px #fff,1px 2px 0.5px #fff,2px -2px 0.5px #fff,2px -1px 0.5px #fff,2px 0px 0.5px #fff,2px 1px 0.5px #fff,2px 2px 0.5px #fff;">Stairs</div>
<svg class="abs" style="left:538.8px;top:783.0px" width="10" height="18" viewBox="0 0 10 18"><path d="M0,0 V18 L9.5,9 Z" fill="#000"/></svg>
<svg class="abs" style="left:573.3px;top:779.5px" width="26" height="26" viewBox="0 0 48 48"><path d="M3,24 Q24,2 45,24 Q24,46 3,24 Z" fill="#fff" stroke="#000" stroke-width="4.2" stroke-linejoin="round"/><circle cx="24" cy="24" r="9.5" fill="#000"/><circle cx="20" cy="20" r="3.4" fill="#fff"/></svg>
<svg class="abs" style="left:608.5px;top:777.0px" width="31" height="31" viewBox="0 0 48 48"><path d="M2,6 H46 V34 L36,42 H2 Z" fill="url(#gdoc)" stroke="#2e3436" stroke-width="1.6" stroke-linejoin="round"/><path d="M36,42 L38,34 H46 Z" fill="#888a85" stroke="#2e3436" stroke-width="1"/><path d="M16,12 H8 V30 H20 V26 Q22,23 26,23 H30 V30 H38 V10 H28 M8,21 H15 M33,10 V22" fill="none" stroke="#2e3436" stroke-width="3"/></svg>
<div class="t " style="left:652.6px;top:784.0px;font-size:22.50px;letter-spacing:0.881px;text-shadow:-2px -2px 0.5px #fff,-2px -1px 0.5px #fff,-2px 0px 0.5px #fff,-2px 1px 0.5px #fff,-2px 2px 0.5px #fff,-1px -2px 0.5px #fff,-1px -1px 0.5px #fff,-1px 0px 0.5px #fff,-1px 1px 0.5px #fff,-1px 2px 0.5px #fff,0px -2px 0.5px #fff,0px -1px 0.5px #fff,0px 1px 0.5px #fff,0px 2px 0.5px #fff,1px -2px 0.5px #fff,1px -1px 0.5px #fff,1px 0px 0.5px #fff,1px 1px 0.5px #fff,1px 2px 0.5px #fff,2px -2px 0.5px #fff,2px -1px 0.5px #fff,2px 0px 0.5px #fff,2px 1px 0.5px #fff,2px 2px 0.5px #fff;">Upper floor</div>
<svg class="abs" style="left:538.8px;top:819.0px" width="10" height="18" viewBox="0 0 10 18"><path d="M0,0 V18 L9.5,9 Z" fill="#000"/></svg>
<svg class="abs" style="left:573.3px;top:815.5px" width="26" height="26" viewBox="0 0 48 48"><path d="M3,24 Q24,2 45,24 Q24,46 3,24 Z" fill="#fff" stroke="#000" stroke-width="4.2" stroke-linejoin="round"/><circle cx="24" cy="24" r="9.5" fill="#000"/><circle cx="20" cy="20" r="3.4" fill="#fff"/></svg>
<svg class="abs" style="left:608.5px;top:813.0px" width="31" height="31" viewBox="0 0 48 48"><path d="M2,6 H46 V34 L36,42 H2 Z" fill="url(#gdoc)" stroke="#2e3436" stroke-width="1.6" stroke-linejoin="round"/><path d="M36,42 L38,34 H46 Z" fill="#888a85" stroke="#2e3436" stroke-width="1"/><path d="M16,12 H8 V30 H20 V26 Q22,23 26,23 H30 V30 H38 V10 H28 M8,21 H15 M33,10 V22" fill="none" stroke="#2e3436" stroke-width="3"/></svg>
<div class="t " style="left:652.6px;top:820.0px;font-size:22.50px;letter-spacing:0.287px;text-shadow:-2px -2px 0.5px #fff,-2px -1px 0.5px #fff,-2px 0px 0.5px #fff,-2px 1px 0.5px #fff,-2px 2px 0.5px #fff,-1px -2px 0.5px #fff,-1px -1px 0.5px #fff,-1px 0px 0.5px #fff,-1px 1px 0.5px #fff,-1px 2px 0.5px #fff,0px -2px 0.5px #fff,0px -1px 0.5px #fff,0px 1px 0.5px #fff,0px 2px 0.5px #fff,1px -2px 0.5px #fff,1px -1px 0.5px #fff,1px 0px 0.5px #fff,1px 1px 0.5px #fff,1px 2px 0.5px #fff,2px -2px 0.5px #fff,2px -1px 0.5px #fff,2px 0px 0.5px #fff,2px 1px 0.5px #fff,2px 2px 0.5px #fff;">Street level</div>
<svg class="abs" style="left:538.8px;top:855.0px" width="10" height="18" viewBox="0 0 10 18"><path d="M0,0 V18 L9.5,9 Z" fill="#000"/></svg>
<svg class="abs" style="left:573.3px;top:851.5px" width="26" height="26" viewBox="0 0 48 48"><path d="M3,24 Q24,2 45,24 Q24,46 3,24 Z" fill="#fff" stroke="#000" stroke-width="4.2" stroke-linejoin="round"/><circle cx="24" cy="24" r="9.5" fill="#000"/><circle cx="20" cy="20" r="3.4" fill="#fff"/></svg>
<svg class="abs" style="left:608.5px;top:849.0px" width="31" height="31" viewBox="0 0 48 48"><path d="M2,6 H46 V34 L36,42 H2 Z" fill="url(#gdoc)" stroke="#2e3436" stroke-width="1.6" stroke-linejoin="round"/><path d="M36,42 L38,34 H46 Z" fill="#888a85" stroke="#2e3436" stroke-width="1"/><path d="M16,12 H8 V30 H20 V26 Q22,23 26,23 H30 V30 H38 V10 H28 M8,21 H15 M33,10 V22" fill="none" stroke="#2e3436" stroke-width="3"/></svg>
<div class="t " style="left:652.6px;top:856.0px;font-size:22.50px;letter-spacing:0.086px;text-shadow:-2px -2px 0.5px #fff,-2px -1px 0.5px #fff,-2px 0px 0.5px #fff,-2px 1px 0.5px #fff,-2px 2px 0.5px #fff,-1px -2px 0.5px #fff,-1px -1px 0.5px #fff,-1px 0px 0.5px #fff,-1px 1px 0.5px #fff,-1px 2px 0.5px #fff,0px -2px 0.5px #fff,0px -1px 0.5px #fff,0px 1px 0.5px #fff,0px 2px 0.5px #fff,1px -2px 0.5px #fff,1px -1px 0.5px #fff,1px 0px 0.5px #fff,1px 1px 0.5px #fff,1px 2px 0.5px #fff,2px -2px 0.5px #fff,2px -1px 0.5px #fff,2px 0px 0.5px #fff,2px 1px 0.5px #fff,2px 2px 0.5px #fff;">Basement</div>
<svg class="abs" style="left:538.8px;top:891.0px" width="10" height="18" viewBox="0 0 10 18"><path d="M0,0 V18 L9.5,9 Z" fill="#000"/></svg>
<svg class="abs" style="left:573.3px;top:887.5px" width="26" height="26" viewBox="0 0 48 48"><path d="M3,24 Q24,2 45,24 Q24,46 3,24 Z" fill="#fff" stroke="#000" stroke-width="4.2" stroke-linejoin="round"/><circle cx="24" cy="24" r="9.5" fill="#000"/><circle cx="20" cy="20" r="3.4" fill="#fff"/></svg>
<svg class="abs" style="left:608.5px;top:885.0px" width="31" height="31" viewBox="0 0 48 48"><path d="M2,6 H46 V34 L36,42 H2 Z" fill="url(#gdoc)" stroke="#2e3436" stroke-width="1.6" stroke-linejoin="round"/><path d="M36,42 L38,34 H46 Z" fill="#888a85" stroke="#2e3436" stroke-width="1"/><path d="M16,12 H8 V30 H20 V26 Q22,23 26,23 H30 V30 H38 V10 H28 M8,21 H15 M33,10 V22" fill="none" stroke="#2e3436" stroke-width="3"/></svg>
<div class="t " style="left:652.6px;top:892.0px;font-size:22.50px;letter-spacing:0.618px;text-shadow:-2px -2px 0.5px #fff,-2px -1px 0.5px #fff,-2px 0px 0.5px #fff,-2px 1px 0.5px #fff,-2px 2px 0.5px #fff,-1px -2px 0.5px #fff,-1px -1px 0.5px #fff,-1px 0px 0.5px #fff,-1px 1px 0.5px #fff,-1px 2px 0.5px #fff,0px -2px 0.5px #fff,0px -1px 0.5px #fff,0px 1px 0.5px #fff,0px 2px 0.5px #fff,1px -2px 0.5px #fff,1px -1px 0.5px #fff,1px 0px 0.5px #fff,1px 1px 0.5px #fff,1px 2px 0.5px #fff,2px -2px 0.5px #fff,2px -1px 0.5px #fff,2px 0px 0.5px #fff,2px 1px 0.5px #fff,2px 2px 0.5px #fff;">Roof</div>
<svg class="abs" style="left:498.8px;top:927.0px" width="10" height="18" viewBox="0 0 10 18"><path d="M0,0 V18 L9.5,9 Z" fill="#000"/></svg>
<svg class="abs" style="left:533.3px;top:923.5px" width="26" height="26" viewBox="0 0 48 48"><path d="M3,24 Q24,2 45,24 Q24,46 3,24 Z" fill="#fff" stroke="#000" stroke-width="4.2" stroke-linejoin="round"/><circle cx="24" cy="24" r="9.5" fill="#000"/><circle cx="20" cy="20" r="3.4" fill="#fff"/></svg>
<svg class="abs" style="left:568.5px;top:921.0px" width="31" height="31" viewBox="0 0 48 48"><path d="M3,6 H17 L21,10 H45 V44 H3 Z" fill="#204a87" stroke="#0f2d59" stroke-width="1.6" stroke-linejoin="round"/><path d="M4,14 H44 V43 H4 Z" fill="url(#gblue)" stroke="#0f2d59" stroke-width="1"/></svg>
<div class="t " style="left:612.6px;top:928.0px;font-size:22.50px;letter-spacing:-0.506px;text-shadow:-2px -2px 0.5px #fff,-2px -1px 0.5px #fff,-2px 0px 0.5px #fff,-2px 1px 0.5px #fff,-2px 2px 0.5px #fff,-1px -2px 0.5px #fff,-1px -1px 0.5px #fff,-1px 0px 0.5px #fff,-1px 1px 0.5px #fff,-1px 2px 0.5px #fff,0px -2px 0.5px #fff,0px -1px 0.5px #fff,0px 1px 0.5px #fff,0px 2px 0.5px #fff,1px -2px 0.5px #fff,1px -1px 0.5px #fff,1px 0px 0.5px #fff,1px 1px 0.5px #fff,1px 2px 0.5px #fff,2px -2px 0.5px #fff,2px -1px 0.5px #fff,2px 0px 0.5px #fff,2px 1px 0.5px #fff,2px 2px 0.5px #fff;">Axes</div>
<svg class="abs" style="left:498.8px;top:963.0px" width="10" height="18" viewBox="0 0 10 18"><path d="M0,0 V18 L9.5,9 Z" fill="#000"/></svg>
<svg class="abs" style="left:533.3px;top:959.5px" width="26" height="26" viewBox="0 0 48 48"><path d="M3,24 Q24,2 45,24 Q24,46 3,24 Z" fill="#fff" stroke="#000" stroke-width="4.2" stroke-linejoin="round"/><circle cx="24" cy="24" r="9.5" fill="#000"/><circle cx="20" cy="20" r="3.4" fill="#fff"/></svg>
<svg class="abs" style="left:568.5px;top:957.0px" width="31" height="31" viewBox="0 0 48 48"><path d="M3,6 H17 L21,10 H45 V44 H3 Z" fill="#204a87" stroke="#0f2d59" stroke-width="1.6" stroke-linejoin="round"/><path d="M4,14 H44 V43 H4 Z" fill="url(#gblue)" stroke="#0f2d59" stroke-width="1"/></svg>
<div class="t " style="left:612.6px;top:964.0px;font-size:22.50px;letter-spacing:0.175px;text-shadow:-2px -2px 0.5px #fff,-2px -1px 0.5px #fff,-2px 0px 0.5px #fff,-2px 1px 0.5px #fff,-2px 2px 0.5px #fff,-1px -2px 0.5px #fff,-1px -1px 0.5px #fff,-1px 0px 0.5px #fff,-1px 1px 0.5px #fff,-1px 2px 0.5px #fff,0px -2px 0.5px #fff,0px -1px 0.5px #fff,0px 1px 0.5px #fff,0px 2px 0.5px #fff,1px -2px 0.5px #fff,1px -1px 0.5px #fff,1px 0px 0.5px #fff,1px 1px 0.5px #fff,1px 2px 0.5px #fff,2px -2px 0.5px #fff,2px -1px 0.5px #fff,2px 0px 0.5px #fff,2px 1px 0.5px #fff,2px 2px 0.5px #fff;">Terrain</div>
<svg class="abs" style="left:498.8px;top:999.0px" width="10" height="18" viewBox="0 0 10 18"><path d="M0,0 V18 L9.5,9 Z" fill="#000"/></svg>
<svg class="abs" style="left:533.3px;top:995.5px" width="26" height="26" viewBox="0 0 48 48"><path d="M3,24 Q24,2 45,24 Q24,46 3,24 Z" fill="#fff" stroke="#000" stroke-width="4.2" stroke-linejoin="round"/><circle cx="24" cy="24" r="9.5" fill="#000"/><circle cx="20" cy="20" r="3.4" fill="#fff"/></svg>
<svg class="abs" style="left:568.5px;top:993.0px" width="31" height="31" viewBox="0 0 48 48"><path d="M3,6 H17 L21,10 H45 V44 H3 Z" fill="#204a87" stroke="#0f2d59" stroke-width="1.6" stroke-linejoin="round"/><path d="M4,14 H44 V43 H4 Z" fill="url(#gblue)" stroke="#0f2d59" stroke-width="1"/></svg>
<div class="t " style="left:612.6px;top:1000.0px;font-size:22.50px;letter-spacing:-0.356px;text-shadow:-2px -2px 0.5px #fff,-2px -1px 0.5px #fff,-2px 0px 0.5px #fff,-2px 1px 0.5px #fff,-2px 2px 0.5px #fff,-1px -2px 0.5px #fff,-1px -1px 0.5px #fff,-1px 0px 0.5px #fff,-1px 1px 0.5px #fff,-1px 2px 0.5px #fff,0px -2px 0.5px #fff,0px -1px 0.5px #fff,0px 1px 0.5px #fff,0px 2px 0.5px #fff,1px -2px 0.5px #fff,1px -1px 0.5px #fff,1px 0px 0.5px #fff,1px 1px 0.5px #fff,1px 2px 0.5px #fff,2px -2px 0.5px #fff,2px -1px 0.5px #fff,2px 0px 0.5px #fff,2px 1px 0.5px #fff,2px 2px 0.5px #fff;">Areas</div>
<svg class="abs" style="left:493.3px;top:1031.5px" width="26" height="26" viewBox="0 0 48 48"><path d="M3,24 Q24,2 45,24 Q24,46 3,24 Z" fill="#fff" stroke="#9a9a9a" stroke-width="4" stroke-linejoin="round"/><path d="M14,24 Q24,10 34,24 Q24,38 14,24" fill="none" stroke="#9a9a9a" stroke-width="3.4"/><path d="M8,2 L42,46" stroke="#6a6a6a" stroke-width="3.2"/></svg>
<svg class="abs" style="left:528.5px;top:1029.0px" width="31" height="31" viewBox="0 0 48 48"><circle cx="24" cy="24" r="21" fill="url(#gdoc)" stroke="#aaa" stroke-width="1.6"/><path d="M24,3 A21,21 0 0 1 24,45 Z" fill="#e4e4e2"/><path d="M25,6 L44,24 L25,42 Z" fill="#8a8a8a"/><text x="13" y="32" font-size="22" font-family="Liberation Sans,sans-serif" text-anchor="middle" fill="#aaa">A</text></svg>
<div class="t " style="left:572.6px;top:1036.0px;font-size:22.50px;letter-spacing:0.165px;text-shadow:-2px -2px 0.5px #fff,-2px -1px 0.5px #fff,-2px 0px 0.5px #fff,-2px 1px 0.5px #fff,-2px 2px 0.5px #fff,-1px -2px 0.5px #fff,-1px -1px 0.5px #fff,-1px 0px 0.5px #fff,-1px 1px 0.5px #fff,-1px 2px 0.5px #fff,0px -2px 0.5px #fff,0px -1px 0.5px #fff,0px 1px 0.5px #fff,0px 2px 0.5px #fff,1px -2px 0.5px #fff,1px -1px 0.5px #fff,1px 0px 0.5px #fff,1px 1px 0.5px #fff,1px 2px 0.5px #fff,2px -2px 0.5px #fff,2px -1px 0.5px #fff,2px 0px 0.5px #fff,2px 1px 0.5px #fff,2px 2px 0.5px #fff;">Section Plane</div>
<svg class="abs" style="left:458.8px;top:1071.0px" width="10" height="18" viewBox="0 0 10 18"><path d="M0,0 V18 L9.5,9 Z" fill="#000"/></svg>
<svg class="abs" style="left:493.3px;top:1067.5px" width="26" height="26" viewBox="0 0 48 48"><path d="M3,24 Q24,2 45,24 Q24,46 3,24 Z" fill="#fff" stroke="#9a9a9a" stroke-width="4" stroke-linejoin="round"/><path d="M14,24 Q24,10 34,24 Q24,38 14,24" fill="none" stroke="#9a9a9a" stroke-width="3.4"/><path d="M8,2 L42,46" stroke="#6a6a6a" stroke-width="3.2"/></svg>
<svg class="abs" style="left:528.5px;top:1065.0px" width="31" height="31" viewBox="0 0 48 48"><path d="M3,6 H17 L21,10 H45 V44 H3 Z" fill="#999" stroke="#666" stroke-width="1.6" stroke-linejoin="round"/><path d="M4,14 H44 V43 H4 Z" fill="url(#ggf)" stroke="#666" stroke-width="1"/></svg>
<div class="t " style="left:572.6px;top:1072.0px;font-size:22.50px;letter-spacing:0.515px;text-shadow:-2px -2px 0.5px #fff,-2px -1px 0.5px #fff,-2px 0px 0.5px #fff,-2px 1px 0.5px #fff,-2px 2px 0.5px #fff,-1px -2px 0.5px #fff,-1px -1px 0.5px #fff,-1px 0px 0.5px #fff,-1px 1px 0.5px #fff,-1px 2px 0.5px #fff,0px -2px 0.5px #fff,0px -1px 0.5px #fff,0px 1px 0.5px #fff,0px 2px 0.5px #fff,1px -2px 0.5px #fff,1px -1px 0.5px #fff,1px 0px 0.5px #fff,1px 1px 0.5px #fff,1px 2px 0.5px #fff,2px -2px 0.5px #fff,2px -1px 0.5px #fff,2px 0px 0.5px #fff,2px 1px 0.5px #fff,2px 2px 0.5px #fff;">2D plan view</div>
<svg class="abs" style="left:458.8px;top:1107.0px" width="10" height="18" viewBox="0 0 10 18"><path d="M0,0 V18 L9.5,9 Z" fill="#000"/></svg>
<svg class="abs" style="left:493.3px;top:1103.5px" width="26" height="26" viewBox="0 0 48 48"><path d="M3,24 Q24,2 45,24 Q24,46 3,24 Z" fill="#fff" stroke="#000" stroke-width="4.2" stroke-linejoin="round"/><circle cx="24" cy="24" r="9.5" fill="#000"/><circle cx="20" cy="20" r="3.4" fill="#fff"/></svg>
<svg class="abs" style="left:528.5px;top:1101.0px" width="31" height="31" viewBox="0 0 48 48"><path d="M3,6 H17 L21,10 H45 V44 H3 Z" fill="#204a87" stroke="#0f2d59" stroke-width="1.6" stroke-linejoin="round"/><path d="M4,14 H44 V43 H4 Z" fill="url(#gblue)" stroke="#0f2d59" stroke-width="1"/></svg>
<div class="t " style="left:572.6px;top:1108.0px;font-size:22.50px;letter-spacing:-0.175px;text-shadow:-2px -2px 0.5px #fff,-2px -1px 0.5px #fff,-2px 0px 0.5px #fff,-2px 1px 0.5px #fff,-2px 2px 0.5px #fff,-1px -2px 0.5px #fff,-1px -1px 0.5px #fff,-1px 0px 0.5px #fff,-1px 1px 0.5px #fff,-1px 2px 0.5px #fff,0px -2px 0.5px #fff,0px -1px 0.5px #fff,0px 1px 0.5px #fff,0px 2px 0.5px #fff,1px -2px 0.5px #fff,1px -1px 0.5px #fff,1px 0px 0.5px #fff,1px 1px 0.5px #fff,1px 2px 0.5px #fff,2px -2px 0.5px #fff,2px -1px 0.5px #fff,2px 0px 0.5px #fff,2px 1px 0.5px #fff,2px 2px 0.5px #fff;">Sheets</div>
<svg class="abs" style="left:493.3px;top:1139.5px" width="26" height="26" viewBox="0 0 48 48"><path d="M3,24 Q24,2 45,24 Q24,46 3,24 Z" fill="#fff" stroke="#000" stroke-width="4.2" stroke-linejoin="round"/><circle cx="24" cy="24" r="9.5" fill="#000"/><circle cx="20" cy="20" r="3.4" fill="#fff"/></svg>
<svg class="abs" style="left:528.5px;top:1137.0px" width="31" height="31" viewBox="0 0 48 48"><path d="M8,2 H32 L40,10 V46 H8 Z" fill="url(#gdoc)" stroke="#2e3436" stroke-width="1.6" stroke-linejoin="round"/><path d="M32,2 V10 H40 Z" fill="#babdb6" stroke="#2e3436" stroke-width="1.2"/><path d="M13,16 H27 M13,22 H34 M13,28 H30 M13,34 H34 M13,40 H26" stroke="#888a85" stroke-width="3"/></svg>
<div class="t " style="left:572.6px;top:1144.0px;font-size:22.50px;letter-spacing:-0.711px;text-shadow:-2px -2px 0.5px #fff,-2px -1px 0.5px #fff,-2px 0px 0.5px #fff,-2px 1px 0.5px #fff,-2px 2px 0.5px #fff,-1px -2px 0.5px #fff,-1px -1px 0.5px #fff,-1px 0px 0.5px #fff,-1px 1px 0.5px #fff,-1px 2px 0.5px #fff,0px -2px 0.5px #fff,0px -1px 0.5px #fff,0px 1px 0.5px #fff,0px 2px 0.5px #fff,1px -2px 0.5px #fff,1px -1px 0.5px #fff,1px 0px 0.5px #fff,1px 1px 0.5px #fff,1px 2px 0.5px #fff,2px -2px 0.5px #fff,2px -1px 0.5px #fff,2px 0px 0.5px #fff,2px 1px 0.5px #fff,2px 2px 0.5px #fff;">README</div>
<div class="abs" style="left:402.3px;top:1476.5px;width:65.5px;height:45.5px;box-sizing:border-box;border:2px solid #b4b4b4;border-radius:3px;background:linear-gradient(#e8e8e8,#d4d4d4)"></div>
<div class="abs" style="left:468.5px;top:1474.0px;width:65.5px;height:54.0px;box-sizing:border-box;border:2px solid #c4c4c4;border-top:none;border-radius:0 0 4px 4px;background:#fff"></div>
<div class="t " style="left:412.6px;top:1489.9px;font-size:22.00px;letter-spacing:-0.672px;color:#6e6e6e;">View</div>
<div class="t " style="left:479.0px;top:1494.0px;font-size:21.50px;letter-spacing:-0.354px;">Data</div>
<div class="abs" style="left:402.3px;top:1530.0px;width:297.0px;height:58.7px;box-sizing:border-box;border:2px solid #b4b4b4;border-top:none;border-radius:0 0 4px 4px;background:linear-gradient(#f0f0f0,#ffffff 60%)"></div>
<svg class="abs" style="left:413.0px;top:1545.0px" width="30" height="30" viewBox="0 0 48 48"><path d="M8,2 H32 L40,10 V46 H8 Z" fill="url(#gdocv)" stroke="#2e3436" stroke-width="1.6" stroke-linejoin="round"/><path d="M32,2 V10 H40 Z" fill="#babdb6" stroke="#2e3436" stroke-width="1.4" stroke-linejoin="round"/><circle cx="30" cy="19" r="8.5" fill="url(#gredr)" stroke="#600" stroke-width="1"/><path d="M14,24.75 l9.5,-4.75 l9.5,4.75 v10.450000000000001 l-9.5,4.75 l-9.5,-4.75 Z" fill="#3465a4"/><path d="M14,24.75 l9.5,-4.75 l9.5,4.75 l-9.5,4.75 Z" fill="#79a7dc"/><path d="M23.5,29.5 l9.5,-4.75 v10.450000000000001 l-9.5,4.75 Z" fill="#204a87"/><path d="M14,24.7 l9.5,-4.7 l9.5,4.7 v10.5 l-9.5,4.7 l-9.5,-4.7 Z M14,24.7 l9.5,4.7 l9.5,-4.7 M23.5,29.4 v10.5" fill="none" stroke="#0f2d59" stroke-width="1.2" stroke-linejoin="round"/></svg>
<div class="t " style="left:464.5px;top:1551.8px;font-size:21.50px;letter-spacing:0.292px;">BIMExample : 1*</div>
<svg class="abs" style="left:656px;top:1547px" width="28" height="28" viewBox="0 0 28 28"><path d="M3,3 L25,25 M25,3 L3,25" fill="none" stroke="#555" stroke-width="5"/></svg>
<div class="t " style="left:4.4px;top:1625.7px;font-size:21.50px;letter-spacing:0.157px;">Preselected: BIMExample.Wall014.Face3 (3687.46 mm, 21.42 m, 1345.48 mm)</div>
<svg class="abs" style="left:1635.5px;top:1615.5px" width="41" height="41" viewBox="0 0 48 48"><rect x="2" y="3" width="44" height="42" rx="5" fill="#2e3436" stroke="#111" stroke-width="1.6"/><rect x="6" y="7" width="36" height="34" rx="2" fill="#2f6b12" stroke="#1d4208" stroke-width="1"/><path d="M11,18 L19,24 L11,30 M22,32 H32" fill="none" stroke="#fff" stroke-width="3.2"/></svg>
<div class="abs" style="left:1690.9px;top:1604.0px;width:63.7px;height:64.6px;box-sizing:border-box;border:2px solid #d0d0d0;border-radius:5px;background:linear-gradient(#ececec,#dedede)"></div>
<svg class="abs" style="left:1701.5px;top:1616.0px" width="40" height="40" viewBox="0 0 48 48"><rect x="5" y="7" width="38" height="34" fill="#fff" stroke="#2e3436" stroke-width="1.2"/><path d="M5,16 H43 M5,24 H43 M5,33 H43 M14,7 V41 M24,7 V41 M33,7 V41" stroke="#babdb6" stroke-width="1.2"/><path d="M11,20 V35 H30" fill="none" stroke="#2e3436" stroke-width="1.4"/><path d="M11,19 L8.5,25 H13.5 Z M36,35 L29,32 V38 Z" fill="#fff" stroke="#2e3436" stroke-width="1.2"/></svg>
<svg class="abs" style="left:1766.8px;top:1615.5px" width="42" height="42" viewBox="0 0 48 48"><path d="M3,3 H45 L3,45 Z" fill="url(#gdiag)" stroke="#111" stroke-width="1.4"/><path d="M45,3 V45 H3 Z" fill="#fff" stroke="#111" stroke-width="1.4"/></svg>
<svg class="abs" style="left:1829.6px;top:1614.5px" width="44" height="44" viewBox="0 0 48 48"><g fill="none" stroke="#c4c4c4" stroke-width="5" stroke-linejoin="round"><path d="M6,17 L17,6 L28,17 L17,28 Z"/><path d="M20,17 L31,6 L42,17 L31,28 Z"/><path d="M6,31 L17,20 L28,31 L17,42 Z"/><path d="M20,31 L31,20 L42,31 L31,42 Z"/></g></svg>
<div class="abs" style="left:1886.2px;top:1611.0px;width:179.1px;height:50.7px;box-sizing:border-box;border:2px solid #b4b4b4;border-radius:5px;background:linear-gradient(#fdfdfd,#f3f3f3)"></div>
<svg class="abs" style="left:1934.3px;top:1623.0px" width="26" height="26" viewBox="0 0 48 48"><g transform="translate(24,24) scale(1.0) translate(-24,-24)"><path d="M24,1 L33,12 H27.5 V20.5 H36 V15 L47,24 L36,33 V27.5 H27.5 V36 H33 L24,47 L15,36 H20.5 V27.5 H12 V33 L1,24 L12,15 V20.5 H20.5 V12 H15 Z" fill="url(#gblue)" stroke="#0f2d59" stroke-width="1.7" stroke-linejoin="round"/></g></svg>
<div class="t " style="left:1967.9px;top:1628.3px;font-size:21.50px;letter-spacing:0.018px;">Auto</div>
<svg class="abs" style="left:2044.4px;top:1634.0px" width="14" height="8" viewBox="0 0 14 8"><path d="M0,0 H14 L7,7 Z" fill="#444"/></svg>
<div class="abs" style="left:1617.5px;top:1676.5px;width:456.5px;height:2.0px;background:#b9b9b9"></div>
<div class="abs" style="left:2120.2px;top:1611.0px;width:179.1px;height:50.7px;box-sizing:border-box;border:2px solid #b4b4b4;border-radius:5px;background:linear-gradient(#fdfdfd,#f3f3f3)"></div>
<div class="abs" style="left:2123.9px;top:1623.0px;width:27.7px;height:26.0px;box-sizing:border-box;background:linear-gradient(135deg,#4a86c8,#2f63a6);border:1px solid #1d4580"></div>
<svg class="abs" style="left:2278.5px;top:1634.0px" width="14" height="8" viewBox="0 0 14 8"><path d="M0,0 H14 L7,7 Z" fill="#444"/></svg>
<div class="abs" style="left:2312.2px;top:1611.0px;width:179.1px;height:50.7px;box-sizing:border-box;border:2px solid #b4b4b4;border-radius:5px;background:linear-gradient(#fdfdfd,#f3f3f3)"></div>
<svg class="abs" style="left:2356.8px;top:1623.0px" width="26" height="26" viewBox="0 0 48 48"><rect x="14" y="4" width="20" height="40" rx="10" fill="none" stroke="#111" stroke-width="3.6"/><path d="M24,10 V20" stroke="#111" stroke-width="3.6"/></svg>
<div class="t " style="left:2390.2px;top:1628.3px;font-size:21.50px;letter-spacing:-1.565px;">CAD</div>
<svg class="abs" style="left:2470.0px;top:1634.0px" width="14" height="8" viewBox="0 0 14 8"><path d="M0,0 H14 L7,7 Z" fill="#444"/></svg>
<div class="abs" style="left:2503.8px;top:1611.0px;width:229.4px;height:50.7px;box-sizing:border-box;border:2px solid #b4b4b4;border-radius:5px;background:linear-gradient(#fdfdfd,#f3f3f3)"></div>
<div class="t " style="left:2516.3px;top:1628.3px;font-size:21.50px;letter-spacing:0.343px;">19,74 m x 11,25 m</div>
<svg class="abs" style="left:2713.3px;top:1634.0px" width="14" height="8" viewBox="0 0 14 8"><path d="M0,0 H14 L7,7 Z" fill="#444"/></svg>
<svg class="abs" style="left:2580px;top:200px" width="156" height="140" viewBox="2580 200 156 140"><g fill="#e4f1fb" stroke="#98a8b8" stroke-width="1.1" stroke-linejoin="round"><path d="M2651,219 L2663.5,206 L2676,219 Z"/><path d="M2651,324 L2676,324 L2663.5,337.5 Z"/><path d="M2612,259.5 V284 L2598,272 Z"/><path d="M2716.5,259.5 V284 L2730,272 Z"/><path d="M2615,241 Q2622,220 2645,212.5 L2647.5,220 Q2632,225 2625,238 L2630,240 L2614.5,241 Z"/><path d="M2713,241 Q2706,220 2683,212.5 L2680.5,220 Q2696,225 2703,238 L2698,240 L2713.5,241 Z"/><circle cx="2721.5" cy="214.2" r="6.6"/><path d="M2698.5,314 L2708.5,308.5 L2719,313 V324 L2709,328.5 L2698.5,324 Z M2698.5,314 L2709,318 L2719,313 M2709,318 V328.5"/><path d="M2636.5,243.0 L2664.6,241.0 L2692.7,242.0 L2701.0,252.9 L2702.3,276.1 L2697.7,296.6 L2663.0,311.1 L2646.4,305.8 L2631.5,289.9 L2627.2,266.1 L2629.9,249.6 Z"/><path d="M2636.5,243.0 L2650.4,246.6 L2666.3,246.6 L2692.7,242.0 M2650.4,246.6 L2643.1,254.9 L2651.7,264.8 L2662.3,264.8 L2669.9,254.9 L2666.3,246.6 M2669.9,254.9 L2701.0,252.9 M2643.1,254.9 L2629.9,249.6 M2651.7,264.8 L2651.4,301.2 L2646.4,305.8 M2662.3,264.8 L2661.3,303.2 L2663.0,311.1 M2651.4,301.2 L2661.3,303.2" fill="none"/></g><text x="2682" y="284" font-family="Liberation Sans,sans-serif" font-size="8.5" fill="#9aa5ae" text-anchor="middle" transform="rotate(-10 2682 281)">RECHTS</text><text x="2639.5" y="281" font-family="Liberation Sans,sans-serif" font-size="7.5" fill="#9aa5ae" text-anchor="middle" transform="rotate(16 2639.5 279)">VORNE</text><path d="M2620.8,256 L2623.8,297" stroke="#3535e8" stroke-width="1.4"/><path d="M2623.8,297 L2658.5,288" stroke="#6fe36f" stroke-width="1.2"/><path d="M2623.8,297 L2644.5,316.5" stroke="#e84040" stroke-width="1.4"/></svg>
</body></html>
